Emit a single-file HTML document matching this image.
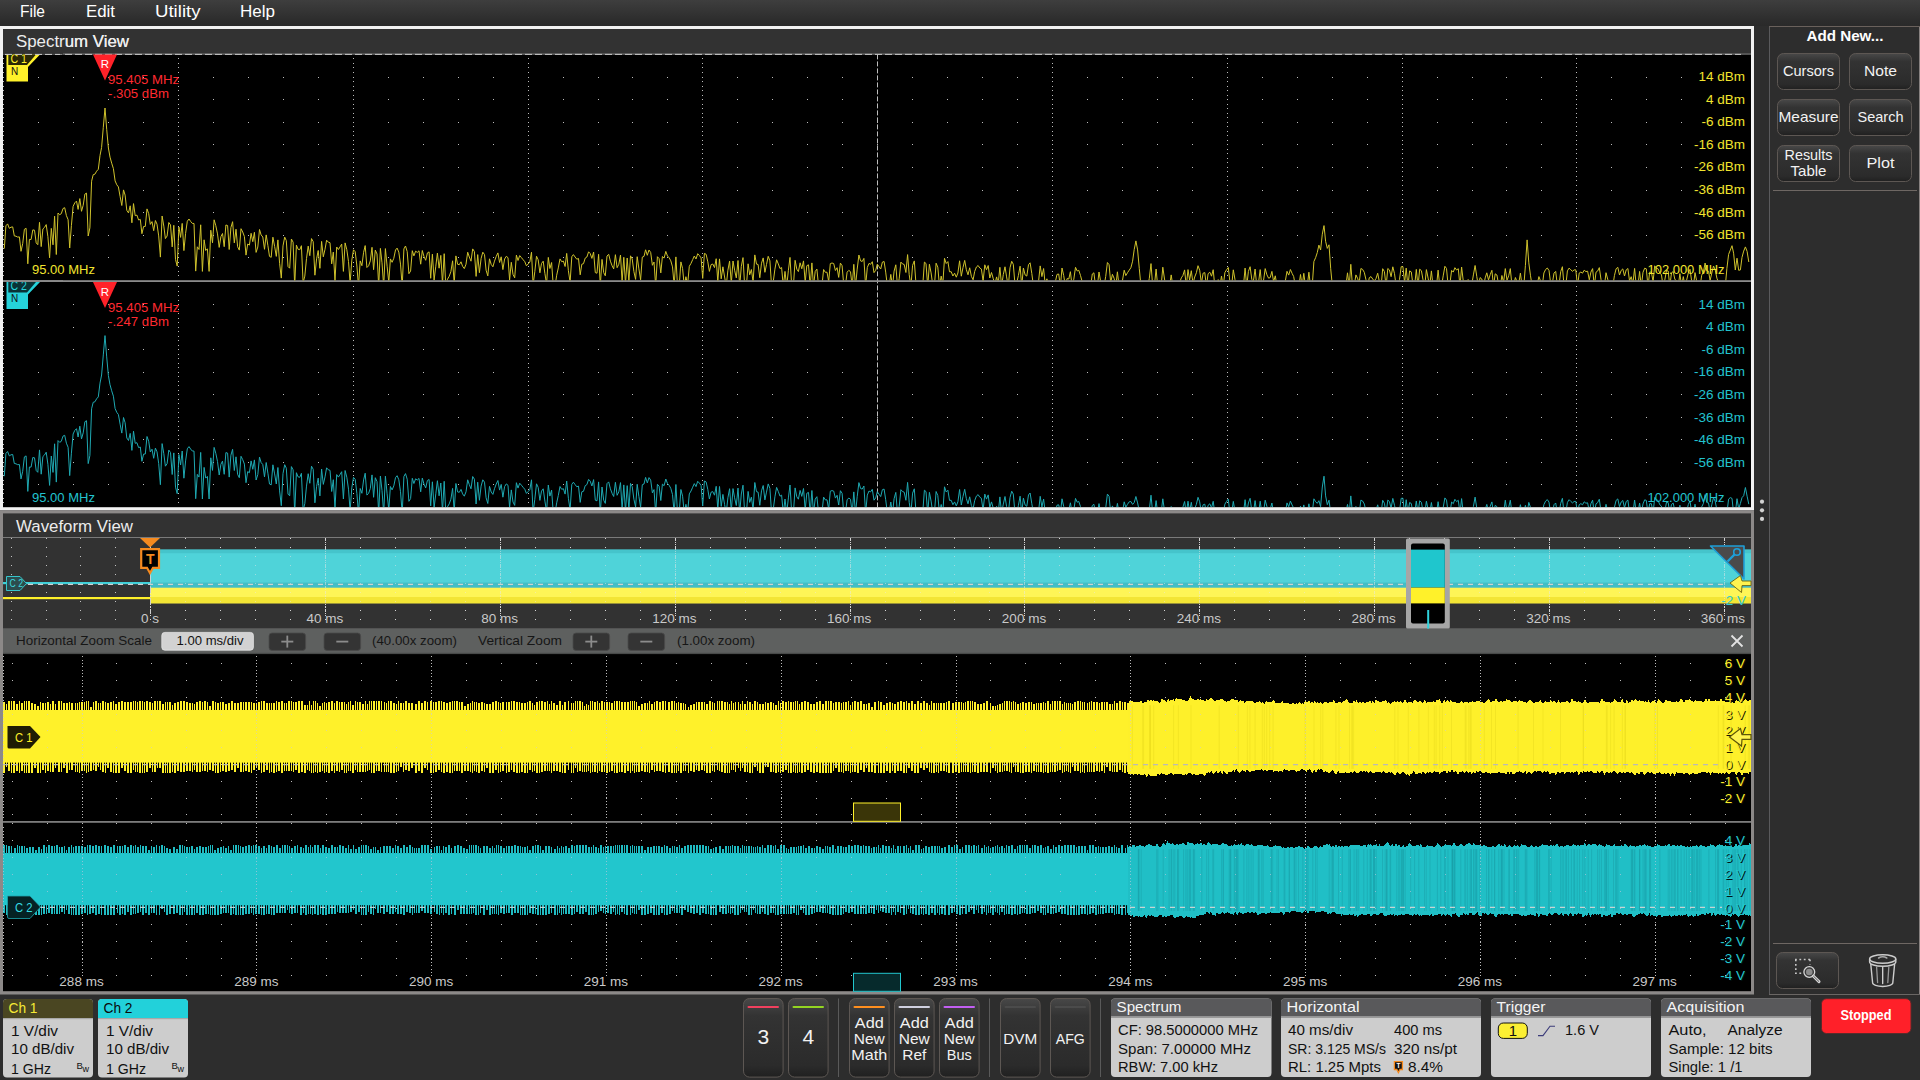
<!DOCTYPE html>
<html><head><meta charset="utf-8"><title>Scope</title>
<style>
html,body{margin:0;padding:0;background:#2d2d2d;width:1920px;height:1080px;overflow:hidden}
svg{position:absolute;left:0;top:0;font-family:"Liberation Sans",sans-serif}
text{white-space:pre}
</style></head><body>
<svg width="1920" height="1080" viewBox="0 0 1920 1080">
<defs><linearGradient id="gmenu" x1="0" y1="0" x2="0" y2="1"><stop offset="0" stop-color="#3e3e3e"/><stop offset="0.8" stop-color="#2c2c2c"/><stop offset="1" stop-color="#2a2a2a"/></linearGradient><linearGradient id="gbtn" x1="0" y1="0" x2="0" y2="1"><stop offset="0" stop-color="#484848"/><stop offset="0.22" stop-color="#333333"/><stop offset="0.85" stop-color="#2b2b2b"/><stop offset="1" stop-color="#202020"/></linearGradient></defs>
<rect x="0" y="0" width="1920" height="26" fill="url(#gmenu)"/>
<text x="20" y="17.2" font-size="16" fill="#fff" textLength="25" lengthAdjust="spacingAndGlyphs">File</text>
<text x="86" y="17.2" font-size="16" fill="#fff" textLength="29" lengthAdjust="spacingAndGlyphs">Edit</text>
<text x="155" y="17.2" font-size="16" fill="#fff" textLength="45.5" lengthAdjust="spacingAndGlyphs">Utility</text>
<text x="240" y="17.2" font-size="16" fill="#fff" textLength="35" lengthAdjust="spacingAndGlyphs">Help</text>
<rect x="0" y="26" width="1754" height="484.4" fill="#f2f2f2"/>
<rect x="3" y="29" width="1748" height="25.4" fill="#323232"/>
<rect x="3" y="54.4" width="1748" height="452.8" fill="#000"/>
<text x="16" y="47" font-size="16.3" fill="#ececec" textLength="113" lengthAdjust="spacingAndGlyphs">Spectrum View</text>
<rect x="0" y="510.4" width="1754" height="484.1" fill="#8c8988"/>
<rect x="3" y="513.4" width="1748" height="115.3" fill="#323232"/>
<rect x="3" y="537" width="1748" height="1" fill="#7a7a7a"/>
<rect x="3" y="628.6" width="1748" height="25.5" fill="#5e605f"/>
<rect x="3" y="654" width="1748" height="337.2" fill="#000"/>
<text x="16" y="531.6" font-size="16.3" fill="#ececec" textLength="117" lengthAdjust="spacingAndGlyphs">Waveform View</text>
<g stroke="#bcbcbc" stroke-width="1" opacity="1" shape-rendering="crispEdges"><line x1="38.16" y1="77.00" x2="1690" y2="77.00" stroke-dasharray="1 33.960"/><line x1="38.16" y1="99.60" x2="1690" y2="99.60" stroke-dasharray="1 33.960"/><line x1="38.16" y1="122.20" x2="1690" y2="122.20" stroke-dasharray="1 33.960"/><line x1="38.16" y1="144.80" x2="1690" y2="144.80" stroke-dasharray="1 33.960"/><line x1="38.16" y1="167.40" x2="1690" y2="167.40" stroke-dasharray="1 33.960"/><line x1="38.16" y1="190.00" x2="1690" y2="190.00" stroke-dasharray="1 33.960"/><line x1="38.16" y1="212.60" x2="1690" y2="212.60" stroke-dasharray="1 33.960"/><line x1="38.16" y1="235.20" x2="1690" y2="235.20" stroke-dasharray="1 33.960"/><line x1="38.16" y1="257.80" x2="1749.0" y2="257.80" stroke-dasharray="1 33.960"/><line x1="3.50" y1="58.42" x2="3.50" y2="280.40" stroke-dasharray="1 3.520"/><line x1="178.50" y1="58.42" x2="178.50" y2="280.40" stroke-dasharray="1 3.520"/><line x1="353.30" y1="58.42" x2="353.30" y2="280.40" stroke-dasharray="1 3.520"/><line x1="528.10" y1="58.42" x2="528.10" y2="280.40" stroke-dasharray="1 3.520"/><line x1="702.90" y1="58.42" x2="702.90" y2="280.40" stroke-dasharray="1 3.520"/><line x1="1052.50" y1="58.42" x2="1052.50" y2="280.40" stroke-dasharray="1 3.520"/><line x1="1227.30" y1="58.42" x2="1227.30" y2="280.40" stroke-dasharray="1 3.520"/><line x1="1402.10" y1="58.42" x2="1402.10" y2="280.40" stroke-dasharray="1 3.520"/><line x1="1576.90" y1="58.42" x2="1576.90" y2="280.40" stroke-dasharray="1 3.520"/></g>
<g stroke="#bcbcbc" stroke-width="1" opacity="1" shape-rendering="crispEdges"><line x1="38.16" y1="304.52" x2="1690" y2="304.52" stroke-dasharray="1 33.960"/><line x1="38.16" y1="327.04" x2="1690" y2="327.04" stroke-dasharray="1 33.960"/><line x1="38.16" y1="349.56" x2="1690" y2="349.56" stroke-dasharray="1 33.960"/><line x1="38.16" y1="372.08" x2="1690" y2="372.08" stroke-dasharray="1 33.960"/><line x1="38.16" y1="394.60" x2="1690" y2="394.60" stroke-dasharray="1 33.960"/><line x1="38.16" y1="417.12" x2="1690" y2="417.12" stroke-dasharray="1 33.960"/><line x1="38.16" y1="439.64" x2="1690" y2="439.64" stroke-dasharray="1 33.960"/><line x1="38.16" y1="462.16" x2="1690" y2="462.16" stroke-dasharray="1 33.960"/><line x1="38.16" y1="484.68" x2="1749.0" y2="484.68" stroke-dasharray="1 33.960"/><line x1="3.50" y1="286.00" x2="3.50" y2="507.20" stroke-dasharray="1 3.504"/><line x1="178.50" y1="286.00" x2="178.50" y2="507.20" stroke-dasharray="1 3.504"/><line x1="353.30" y1="286.00" x2="353.30" y2="507.20" stroke-dasharray="1 3.504"/><line x1="528.10" y1="286.00" x2="528.10" y2="507.20" stroke-dasharray="1 3.504"/><line x1="702.90" y1="286.00" x2="702.90" y2="507.20" stroke-dasharray="1 3.504"/><line x1="1052.50" y1="286.00" x2="1052.50" y2="507.20" stroke-dasharray="1 3.504"/><line x1="1227.30" y1="286.00" x2="1227.30" y2="507.20" stroke-dasharray="1 3.504"/><line x1="1402.10" y1="286.00" x2="1402.10" y2="507.20" stroke-dasharray="1 3.504"/><line x1="1576.90" y1="286.00" x2="1576.90" y2="507.20" stroke-dasharray="1 3.504"/></g>
<rect x="3" y="53.4" width="1748" height="1" fill="#6c6c6c"/>
<line x1="5" y1="54.4" x2="1741" y2="54.4" stroke="#c8c8c8" stroke-width="1" stroke-dasharray="7 3"/>
<line x1="877.5" y1="54.4" x2="877.5" y2="507" stroke="#bdbdbd" stroke-width="1" stroke-dasharray="5 2"/>
<rect x="3" y="280.2" width="1748" height="1.8" fill="#8a8a8a"/>
<clipPath id="c54"><rect x="3" y="54.4" width="1748" height="225.8"/></clipPath>
<path d="M4.3,248.6 5.9,225.8 7.6,223.9 9.3,228.3 11.0,227.2 12.7,226.9 14.3,235.9 16.0,236.2 17.7,237.1 19.4,236.9 21.0,251.3 22.7,243.7 24.4,229.3 26.1,228.3 27.8,263.8 29.4,239.4 31.1,239.5 32.8,229.9 34.5,230.2 36.2,242.9 37.8,244.7 39.5,222.3 41.2,246.6 42.9,228.9 44.6,227.3 46.2,224.6 47.9,236.7 49.6,257.8 51.3,228.4 53.0,244.8 54.6,216.2 56.3,254.5 58.0,213.0 59.7,214.7 61.3,213.7 63.0,208.5 64.7,207.7 66.4,215.6 68.1,219.7 69.7,248.0 71.4,225.6 73.1,206.4 74.8,202.8 76.5,201.1 78.1,209.4 79.8,198.6 81.5,211.3 83.2,205.3 84.9,194.1 86.5,193.1 88.2,236.0 89.9,227.9 91.6,181.2 93.2,174.7 94.9,174.2 96.6,171.2 98.3,169.3 100.0,155.5 101.6,147.4 103.3,127.3 105.0,108.0 106.7,129.3 108.4,148.0 110.0,157.1 111.7,163.2 113.4,168.6 115.1,180.9 116.8,184.8 118.4,186.9 120.1,196.5 121.8,205.5 123.5,189.9 125.1,195.1 126.8,210.4 128.5,212.9 130.2,205.8 131.9,222.8 133.5,203.6 135.2,215.7 136.9,215.1 138.6,220.0 140.3,219.4 141.9,233.7 143.6,226.5 145.3,226.4 147.0,208.9 148.7,213.6 150.3,224.4 152.0,221.6 153.7,230.7 155.4,220.5 157.0,224.2 158.7,235.9 160.4,257.1 162.1,216.0 163.8,226.1 165.4,238.6 167.1,236.0 168.8,222.5 170.5,224.9 172.2,246.9 173.8,225.3 175.5,259.6 177.2,266.1 178.9,227.0 180.6,237.4 182.2,223.4 183.9,250.6 185.6,233.3 187.3,221.2 189.0,219.0 190.6,221.4 192.3,223.4 194.0,223.5 195.7,271.1 197.3,246.8 199.0,249.5 200.7,224.8 202.4,271.4 204.1,239.8 205.7,250.5 207.4,248.8 209.1,271.4 210.8,230.2 212.5,242.8 214.1,219.8 215.8,225.7 217.5,233.9 219.2,247.4 220.9,236.7 222.5,233.5 224.2,246.7 225.9,225.0 227.6,225.5 229.2,249.5 230.9,227.6 232.6,221.7 234.3,242.9 236.0,229.2 237.6,246.7 239.3,250.1 241.0,228.7 242.7,232.0 244.4,236.5 246.0,255.1 247.7,244.0 249.4,245.1 251.1,233.3 252.8,241.7 254.4,232.3 256.1,252.4 257.8,247.0 259.5,229.5 261.1,234.9 262.8,237.0 264.5,249.3 266.2,234.9 267.9,245.6 269.5,256.4 271.2,257.3 272.9,237.2 274.6,246.3 276.3,256.4 277.9,239.9 279.6,263.3 281.3,278.1 283.0,245.9 284.7,237.1 286.3,240.6 288.0,266.5 289.7,268.2 291.4,239.0 293.1,242.2 294.7,286.4 296.4,245.1 298.1,249.3 299.8,249.7 301.4,245.7 303.1,282.7 304.8,276.1 306.5,258.5 308.2,246.1 309.8,255.7 311.5,238.6 313.2,241.7 314.9,275.2 316.6,258.8 318.2,250.5 319.9,268.3 321.6,241.4 323.3,256.8 325.0,249.3 326.6,240.2 328.3,242.2 330.0,242.7 331.7,263.9 333.3,252.1 335.0,281.2 336.7,247.0 338.4,249.5 340.1,246.8 341.7,244.1 343.4,271.4 345.1,242.9 346.8,249.6 348.5,261.6 350.1,283.1 351.8,260.2 353.5,249.8 355.2,251.7 356.9,266.0 358.5,286.4 360.2,260.9 361.9,265.7 363.6,252.3 365.2,245.6 366.9,267.5 368.6,265.8 370.3,260.9 372.0,247.3 373.6,269.7 375.3,250.1 377.0,254.0 378.7,286.2 380.4,248.4 382.0,262.8 383.7,286.4 385.4,248.6 387.1,266.2 388.8,282.2 390.4,258.9 392.1,262.3 393.8,258.3 395.5,250.0 397.1,248.1 398.8,252.1 400.5,264.1 402.2,286.4 403.9,248.9 405.5,246.0 407.2,251.6 408.9,273.7 410.6,271.0 412.3,250.7 413.9,255.9 415.6,251.2 417.3,252.4 419.0,250.8 420.7,264.2 422.3,250.5 424.0,256.6 425.7,260.3 427.4,252.9 429.1,251.9 430.7,278.3 432.4,254.2 434.1,280.1 435.8,266.2 437.4,253.1 439.1,268.2 440.8,255.4 442.5,283.9 444.2,253.7 445.8,286.3 447.5,279.2 449.2,276.3 450.9,271.6 452.6,260.8 454.2,283.7 455.9,255.9 457.6,264.3 459.3,264.7 461.0,261.8 462.6,266.3 464.3,268.6 466.0,264.2 467.7,252.2 469.3,257.0 471.0,261.2 472.7,248.9 474.4,251.6 476.1,276.4 477.7,254.6 479.4,272.7 481.1,258.5 482.8,252.2 484.5,254.6 486.1,270.2 487.8,275.9 489.5,258.8 491.2,264.4 492.9,266.8 494.5,261.1 496.2,256.5 497.9,252.9 499.6,262.5 501.2,256.8 502.9,269.6 504.6,259.0 506.3,256.3 508.0,257.7 509.6,279.9 511.3,262.3 513.0,274.4 514.7,277.8 516.4,255.1 518.0,260.5 519.7,255.6 521.4,257.6 523.1,259.7 524.8,261.7 526.4,265.8 528.1,264.0 529.8,262.1 531.5,252.2 533.1,284.8 534.8,271.7 536.5,256.2 538.2,259.8 539.9,272.8 541.5,263.5 543.2,261.2 544.9,273.5 546.6,284.1 548.3,257.4 549.9,268.5 551.6,262.5 553.3,286.4 555.0,286.4 556.7,275.2 558.3,267.9 560.0,258.9 561.7,261.7 563.4,261.1 565.1,266.5 566.7,253.4 568.4,270.7 570.1,282.3 571.8,256.7 573.4,254.6 575.1,257.0 576.8,259.2 578.5,258.5 580.2,274.8 581.8,264.2 583.5,263.7 585.2,258.1 586.9,257.0 588.6,251.8 590.2,253.5 591.9,258.4 593.6,252.0 595.3,272.6 597.0,273.2 598.6,254.3 600.3,285.7 602.0,259.4 603.7,272.6 605.3,275.8 607.0,256.0 608.7,254.3 610.4,261.2 612.1,265.8 613.7,268.9 615.4,254.7 617.1,267.7 618.8,264.3 620.5,255.0 622.1,281.8 623.8,257.3 625.5,283.9 627.2,258.0 628.9,281.7 630.5,255.8 632.2,258.9 633.9,271.6 635.6,279.4 637.2,256.7 638.9,268.9 640.6,279.8 642.3,257.1 644.0,256.4 645.6,249.8 647.3,255.3 649.0,250.0 650.7,252.5 652.4,265.3 654.0,262.0 655.7,286.4 657.4,256.7 659.1,258.6 660.8,272.9 662.4,256.5 664.1,258.1 665.8,251.4 667.5,256.0 669.2,257.8 670.8,260.8 672.5,266.9 674.2,285.6 675.9,256.9 677.5,286.1 679.2,286.4 680.9,261.9 682.6,268.6 684.3,286.4 685.9,276.7 687.6,284.7 689.3,266.3 691.0,263.4 692.7,259.6 694.3,256.0 696.0,259.0 697.7,253.7 699.4,255.5 701.1,257.9 702.7,278.4 704.4,253.4 706.1,254.3 707.8,261.8 709.4,271.4 711.1,264.6 712.8,264.0 714.5,267.6 716.2,258.7 717.8,281.7 719.5,258.9 721.2,278.8 722.9,266.8 724.6,277.0 726.2,286.4 727.9,270.2 729.6,261.1 731.3,283.4 733.0,261.0 734.6,270.2 736.3,277.9 738.0,260.5 739.7,286.4 741.3,266.4 743.0,257.6 744.7,286.4 746.4,286.4 748.1,263.8 749.7,274.8 751.4,269.5 753.1,281.9 754.8,254.9 756.5,264.1 758.1,264.5 759.8,277.7 761.5,263.2 763.2,257.9 764.9,272.3 766.5,264.5 768.2,256.3 769.9,260.8 771.6,286.4 773.2,282.2 774.9,269.2 776.6,259.8 778.3,263.9 780.0,268.6 781.6,267.5 783.3,286.4 785.0,271.4 786.7,286.4 788.4,270.3 790.0,257.4 791.7,286.4 793.4,285.9 795.1,260.3 796.8,269.2 798.4,271.6 800.1,262.8 801.8,268.8 803.5,260.9 805.2,282.3 806.8,265.7 808.5,264.8 810.2,286.4 811.9,262.9 813.5,286.4 815.2,271.5 816.9,269.1 818.6,286.4 820.3,286.4 821.9,286.4 823.6,269.5 825.3,272.3 827.0,272.2 828.7,281.6 830.3,263.6 832.0,263.0 833.7,263.5 835.4,270.5 837.1,267.7 838.7,277.4 840.4,263.1 842.1,265.7 843.8,285.7 845.4,285.8 847.1,272.2 848.8,270.4 850.5,271.7 852.2,286.4 853.8,264.3 855.5,286.4 857.2,269.1 858.9,255.0 860.6,260.9 862.2,261.5 863.9,258.4 865.6,286.4 867.3,267.5 869.0,263.4 870.6,264.3 872.3,261.7 874.0,272.6 875.7,270.3 877.3,264.1 879.0,266.6 880.7,269.0 882.4,262.1 884.1,261.5 885.7,272.1 887.4,286.4 889.1,286.4 890.8,274.4 892.5,286.4 894.1,271.1 895.8,264.8 897.5,286.4 899.2,278.8 900.9,262.1 902.5,263.9 904.2,264.5 905.9,272.5 907.6,254.6 909.2,274.6 910.9,286.4 912.6,265.3 914.3,260.9 916.0,284.2 917.6,281.8 919.3,281.2 921.0,286.4 922.7,286.4 924.4,262.1 926.0,263.5 927.7,286.4 929.4,264.2 931.1,272.9 932.8,285.4 934.4,286.4 936.1,263.2 937.8,267.1 939.5,286.4 941.2,276.1 942.8,284.4 944.5,258.3 946.2,263.5 947.9,261.6 949.5,271.8 951.2,271.7 952.9,276.0 954.6,273.2 956.3,277.2 957.9,273.0 959.6,260.8 961.3,276.2 963.0,267.5 964.7,260.4 966.3,269.5 968.0,274.8 969.7,267.8 971.4,276.4 973.1,279.8 974.7,271.4 976.4,267.0 978.1,265.5 979.8,268.0 981.4,269.0 983.1,281.2 984.8,264.8 986.5,269.7 988.2,265.5 989.8,278.0 991.5,272.5 993.2,278.4 994.9,284.1 996.6,276.9 998.2,283.5 999.9,267.3 1001.6,286.4 1003.3,274.5 1005.0,266.8 1006.6,276.9 1008.3,286.4 1010.0,267.8 1011.7,261.3 1013.3,264.3 1015.0,284.7 1016.7,282.7 1018.4,275.5 1020.1,266.2 1021.7,286.4 1023.4,268.0 1025.1,274.9 1026.8,276.1 1028.5,264.7 1030.1,262.8 1031.8,273.5 1033.5,286.4 1035.2,286.4 1036.9,286.4 1038.5,281.8 1040.2,265.9 1041.9,276.6 1043.6,268.5 1045.3,285.8 1046.9,278.8 1048.6,286.4 1050.3,286.4 1052.0,286.4 1053.6,286.4 1055.3,282.0 1057.0,274.4 1058.7,274.0 1060.4,286.4 1062.0,268.0 1063.7,275.5 1065.4,286.4 1067.1,278.6 1068.8,279.0 1070.4,271.7 1072.1,286.4 1073.8,279.2 1075.5,267.3 1077.2,271.0 1078.8,270.3 1080.5,275.5 1082.2,281.8 1083.9,286.4 1085.5,286.4 1087.2,286.4 1088.9,281.7 1090.6,286.4 1092.3,274.0 1093.9,272.8 1095.6,286.4 1097.3,286.4 1099.0,272.0 1100.7,281.7 1102.3,286.4 1104.0,286.4 1105.7,276.5 1107.4,262.5 1109.1,264.7 1110.7,282.8 1112.4,274.3 1114.1,278.3 1115.8,286.4 1117.4,271.8 1119.1,286.4 1120.8,286.4 1122.5,280.3 1124.2,270.2 1125.8,275.6 1127.5,272.7 1129.2,270.2 1130.9,267.7 1132.6,261.2 1134.2,249.6 1135.9,240.9 1137.6,249.9 1139.3,268.7 1141.0,286.4 1142.6,283.4 1144.3,282.2 1146.0,285.6 1147.7,286.4 1149.3,278.4 1151.0,263.6 1152.7,286.4 1154.4,285.6 1156.1,269.0 1157.7,286.4 1159.4,280.6 1161.1,286.4 1162.8,267.2 1164.5,279.0 1166.1,286.4 1167.8,285.2 1169.5,286.4 1171.2,274.9 1172.9,286.4 1174.5,286.4 1176.2,286.4 1177.9,286.4 1179.6,282.9 1181.3,277.9 1182.9,275.5 1184.6,269.9 1186.3,286.4 1188.0,269.6 1189.6,280.0 1191.3,270.7 1193.0,283.6 1194.7,277.0 1196.4,272.7 1198.0,265.7 1199.7,270.2 1201.4,283.5 1203.1,273.2 1204.8,272.6 1206.4,286.4 1208.1,273.7 1209.8,272.2 1211.5,276.2 1213.2,269.7 1214.8,286.4 1216.5,286.4 1218.2,279.6 1219.9,286.4 1221.5,276.0 1223.2,286.4 1224.9,272.5 1226.6,269.7 1228.3,267.5 1229.9,281.9 1231.6,286.4 1233.3,269.8 1235.0,279.7 1236.7,286.4 1238.3,286.4 1240.0,284.8 1241.7,286.4 1243.4,286.4 1245.1,268.1 1246.7,286.4 1248.4,271.4 1250.1,266.7 1251.8,279.4 1253.4,281.3 1255.1,269.0 1256.8,286.4 1258.5,282.9 1260.2,269.6 1261.8,286.4 1263.5,280.7 1265.2,268.6 1266.9,274.8 1268.6,278.2 1270.2,277.6 1271.9,271.4 1273.6,281.6 1275.3,275.8 1277.0,286.4 1278.6,286.4 1280.3,286.4 1282.0,286.4 1283.7,285.8 1285.3,281.1 1287.0,271.3 1288.7,275.1 1290.4,269.5 1292.1,273.4 1293.7,276.6 1295.4,286.4 1297.1,286.4 1298.8,286.4 1300.5,274.5 1302.1,286.4 1303.8,273.3 1305.5,286.4 1307.2,286.4 1308.9,272.2 1310.5,286.4 1312.2,286.4 1313.9,261.5 1315.6,257.7 1317.3,252.5 1318.9,245.1 1320.6,250.0 1322.3,234.2 1324.0,225.6 1325.6,241.3 1327.3,248.4 1329.0,244.8 1330.7,268.7 1332.4,286.4 1334.0,286.4 1335.7,286.4 1337.4,286.4 1339.1,286.4 1340.8,286.4 1342.4,284.4 1344.1,286.4 1345.8,286.4 1347.5,272.8 1349.2,286.4 1350.8,264.3 1352.5,286.4 1354.2,286.4 1355.9,274.9 1357.5,278.2 1359.2,282.9 1360.9,268.5 1362.6,269.4 1364.3,272.4 1365.9,279.4 1367.6,286.4 1369.3,277.7 1371.0,276.6 1372.7,279.0 1374.3,281.0 1376.0,278.5 1377.7,273.2 1379.4,281.9 1381.1,286.4 1382.7,268.7 1384.4,271.6 1386.1,286.4 1387.8,268.5 1389.4,269.9 1391.1,276.7 1392.8,266.8 1394.5,273.7 1396.2,286.4 1397.8,286.4 1399.5,279.4 1401.2,266.7 1402.9,266.6 1404.6,282.6 1406.2,268.1 1407.9,286.4 1409.6,270.9 1411.3,271.9 1413.0,285.5 1414.6,286.4 1416.3,269.4 1418.0,286.4 1419.7,269.2 1421.4,270.7 1423.0,279.7 1424.7,286.4 1426.4,269.6 1428.1,278.1 1429.7,286.4 1431.4,270.9 1433.1,286.4 1434.8,286.4 1436.5,286.4 1438.1,270.1 1439.8,286.4 1441.5,286.4 1443.2,275.9 1444.9,266.3 1446.5,268.5 1448.2,286.4 1449.9,284.0 1451.6,270.4 1453.3,272.1 1454.9,267.7 1456.6,270.0 1458.3,268.7 1460.0,286.4 1461.6,267.0 1463.3,281.3 1465.0,281.0 1466.7,280.7 1468.4,279.7 1470.0,286.4 1471.7,285.0 1473.4,274.9 1475.1,265.5 1476.8,276.7 1478.4,286.4 1480.1,277.6 1481.8,279.0 1483.5,286.4 1485.2,277.9 1486.8,272.8 1488.5,279.9 1490.2,274.7 1491.9,270.3 1493.5,286.4 1495.2,273.8 1496.9,275.0 1498.6,284.3 1500.3,286.4 1501.9,275.5 1503.6,282.2 1505.3,268.6 1507.0,280.3 1508.7,275.8 1510.3,268.6 1512.0,286.0 1513.7,284.9 1515.4,277.5 1517.1,281.8 1518.7,284.1 1520.4,273.1 1522.1,286.4 1523.8,286.4 1525.4,265.7 1527.1,239.9 1528.8,262.8 1530.5,275.8 1532.2,286.4 1533.8,286.4 1535.5,286.4 1537.2,284.2 1538.9,276.6 1540.6,281.0 1542.2,286.4 1543.9,273.0 1545.6,269.5 1547.3,268.0 1549.0,270.5 1550.6,283.0 1552.3,283.7 1554.0,273.1 1555.7,271.4 1557.4,285.7 1559.0,285.3 1560.7,271.7 1562.4,266.7 1564.1,286.4 1565.7,286.4 1567.4,270.9 1569.1,268.1 1570.8,269.8 1572.5,271.3 1574.1,269.9 1575.8,269.8 1577.5,286.4 1579.2,273.1 1580.9,272.0 1582.5,273.2 1584.2,270.2 1585.9,271.6 1587.6,271.2 1589.3,279.8 1590.9,272.1 1592.6,268.6 1594.3,286.4 1596.0,272.2 1597.6,271.1 1599.3,267.6 1601.0,279.5 1602.7,286.4 1604.4,286.4 1606.0,272.7 1607.7,279.2 1609.4,283.7 1611.1,286.4 1612.8,286.4 1614.4,275.7 1616.1,268.8 1617.8,267.3 1619.5,275.0 1621.2,270.4 1622.8,268.9 1624.5,276.0 1626.2,269.9 1627.9,268.5 1629.5,280.8 1631.2,276.7 1632.9,283.7 1634.6,268.4 1636.3,286.4 1637.9,286.4 1639.6,271.4 1641.3,286.4 1643.0,272.3 1644.7,268.2 1646.3,268.8 1648.0,286.4 1649.7,272.1 1651.4,272.1 1653.1,281.6 1654.7,265.8 1656.4,268.3 1658.1,268.8 1659.8,273.2 1661.4,274.4 1663.1,286.4 1664.8,279.9 1666.5,270.5 1668.2,271.0 1669.8,286.4 1671.5,272.9 1673.2,271.5 1674.9,279.5 1676.6,280.7 1678.2,286.4 1679.9,273.6 1681.6,286.4 1683.3,276.6 1685.0,286.4 1686.6,280.3 1688.3,272.9 1690.0,269.3 1691.7,281.2 1693.4,286.4 1695.0,272.6 1696.7,281.1 1698.4,286.4 1700.1,286.4 1701.7,275.3 1703.4,271.8 1705.1,263.0 1706.8,271.0 1708.5,271.2 1710.1,280.4 1711.8,273.1 1713.5,266.0 1715.2,269.8 1716.9,278.2 1718.5,282.4 1720.2,283.1 1721.9,281.9 1723.6,286.4 1725.3,286.4 1726.9,268.4 1728.6,254.4 1730.3,250.1 1732.0,245.7 1733.6,253.2 1735.3,270.0 1737.0,258.2 1738.7,270.3 1740.4,269.9 1742.0,257.4 1743.7,251.1 1745.4,246.9 1747.1,251.4 1748.8,262.0" fill="none" stroke="#cfc22c" stroke-width="1" stroke-linejoin="bevel" clip-path="url(#c54)"/>
<clipPath id="c282"><rect x="3" y="282.0" width="1748" height="225.0"/></clipPath>
<path d="M4.3,476.2 5.9,453.4 7.6,451.5 9.3,455.9 11.0,454.8 12.7,454.5 14.3,463.5 16.0,463.8 17.7,464.7 19.4,464.5 21.0,478.9 22.7,471.3 24.4,456.9 26.1,455.9 27.8,491.4 29.4,467.0 31.1,467.1 32.8,457.5 34.5,457.8 36.2,470.5 37.8,472.3 39.5,449.9 41.2,474.2 42.9,456.5 44.6,454.9 46.2,452.2 47.9,464.3 49.6,485.4 51.3,456.0 53.0,472.4 54.6,443.8 56.3,482.1 58.0,440.6 59.7,442.3 61.3,441.3 63.0,436.1 64.7,435.3 66.4,443.2 68.1,447.3 69.7,475.6 71.4,453.2 73.1,434.0 74.8,430.4 76.5,428.7 78.1,437.0 79.8,426.2 81.5,438.9 83.2,432.9 84.9,421.7 86.5,420.7 88.2,463.6 89.9,455.5 91.6,408.8 93.2,402.3 94.9,401.8 96.6,398.8 98.3,396.9 100.0,383.1 101.6,375.0 103.3,354.9 105.0,335.6 106.7,356.9 108.4,375.6 110.0,384.7 111.7,390.8 113.4,396.2 115.1,408.5 116.8,412.4 118.4,414.5 120.1,424.1 121.8,433.1 123.5,417.5 125.1,422.7 126.8,438.0 128.5,440.5 130.2,433.4 131.9,450.4 133.5,431.2 135.2,443.3 136.9,442.7 138.6,447.6 140.3,447.0 141.9,461.3 143.6,454.1 145.3,454.0 147.0,436.5 148.7,441.2 150.3,452.0 152.0,449.2 153.7,458.3 155.4,448.1 157.0,451.8 158.7,463.5 160.4,484.7 162.1,443.6 163.8,453.7 165.4,466.2 167.1,463.6 168.8,450.1 170.5,452.5 172.2,474.5 173.8,452.9 175.5,487.2 177.2,493.7 178.9,454.6 180.6,465.0 182.2,451.0 183.9,478.2 185.6,460.9 187.3,448.8 189.0,446.6 190.6,449.0 192.3,451.0 194.0,451.1 195.7,498.7 197.3,474.4 199.0,477.1 200.7,452.4 202.4,499.0 204.1,467.4 205.7,478.1 207.4,476.4 209.1,499.0 210.8,457.8 212.5,470.4 214.1,447.4 215.8,453.3 217.5,461.5 219.2,475.0 220.9,464.3 222.5,461.1 224.2,474.3 225.9,452.6 227.6,453.1 229.2,477.1 230.9,455.2 232.6,449.3 234.3,470.5 236.0,456.8 237.6,474.3 239.3,477.7 241.0,456.3 242.7,459.6 244.4,464.1 246.0,482.7 247.7,471.6 249.4,472.7 251.1,460.9 252.8,469.3 254.4,459.9 256.1,480.0 257.8,474.6 259.5,457.1 261.1,462.5 262.8,464.6 264.5,476.9 266.2,462.5 267.9,473.2 269.5,484.0 271.2,484.9 272.9,464.8 274.6,473.9 276.3,484.0 277.9,467.5 279.6,490.9 281.3,505.7 283.0,473.5 284.7,464.7 286.3,468.2 288.0,494.1 289.7,495.8 291.4,466.6 293.1,469.8 294.7,513.2 296.4,472.7 298.1,476.9 299.8,477.3 301.4,473.3 303.1,510.3 304.8,503.7 306.5,486.1 308.2,473.7 309.8,483.3 311.5,466.2 313.2,469.3 314.9,502.8 316.6,486.4 318.2,478.1 319.9,495.9 321.6,469.0 323.3,484.4 325.0,476.9 326.6,467.8 328.3,469.8 330.0,470.3 331.7,491.5 333.3,479.7 335.0,508.8 336.7,474.6 338.4,477.1 340.1,474.4 341.7,471.7 343.4,499.0 345.1,470.5 346.8,477.2 348.5,489.2 350.1,510.7 351.8,487.8 353.5,477.4 355.2,479.3 356.9,493.6 358.5,513.2 360.2,488.5 361.9,493.3 363.6,479.9 365.2,473.2 366.9,495.1 368.6,493.4 370.3,488.5 372.0,474.9 373.6,497.3 375.3,477.7 377.0,481.6 378.7,513.2 380.4,476.0 382.0,490.4 383.7,513.2 385.4,476.2 387.1,493.8 388.8,509.8 390.4,486.5 392.1,489.9 393.8,485.9 395.5,477.6 397.1,475.7 398.8,479.7 400.5,491.7 402.2,513.2 403.9,476.5 405.5,473.6 407.2,479.2 408.9,501.3 410.6,498.6 412.3,478.3 413.9,483.5 415.6,478.8 417.3,480.0 419.0,478.4 420.7,491.8 422.3,478.1 424.0,484.2 425.7,487.9 427.4,480.5 429.1,479.5 430.7,505.9 432.4,481.8 434.1,507.7 435.8,493.8 437.4,480.7 439.1,495.8 440.8,483.0 442.5,511.5 444.2,481.3 445.8,513.2 447.5,506.8 449.2,503.9 450.9,499.2 452.6,488.4 454.2,511.3 455.9,483.5 457.6,491.9 459.3,492.3 461.0,489.4 462.6,493.9 464.3,496.2 466.0,491.8 467.7,479.8 469.3,484.6 471.0,488.8 472.7,476.5 474.4,479.2 476.1,504.0 477.7,482.2 479.4,500.3 481.1,486.1 482.8,479.8 484.5,482.2 486.1,497.8 487.8,503.5 489.5,486.4 491.2,492.0 492.9,494.4 494.5,488.7 496.2,484.1 497.9,480.5 499.6,490.1 501.2,484.4 502.9,497.2 504.6,486.6 506.3,483.9 508.0,485.3 509.6,507.5 511.3,489.9 513.0,502.0 514.7,505.4 516.4,482.7 518.0,488.1 519.7,483.2 521.4,485.2 523.1,487.3 524.8,489.3 526.4,493.4 528.1,491.6 529.8,489.7 531.5,479.8 533.1,512.4 534.8,499.3 536.5,483.8 538.2,487.4 539.9,500.4 541.5,491.1 543.2,488.8 544.9,501.1 546.6,511.7 548.3,485.0 549.9,496.1 551.6,490.1 553.3,513.2 555.0,513.2 556.7,502.8 558.3,495.5 560.0,486.5 561.7,489.3 563.4,488.7 565.1,494.1 566.7,481.0 568.4,498.3 570.1,509.9 571.8,484.3 573.4,482.2 575.1,484.6 576.8,486.8 578.5,486.1 580.2,502.4 581.8,491.8 583.5,491.3 585.2,485.7 586.9,484.6 588.6,479.4 590.2,481.1 591.9,486.0 593.6,479.6 595.3,500.2 597.0,500.8 598.6,481.9 600.3,513.2 602.0,487.0 603.7,500.2 605.3,503.4 607.0,483.6 608.7,481.9 610.4,488.8 612.1,493.4 613.7,496.5 615.4,482.3 617.1,495.3 618.8,491.9 620.5,482.6 622.1,509.4 623.8,484.9 625.5,511.5 627.2,485.6 628.9,509.3 630.5,483.4 632.2,486.5 633.9,499.2 635.6,507.0 637.2,484.3 638.9,496.5 640.6,507.4 642.3,484.7 644.0,484.0 645.6,477.4 647.3,482.9 649.0,477.6 650.7,480.1 652.4,492.9 654.0,489.6 655.7,513.2 657.4,484.3 659.1,486.2 660.8,500.5 662.4,484.1 664.1,485.7 665.8,479.0 667.5,483.6 669.2,485.4 670.8,488.4 672.5,494.5 674.2,513.2 675.9,484.5 677.5,513.2 679.2,513.2 680.9,489.5 682.6,496.2 684.3,513.2 685.9,504.3 687.6,512.3 689.3,493.9 691.0,491.0 692.7,487.2 694.3,483.6 696.0,486.6 697.7,481.3 699.4,483.1 701.1,485.5 702.7,506.0 704.4,481.0 706.1,481.9 707.8,489.4 709.4,499.0 711.1,492.2 712.8,491.6 714.5,495.2 716.2,486.3 717.8,509.3 719.5,486.5 721.2,506.4 722.9,494.4 724.6,504.6 726.2,513.2 727.9,497.8 729.6,488.7 731.3,511.0 733.0,488.6 734.6,497.8 736.3,505.5 738.0,488.1 739.7,513.2 741.3,494.0 743.0,485.2 744.7,513.2 746.4,513.2 748.1,491.4 749.7,502.4 751.4,497.1 753.1,509.5 754.8,482.5 756.5,491.7 758.1,492.1 759.8,505.3 761.5,490.8 763.2,485.5 764.9,499.9 766.5,492.1 768.2,483.9 769.9,488.4 771.6,513.2 773.2,509.8 774.9,496.8 776.6,487.4 778.3,491.5 780.0,496.2 781.6,495.1 783.3,513.2 785.0,499.0 786.7,513.2 788.4,497.9 790.0,485.0 791.7,513.2 793.4,513.2 795.1,487.9 796.8,496.8 798.4,499.2 800.1,490.4 801.8,496.4 803.5,488.5 805.2,509.9 806.8,493.3 808.5,492.4 810.2,513.2 811.9,490.5 813.5,513.2 815.2,499.1 816.9,496.7 818.6,513.2 820.3,513.2 821.9,513.2 823.6,497.1 825.3,499.9 827.0,499.8 828.7,509.2 830.3,491.2 832.0,490.6 833.7,491.1 835.4,498.1 837.1,495.3 838.7,505.0 840.4,490.7 842.1,493.3 843.8,513.2 845.4,513.2 847.1,499.8 848.8,498.0 850.5,499.3 852.2,513.2 853.8,491.9 855.5,513.2 857.2,496.7 858.9,482.6 860.6,488.5 862.2,489.1 863.9,486.0 865.6,513.2 867.3,495.1 869.0,491.0 870.6,491.9 872.3,489.3 874.0,500.2 875.7,497.9 877.3,491.7 879.0,494.2 880.7,496.6 882.4,489.7 884.1,489.1 885.7,499.7 887.4,513.2 889.1,513.2 890.8,502.0 892.5,513.2 894.1,498.7 895.8,492.4 897.5,513.2 899.2,506.4 900.9,489.7 902.5,491.5 904.2,492.2 905.9,500.3 907.6,482.4 909.2,502.3 910.9,513.2 912.6,493.1 914.3,488.8 916.0,512.1 917.6,509.8 919.3,509.2 921.0,513.2 922.7,513.2 924.4,490.2 926.0,491.6 927.7,513.2 929.4,492.3 931.1,501.1 932.8,513.2 934.4,513.2 936.1,491.5 937.8,495.5 939.5,513.2 941.2,504.5 942.8,512.9 944.5,486.8 946.2,492.0 947.9,490.2 949.5,500.4 951.2,500.3 952.9,504.7 954.6,501.9 956.3,505.9 957.9,501.8 959.6,489.5 961.3,505.0 963.0,496.4 964.7,489.3 966.3,498.4 968.0,503.8 969.7,496.8 971.4,505.5 973.1,508.9 974.7,500.5 976.4,496.1 978.1,494.6 979.8,497.2 981.4,498.3 983.1,510.4 984.8,494.1 986.5,499.1 988.2,494.9 989.8,507.4 991.5,501.9 993.2,507.9 994.9,513.2 996.6,506.4 998.2,513.1 999.9,496.9 1001.6,513.2 1003.3,504.1 1005.0,496.5 1006.6,506.6 1008.3,513.2 1010.0,497.6 1011.7,491.2 1013.3,494.1 1015.0,513.2 1016.7,512.7 1018.4,505.5 1020.1,496.2 1021.7,513.2 1023.4,498.1 1025.1,505.0 1026.8,506.3 1028.5,494.9 1030.1,493.0 1031.8,503.7 1033.5,513.2 1035.2,513.2 1036.9,513.2 1038.5,512.2 1040.2,496.3 1041.9,507.0 1043.6,499.0 1045.3,513.2 1046.9,509.3 1048.6,513.2 1050.3,513.2 1052.0,513.2 1053.6,513.2 1055.3,512.7 1057.0,505.2 1058.7,504.8 1060.4,513.2 1062.0,498.8 1063.7,506.4 1065.4,513.2 1067.1,509.6 1068.8,509.9 1070.4,502.8 1072.1,513.2 1073.8,510.2 1075.5,498.4 1077.2,502.2 1078.8,501.5 1080.5,506.7 1082.2,513.0 1083.9,513.2 1085.5,513.2 1087.2,513.2 1088.9,513.1 1090.6,513.2 1092.3,505.5 1093.9,504.3 1095.6,513.2 1097.3,513.2 1099.0,503.6 1100.7,513.2 1102.3,513.2 1104.0,513.2 1105.7,508.1 1107.4,494.1 1109.1,496.3 1110.7,513.2 1112.4,505.9 1114.1,509.9 1115.8,513.2 1117.4,503.4 1119.1,513.2 1120.8,513.2 1122.5,511.9 1124.2,501.8 1125.8,507.2 1127.5,504.3 1129.2,501.8 1130.9,501.5 1132.6,504.4 1134.2,502.6 1135.9,496.5 1137.6,502.9 1139.3,511.0 1141.0,513.2 1142.6,513.2 1144.3,513.2 1146.0,513.2 1147.7,513.2 1149.3,510.0 1151.0,495.2 1152.7,513.2 1154.4,513.2 1156.1,500.6 1157.7,513.2 1159.4,512.2 1161.1,513.2 1162.8,498.8 1164.5,510.6 1166.1,513.2 1167.8,513.2 1169.5,513.2 1171.2,506.5 1172.9,513.2 1174.5,513.2 1176.2,513.2 1177.9,513.2 1179.6,513.2 1181.3,509.5 1182.9,507.1 1184.6,501.5 1186.3,513.2 1188.0,501.2 1189.6,511.6 1191.3,502.3 1193.0,513.2 1194.7,508.6 1196.4,504.3 1198.0,497.3 1199.7,501.8 1201.4,513.2 1203.1,504.8 1204.8,504.2 1206.4,513.2 1208.1,505.3 1209.8,503.8 1211.5,507.8 1213.2,501.3 1214.8,513.2 1216.5,513.2 1218.2,511.2 1219.9,513.2 1221.5,507.6 1223.2,513.2 1224.9,504.1 1226.6,501.3 1228.3,499.1 1229.9,513.2 1231.6,513.2 1233.3,501.4 1235.0,511.3 1236.7,513.2 1238.3,513.2 1240.0,513.2 1241.7,513.2 1243.4,513.2 1245.1,499.7 1246.7,513.2 1248.4,503.0 1250.1,498.3 1251.8,511.0 1253.4,512.9 1255.1,500.6 1256.8,513.2 1258.5,513.2 1260.2,501.2 1261.8,513.2 1263.5,512.3 1265.2,500.2 1266.9,506.4 1268.6,509.8 1270.2,509.2 1271.9,503.0 1273.6,513.2 1275.3,507.4 1277.0,513.2 1278.6,513.2 1280.3,513.2 1282.0,513.2 1283.7,513.2 1285.3,512.7 1287.0,502.9 1288.7,506.7 1290.4,501.1 1292.1,505.0 1293.7,508.2 1295.4,513.2 1297.1,513.2 1298.8,513.2 1300.5,506.1 1302.1,513.2 1303.8,504.9 1305.5,513.2 1307.2,513.2 1308.9,503.8 1310.5,513.2 1312.2,513.2 1313.9,498.8 1315.6,501.8 1317.3,503.3 1318.9,500.7 1320.6,506.7 1322.3,487.0 1324.0,476.2 1325.6,495.9 1327.3,504.7 1329.0,500.2 1330.7,513.2 1332.4,513.2 1334.0,513.2 1335.7,513.2 1337.4,513.2 1339.1,513.2 1340.8,513.2 1342.4,513.2 1344.1,513.2 1345.8,513.2 1347.5,504.4 1349.2,513.2 1350.8,495.9 1352.5,513.2 1354.2,513.2 1355.9,506.5 1357.5,509.8 1359.2,513.2 1360.9,500.1 1362.6,501.0 1364.3,504.0 1365.9,511.0 1367.6,513.2 1369.3,509.3 1371.0,508.2 1372.7,510.6 1374.3,512.6 1376.0,510.1 1377.7,504.8 1379.4,513.2 1381.1,513.2 1382.7,500.3 1384.4,503.2 1386.1,513.2 1387.8,500.1 1389.4,501.5 1391.1,508.3 1392.8,498.4 1394.5,505.3 1396.2,513.2 1397.8,513.2 1399.5,511.0 1401.2,498.3 1402.9,498.2 1404.6,513.2 1406.2,499.7 1407.9,513.2 1409.6,502.5 1411.3,503.5 1413.0,513.2 1414.6,513.2 1416.3,501.0 1418.0,513.2 1419.7,500.8 1421.4,502.3 1423.0,511.3 1424.7,513.2 1426.4,501.2 1428.1,509.7 1429.7,513.2 1431.4,502.5 1433.1,513.2 1434.8,513.2 1436.5,513.2 1438.1,501.7 1439.8,513.2 1441.5,513.2 1443.2,507.5 1444.9,497.9 1446.5,500.1 1448.2,513.2 1449.9,513.2 1451.6,502.0 1453.3,503.7 1454.9,499.3 1456.6,501.6 1458.3,500.3 1460.0,513.2 1461.6,498.6 1463.3,512.9 1465.0,512.6 1466.7,512.3 1468.4,511.3 1470.0,513.2 1471.7,513.2 1473.4,506.5 1475.1,497.1 1476.8,508.3 1478.4,513.2 1480.1,509.2 1481.8,510.6 1483.5,513.2 1485.2,509.5 1486.8,504.4 1488.5,511.5 1490.2,506.3 1491.9,501.9 1493.5,513.2 1495.2,505.4 1496.9,506.6 1498.6,513.2 1500.3,513.2 1501.9,507.1 1503.6,513.2 1505.3,500.2 1507.0,511.9 1508.7,507.4 1510.3,500.2 1512.0,513.2 1513.7,513.2 1515.4,509.1 1517.1,513.2 1518.7,513.2 1520.4,504.7 1522.1,513.2 1523.8,513.2 1525.4,505.3 1527.1,513.2 1528.8,502.4 1530.5,507.4 1532.2,513.2 1533.8,513.2 1535.5,513.2 1537.2,513.2 1538.9,508.2 1540.6,512.6 1542.2,513.2 1543.9,504.6 1545.6,501.1 1547.3,499.6 1549.0,502.1 1550.6,513.2 1552.3,513.2 1554.0,504.7 1555.7,503.0 1557.4,513.2 1559.0,513.2 1560.7,503.3 1562.4,498.3 1564.1,513.2 1565.7,513.2 1567.4,502.5 1569.1,499.7 1570.8,501.4 1572.5,502.9 1574.1,501.5 1575.8,501.4 1577.5,513.2 1579.2,504.7 1580.9,503.6 1582.5,504.8 1584.2,501.8 1585.9,503.2 1587.6,502.8 1589.3,511.4 1590.9,503.7 1592.6,500.2 1594.3,513.2 1596.0,503.8 1597.6,502.7 1599.3,499.2 1601.0,511.1 1602.7,513.2 1604.4,513.2 1606.0,504.3 1607.7,510.8 1609.4,513.2 1611.1,513.2 1612.8,513.2 1614.4,507.3 1616.1,500.4 1617.8,498.9 1619.5,506.6 1621.2,502.0 1622.8,500.5 1624.5,507.6 1626.2,501.5 1627.9,500.1 1629.5,512.4 1631.2,508.3 1632.9,513.2 1634.6,500.0 1636.3,513.2 1637.9,513.2 1639.6,503.0 1641.3,513.2 1643.0,503.9 1644.7,499.8 1646.3,500.4 1648.0,513.2 1649.7,503.7 1651.4,503.7 1653.1,513.2 1654.7,497.4 1656.4,499.9 1658.1,500.4 1659.8,504.8 1661.4,506.0 1663.1,513.2 1664.8,511.5 1666.5,502.1 1668.2,502.6 1669.8,513.2 1671.5,504.5 1673.2,503.1 1674.9,511.1 1676.6,512.3 1678.2,513.2 1679.9,505.2 1681.6,513.2 1683.3,508.2 1685.0,513.2 1686.6,511.9 1688.3,504.5 1690.0,500.9 1691.7,512.8 1693.4,513.2 1695.0,504.2 1696.7,512.7 1698.4,513.2 1700.1,513.2 1701.7,506.9 1703.4,503.4 1705.1,494.6 1706.8,502.6 1708.5,502.8 1710.1,512.0 1711.8,504.7 1713.5,497.6 1715.2,501.4 1716.9,509.8 1718.5,513.2 1720.2,513.2 1721.9,513.2 1723.6,513.2 1725.3,513.2 1726.9,513.2 1728.6,499.1 1730.3,497.6 1732.0,498.4 1733.6,512.9 1735.3,513.2 1737.0,498.7 1738.7,508.9 1740.4,503.4 1742.0,497.6 1743.7,495.7 1745.4,487.5 1747.1,496.2 1748.8,504.2" fill="none" stroke="#1fa9b2" stroke-width="1" stroke-linejoin="bevel" clip-path="url(#c282)"/>
<text x="1745" y="81.0" font-size="13.5" fill="#f2e52e" text-anchor="end">14 dBm</text>
<text x="1745" y="103.6" font-size="13.5" fill="#f2e52e" text-anchor="end">4 dBm</text>
<text x="1745" y="126.2" font-size="13.5" fill="#f2e52e" text-anchor="end">-6 dBm</text>
<text x="1745" y="148.8" font-size="13.5" fill="#f2e52e" text-anchor="end">-16 dBm</text>
<text x="1745" y="171.4" font-size="13.5" fill="#f2e52e" text-anchor="end">-26 dBm</text>
<text x="1745" y="194.0" font-size="13.5" fill="#f2e52e" text-anchor="end">-36 dBm</text>
<text x="1745" y="216.6" font-size="13.5" fill="#f2e52e" text-anchor="end">-46 dBm</text>
<text x="1745" y="239.2" font-size="13.5" fill="#f2e52e" text-anchor="end">-56 dBm</text>
<text x="32" y="274.0" font-size="13.5" fill="#f2e52e" textLength="63" lengthAdjust="spacingAndGlyphs">95.00 MHz</text>
<text x="1724.5" y="274.0" font-size="13.5" fill="#f2e52e" text-anchor="end" textLength="77" lengthAdjust="spacingAndGlyphs">102.000 MHz</text>
<text x="1745" y="308.6" font-size="13.5" fill="#22c3cf" text-anchor="end">14 dBm</text>
<text x="1745" y="331.2" font-size="13.5" fill="#22c3cf" text-anchor="end">4 dBm</text>
<text x="1745" y="353.8" font-size="13.5" fill="#22c3cf" text-anchor="end">-6 dBm</text>
<text x="1745" y="376.4" font-size="13.5" fill="#22c3cf" text-anchor="end">-16 dBm</text>
<text x="1745" y="399.0" font-size="13.5" fill="#22c3cf" text-anchor="end">-26 dBm</text>
<text x="1745" y="421.6" font-size="13.5" fill="#22c3cf" text-anchor="end">-36 dBm</text>
<text x="1745" y="444.2" font-size="13.5" fill="#22c3cf" text-anchor="end">-46 dBm</text>
<text x="1745" y="466.8" font-size="13.5" fill="#22c3cf" text-anchor="end">-56 dBm</text>
<text x="32" y="501.6" font-size="13.5" fill="#22c3cf" textLength="63" lengthAdjust="spacingAndGlyphs">95.00 MHz</text>
<text x="1724.5" y="501.6" font-size="13.5" fill="#22c3cf" text-anchor="end" textLength="77" lengthAdjust="spacingAndGlyphs">102.000 MHz</text>
<path d="M6.5,54.4 H40 L28,66.9 V81.4 H6.5 Z" fill="#fff12a"/>
<path d="M8.3,54.4 H36 L27,64.9 H8.3 Z" fill="#2a2806"/>
<text x="10.5" y="62.599999999999994" font-size="12" fill="#fff12a" textLength="16.5" lengthAdjust="spacingAndGlyphs">C 1</text>
<text x="11" y="74.8" font-size="10" fill="#111">N</text>
<path d="M6.5,282 H40 L28,294.5 V309 H6.5 Z" fill="#25d2da"/>
<path d="M8.3,282 H36 L27,292.5 H8.3 Z" fill="#0a3336"/>
<text x="10.5" y="290.2" font-size="12" fill="#25d2da" textLength="16.5" lengthAdjust="spacingAndGlyphs">C 2</text>
<text x="11" y="302.4" font-size="10" fill="#111">N</text>
<rect x="3" y="29" width="60" height="25.4" fill="#323232"/>
<text x="16" y="47" font-size="16.3" fill="#ececec" textLength="113" lengthAdjust="spacingAndGlyphs">Spectrum View</text>
<rect x="3" y="280.2" width="60" height="1.8" fill="#8a8a8a"/>
<line x1="5" y1="54.4" x2="60" y2="54.4" stroke="#c8c8c8" stroke-width="1" stroke-dasharray="7 3"/>
<path d="M93,54.4 H117 L105,80.4 Z" fill="#ff2229"/>
<text x="105" y="67.9" font-size="11.5" fill="#fff" text-anchor="middle">R</text>
<text x="108" y="83.9" font-size="13.5" fill="#ff2a30" textLength="71" lengthAdjust="spacingAndGlyphs">95.405 MHz</text>
<text x="108" y="97.9" font-size="13.5" fill="#ff2a30" textLength="61" lengthAdjust="spacingAndGlyphs">-.305 dBm</text>
<path d="M93,282 H117 L105,308 Z" fill="#ff2229"/>
<text x="105" y="295.5" font-size="11.5" fill="#fff" text-anchor="middle">R</text>
<text x="108" y="311.5" font-size="13.5" fill="#ff2a30" textLength="71" lengthAdjust="spacingAndGlyphs">95.405 MHz</text>
<text x="108" y="325.5" font-size="13.5" fill="#ff2a30" textLength="61" lengthAdjust="spacingAndGlyphs">-.247 dBm</text>
<g stroke="#c2c2c2" stroke-width="1" opacity="1" shape-rendering="crispEdges"><line x1="10.56" y1="538.50" x2="1749.0" y2="538.50" stroke-dasharray="1 33.960"/><line x1="10.56" y1="547.54" x2="1749.0" y2="547.54" stroke-dasharray="1 33.960"/><line x1="10.56" y1="556.58" x2="1749.0" y2="556.58" stroke-dasharray="1 33.960"/><line x1="10.56" y1="565.62" x2="1749.0" y2="565.62" stroke-dasharray="1 33.960"/><line x1="10.56" y1="574.66" x2="1749.0" y2="574.66" stroke-dasharray="1 33.960"/><line x1="10.56" y1="583.70" x2="1749.0" y2="583.70" stroke-dasharray="1 33.960"/><line x1="10.56" y1="592.74" x2="1749.0" y2="592.74" stroke-dasharray="1 33.960"/><line x1="10.56" y1="601.78" x2="1749.0" y2="601.78" stroke-dasharray="1 33.960"/><line x1="10.56" y1="610.82" x2="1749.0" y2="610.82" stroke-dasharray="1 33.960"/><line x1="10.56" y1="619.86" x2="1749.0" y2="619.86" stroke-dasharray="1 33.960"/><line x1="150.90" y1="538.50" x2="150.90" y2="615.50" stroke-dasharray="1 0.812"/><line x1="325.70" y1="538.50" x2="325.70" y2="615.50" stroke-dasharray="1 0.812"/><line x1="500.50" y1="538.50" x2="500.50" y2="615.50" stroke-dasharray="1 0.812"/><line x1="675.30" y1="538.50" x2="675.30" y2="615.50" stroke-dasharray="1 0.812"/><line x1="850.10" y1="538.50" x2="850.10" y2="615.50" stroke-dasharray="1 0.812"/><line x1="1024.90" y1="538.50" x2="1024.90" y2="615.50" stroke-dasharray="1 0.812"/><line x1="1199.70" y1="538.50" x2="1199.70" y2="615.50" stroke-dasharray="1 0.812"/><line x1="1374.50" y1="538.50" x2="1374.50" y2="615.50" stroke-dasharray="1 0.812"/><line x1="1549.30" y1="538.50" x2="1549.30" y2="615.50" stroke-dasharray="1 0.812"/><line x1="1724.10" y1="538.50" x2="1724.10" y2="615.50" stroke-dasharray="1 0.812"/></g>
<rect x="3" y="582" width="147" height="2.2" fill="#3fd0d8"/>
<rect x="3" y="597" width="147" height="2.2" fill="#fff12a"/>
<rect x="150" y="549.6" width="1601" height="38.2" fill="#4fd3d9"/>
<rect x="150" y="549.6" width="1601" height="3.6" fill="#45c4cb"/>
<rect x="150" y="582.6" width="1601" height="5.2" fill="#42bec6"/>
<rect x="150" y="587.7" width="1601" height="15.6" fill="#fef557"/>
<rect x="150" y="597" width="1601" height="6.3" fill="#f3e535"/>
<g opacity="0.5">
<g stroke="#e8e8e8" stroke-width="1" opacity="1" shape-rendering="crispEdges"><line x1="150.40" y1="538.50" x2="1749.0" y2="538.50" stroke-dasharray="1 33.960"/><line x1="150.40" y1="547.54" x2="1749.0" y2="547.54" stroke-dasharray="1 33.960"/><line x1="150.40" y1="556.58" x2="1749.0" y2="556.58" stroke-dasharray="1 33.960"/><line x1="150.40" y1="565.62" x2="1749.0" y2="565.62" stroke-dasharray="1 33.960"/><line x1="150.40" y1="574.66" x2="1749.0" y2="574.66" stroke-dasharray="1 33.960"/><line x1="150.40" y1="583.70" x2="1749.0" y2="583.70" stroke-dasharray="1 33.960"/><line x1="150.40" y1="592.74" x2="1749.0" y2="592.74" stroke-dasharray="1 33.960"/><line x1="150.40" y1="601.78" x2="1749.0" y2="601.78" stroke-dasharray="1 33.960"/><line x1="150.40" y1="610.82" x2="1749.0" y2="610.82" stroke-dasharray="1 33.960"/><line x1="150.40" y1="619.86" x2="1749.0" y2="619.86" stroke-dasharray="1 33.960"/><line x1="150.90" y1="538.50" x2="150.90" y2="615.50" stroke-dasharray="1 0.812"/><line x1="325.70" y1="538.50" x2="325.70" y2="615.50" stroke-dasharray="1 0.812"/><line x1="500.50" y1="538.50" x2="500.50" y2="615.50" stroke-dasharray="1 0.812"/><line x1="675.30" y1="538.50" x2="675.30" y2="615.50" stroke-dasharray="1 0.812"/><line x1="850.10" y1="538.50" x2="850.10" y2="615.50" stroke-dasharray="1 0.812"/><line x1="1024.90" y1="538.50" x2="1024.90" y2="615.50" stroke-dasharray="1 0.812"/><line x1="1199.70" y1="538.50" x2="1199.70" y2="615.50" stroke-dasharray="1 0.812"/><line x1="1374.50" y1="538.50" x2="1374.50" y2="615.50" stroke-dasharray="1 0.812"/><line x1="1549.30" y1="538.50" x2="1549.30" y2="615.50" stroke-dasharray="1 0.812"/><line x1="1724.10" y1="538.50" x2="1724.10" y2="615.50" stroke-dasharray="1 0.812"/></g>
</g>
<line x1="28" y1="584.4" x2="1728" y2="584.4" stroke="#d0d0d0" stroke-width="1.2" stroke-dasharray="5 5"/>
<path d="M6.5,576.5 H20 L26.5,583.5 L20,590.5 H6.5 Z" fill="#2c4c4e" stroke="#35c5cc" stroke-width="1"/>
<text x="9.5" y="587.2" font-size="10" fill="#3fd6de" textLength="13.5" lengthAdjust="spacingAndGlyphs">C 2</text>
<path d="M140,538 H160 L150,547.5 Z" fill="#f58a1f"/>
<path d="M141.2,549.2 H159 V567.8 H153 L150,573 L147,567.8 H141.2 Z" fill="#000" stroke="#f58a1f" stroke-width="2.2"/>
<text x="150.2" y="564.2" font-size="14" fill="#f58a1f" text-anchor="middle" font-weight="bold">T</text>
<line x1="150.5" y1="576" x2="150.5" y2="614" stroke="#cfcfcf" stroke-width="1" stroke-dasharray="6 2 1 2"/>
<text x="150.0" y="622.6" font-size="13.5" fill="#c9c9c9" text-anchor="middle">0 s</text>
<text x="324.8" y="622.6" font-size="13.5" fill="#c9c9c9" text-anchor="middle">40 ms</text>
<text x="499.6" y="622.6" font-size="13.5" fill="#c9c9c9" text-anchor="middle">80 ms</text>
<text x="674.4" y="622.6" font-size="13.5" fill="#c9c9c9" text-anchor="middle">120 ms</text>
<text x="849.2" y="622.6" font-size="13.5" fill="#c9c9c9" text-anchor="middle">160 ms</text>
<text x="1024.0" y="622.6" font-size="13.5" fill="#c9c9c9" text-anchor="middle">200 ms</text>
<text x="1198.8" y="622.6" font-size="13.5" fill="#c9c9c9" text-anchor="middle">240 ms</text>
<text x="1373.6" y="622.6" font-size="13.5" fill="#c9c9c9" text-anchor="middle">280 ms</text>
<text x="1548.4" y="622.6" font-size="13.5" fill="#c9c9c9" text-anchor="middle">320 ms</text>
<text x="1745" y="622.6" font-size="13.5" fill="#c9c9c9" text-anchor="end">360 ms</text>
<rect x="1406" y="538.4" width="43.8" height="90.2" rx="1.5" fill="#a6a6a6"/>
<rect x="1411" y="543.4" width="33.8" height="80.2" rx="2" fill="#000"/>
<rect x="1411" y="549.6" width="33.8" height="38" fill="#1fc6cd"/>
<rect x="1411" y="587.6" width="33.8" height="15.8" fill="#fff12a"/>
<rect x="1427.2" y="610" width="2" height="18.6" fill="#2fd3dc"/>
<path d="M1710.5,546 H1744 V579 Z" fill="#4a4a4a" stroke="#1e9fd8" stroke-width="1.6" stroke-linejoin="round"/>
<circle cx="1737" cy="552" r="3.3" fill="none" stroke="#1e9fd8" stroke-width="1.6"/>
<line x1="1734.6" y1="554.4" x2="1727.5" y2="561.5" stroke="#1e9fd8" stroke-width="2.2"/>
<text x="1746" y="605.3" font-size="13.5" fill="#2fc8d2" text-anchor="end">-2 V</text>
<path d="M1730,583 L1740.5,575.5 L1742,581 H1751 V585.6 H1742 L1741.5,592.5 Z" fill="#fff34f" stroke="#6a6210" stroke-width="0.9"/>
<rect x="3" y="652.8" width="1748" height="1.3" fill="#484a49"/>
<text x="16" y="645" font-size="13" fill="#161616" textLength="136" lengthAdjust="spacingAndGlyphs">Horizontal Zoom Scale</text>
<rect x="161.8" y="632.4" width="91.6" height="17.8" rx="3" fill="#d2d2d2" stroke="#e6e6e6" stroke-width="0.8"/>
<text x="210" y="645.2" font-size="13" fill="#111" text-anchor="middle" textLength="67" lengthAdjust="spacingAndGlyphs">1.00 ms/div</text>
<rect x="269" y="633" width="36.6" height="17.4" rx="3" fill="#343434" stroke="#4a4a4a" stroke-width="0.8"/>
<rect x="281.3" y="640.7" width="12" height="1.8" fill="#8c8c8c"/>
<rect x="286.40000000000003" y="635.6" width="1.8" height="12" fill="#8c8c8c"/>
<rect x="324" y="633" width="36.6" height="17.4" rx="3" fill="#343434" stroke="#4a4a4a" stroke-width="0.8"/>
<rect x="336.3" y="640.7" width="12" height="1.8" fill="#8c8c8c"/>
<text x="372" y="645" font-size="13" fill="#161616" textLength="85" lengthAdjust="spacingAndGlyphs">(40.00x zoom)</text>
<text x="478" y="645" font-size="13" fill="#161616" textLength="84" lengthAdjust="spacingAndGlyphs">Vertical Zoom</text>
<rect x="573" y="633" width="36.6" height="17.4" rx="3" fill="#343434" stroke="#4a4a4a" stroke-width="0.8"/>
<rect x="585.3" y="640.7" width="12" height="1.8" fill="#8c8c8c"/>
<rect x="590.4" y="635.6" width="1.8" height="12" fill="#8c8c8c"/>
<rect x="628" y="633" width="36.6" height="17.4" rx="3" fill="#343434" stroke="#4a4a4a" stroke-width="0.8"/>
<rect x="640.3" y="640.7" width="12" height="1.8" fill="#8c8c8c"/>
<text x="677" y="645" font-size="13" fill="#161616" textLength="78" lengthAdjust="spacingAndGlyphs">(1.00x zoom)</text>
<path d="M1731.5,635.5 L1742.5,646.5 M1742.5,635.5 L1731.5,646.5" stroke="#e2e2e2" stroke-width="1.8" fill="none"/>
<g stroke="#bcbcbc" stroke-width="1" opacity="1" shape-rendering="crispEdges"><line x1="11.58" y1="663.60" x2="1749.0" y2="663.60" stroke-dasharray="1 33.960"/><line x1="11.58" y1="680.40" x2="1749.0" y2="680.40" stroke-dasharray="1 33.960"/><line x1="11.58" y1="697.20" x2="1749.0" y2="697.20" stroke-dasharray="1 33.960"/><line x1="11.58" y1="714.00" x2="1749.0" y2="714.00" stroke-dasharray="1 33.960"/><line x1="11.58" y1="730.80" x2="1749.0" y2="730.80" stroke-dasharray="1 33.960"/><line x1="11.58" y1="747.60" x2="1749.0" y2="747.60" stroke-dasharray="1 33.960"/><line x1="11.58" y1="764.40" x2="1749.0" y2="764.40" stroke-dasharray="1 33.960"/><line x1="11.58" y1="781.20" x2="1749.0" y2="781.20" stroke-dasharray="1 33.960"/><line x1="11.58" y1="798.00" x2="1749.0" y2="798.00" stroke-dasharray="1 33.960"/><line x1="11.58" y1="814.80" x2="1749.0" y2="814.80" stroke-dasharray="1 33.960"/><line x1="3.50" y1="656.20" x2="3.50" y2="820.50" stroke-dasharray="1 2.360"/><line x1="82.00" y1="656.20" x2="82.00" y2="820.50" stroke-dasharray="1 2.360"/><line x1="256.80" y1="656.20" x2="256.80" y2="820.50" stroke-dasharray="1 2.360"/><line x1="431.60" y1="656.20" x2="431.60" y2="820.50" stroke-dasharray="1 2.360"/><line x1="606.40" y1="656.20" x2="606.40" y2="820.50" stroke-dasharray="1 2.360"/><line x1="781.20" y1="656.20" x2="781.20" y2="820.50" stroke-dasharray="1 2.360"/><line x1="956.00" y1="656.20" x2="956.00" y2="820.50" stroke-dasharray="1 2.360"/><line x1="1130.80" y1="656.20" x2="1130.80" y2="820.50" stroke-dasharray="1 2.360"/><line x1="1305.60" y1="656.20" x2="1305.60" y2="820.50" stroke-dasharray="1 2.360"/><line x1="1480.40" y1="656.20" x2="1480.40" y2="820.50" stroke-dasharray="1 2.360"/><line x1="1655.20" y1="656.20" x2="1655.20" y2="820.50" stroke-dasharray="1 2.360"/></g>
<g stroke="#bcbcbc" stroke-width="1" opacity="1" shape-rendering="crispEdges"><line x1="11.58" y1="823.80" x2="1749.0" y2="823.80" stroke-dasharray="1 33.960"/><line x1="11.58" y1="840.65" x2="1749.0" y2="840.65" stroke-dasharray="1 33.960"/><line x1="11.58" y1="857.50" x2="1749.0" y2="857.50" stroke-dasharray="1 33.960"/><line x1="11.58" y1="874.35" x2="1749.0" y2="874.35" stroke-dasharray="1 33.960"/><line x1="11.58" y1="891.20" x2="1749.0" y2="891.20" stroke-dasharray="1 33.960"/><line x1="11.58" y1="908.05" x2="1749.0" y2="908.05" stroke-dasharray="1 33.960"/><line x1="11.58" y1="924.90" x2="1749.0" y2="924.90" stroke-dasharray="1 33.960"/><line x1="11.58" y1="941.75" x2="1749.0" y2="941.75" stroke-dasharray="1 33.960"/><line x1="11.58" y1="958.60" x2="1749.0" y2="958.60" stroke-dasharray="1 33.960"/><line x1="11.58" y1="975.45" x2="1749.0" y2="975.45" stroke-dasharray="1 33.960"/><line x1="3.50" y1="827.20" x2="3.50" y2="976.50" stroke-dasharray="1 2.370"/><line x1="82.00" y1="827.20" x2="82.00" y2="976.50" stroke-dasharray="1 2.370"/><line x1="256.80" y1="827.20" x2="256.80" y2="976.50" stroke-dasharray="1 2.370"/><line x1="431.60" y1="827.20" x2="431.60" y2="976.50" stroke-dasharray="1 2.370"/><line x1="606.40" y1="827.20" x2="606.40" y2="976.50" stroke-dasharray="1 2.370"/><line x1="781.20" y1="827.20" x2="781.20" y2="976.50" stroke-dasharray="1 2.370"/><line x1="956.00" y1="827.20" x2="956.00" y2="976.50" stroke-dasharray="1 2.370"/><line x1="1130.80" y1="827.20" x2="1130.80" y2="976.50" stroke-dasharray="1 2.370"/><line x1="1305.60" y1="827.20" x2="1305.60" y2="976.50" stroke-dasharray="1 2.370"/><line x1="1480.40" y1="827.20" x2="1480.40" y2="976.50" stroke-dasharray="1 2.370"/><line x1="1655.20" y1="827.20" x2="1655.20" y2="976.50" stroke-dasharray="1 2.370"/></g>
<rect x="3" y="821" width="1748" height="1.8" fill="#7c7c7c"/>
<rect x="3" y="710.0" width="1133" height="52.60000000000002" fill="#fff12a"/><path d="M3,710.5v-8.2h2v8.2zM3,762.1v10.7h2v-10.7zM6,710.5v-6.2h1v6.2zM6,762.1v5.0h1v-5.0zM8,710.5v-9.2h2v9.2zM8,762.1v8.7h2v-8.7zM11,710.5v-9.2h1v9.2zM11,762.1v10.7h1v-10.7zM13,710.5v-9.2h2v9.2zM13,762.1v10.7h2v-10.7zM16,710.5v-6.2h2v6.2zM16,762.1v8.7h2v-8.7zM19,710.5v-9.2h1v9.2zM19,762.1v10.7h1v-10.7zM21,710.5v-7.2h2v7.2zM21,762.1v8.7h2v-8.7zM24,710.5v-9.2h1v9.2zM24,762.1v10.7h1v-10.7zM26,710.5v-9.2h1v9.2zM26,762.1v10.7h1v-10.7zM28,710.5v-9.2h2v9.2zM28,762.1v10.7h2v-10.7zM31,710.5v-7.2h2v7.2zM31,762.1v10.7h2v-10.7zM34,710.5v-6.2h2v6.2zM34,762.1v6.1h2v-6.1zM37,710.5v-4.7h2v4.7zM37,762.1v10.7h2v-10.7zM40,710.5v-8.2h1v8.2zM40,762.1v10.7h1v-10.7zM42,710.5v-7.2h2v7.2zM42,762.1v7.7h2v-7.7zM45,710.5v-7.2h1v7.2zM45,762.1v10.7h1v-10.7zM47,710.5v-8.2h2v8.2zM47,762.1v8.7h2v-8.7zM50,710.5v-6.2h1v6.2zM50,762.1v9.7h1v-9.7zM52,710.5v-9.2h2v9.2zM52,762.1v9.7h2v-9.7zM55,710.5v-6.2h1v6.2zM55,762.1v6.1h1v-6.1zM58,710.5v-9.2h2v9.2zM58,762.1v9.7h2v-9.7zM61,710.5v-9.2h1v9.2zM61,762.1v9.7h1v-9.7zM63,710.5v-7.2h2v7.2zM63,762.1v6.1h2v-6.1zM66,710.5v-7.2h2v7.2zM66,762.1v10.7h2v-10.7zM69,710.5v-8.2h1v8.2zM69,762.1v7.7h1v-7.7zM71,710.5v-7.2h2v7.2zM71,762.1v7.7h2v-7.7zM75,710.5v-7.2h1v7.2zM75,762.1v9.7h1v-9.7zM77,710.5v-7.2h1v7.2zM77,762.1v9.7h1v-9.7zM79,710.5v-8.2h1v8.2zM79,762.1v10.7h1v-10.7zM81,710.5v-8.2h2v8.2zM81,762.1v8.7h2v-8.7zM84,710.5v-8.2h1v8.2zM84,762.1v8.7h1v-8.7zM86,710.5v-9.2h1v9.2zM86,762.1v10.7h1v-10.7zM88,710.5v-9.2h1v9.2zM88,762.1v9.7h1v-9.7zM90,710.5v-3.6h2v3.6zM90,762.1v8.7h2v-8.7zM93,710.5v-8.2h1v8.2zM93,762.1v7.7h1v-7.7zM95,710.5v-9.2h2v9.2zM95,762.1v8.7h2v-8.7zM98,710.5v-7.2h1v7.2zM98,762.1v4.5h1v-4.5zM100,710.5v-7.2h1v7.2zM100,762.1v7.7h1v-7.7zM102,710.5v-9.2h2v9.2zM102,762.1v9.7h2v-9.7zM105,710.5v-8.2h1v8.2zM105,762.1v10.7h1v-10.7zM107,710.5v-7.2h2v7.2zM107,762.1v6.1h2v-6.1zM110,710.5v-8.2h2v8.2zM110,762.1v9.7h2v-9.7zM113,710.5v-9.2h1v9.2zM113,762.1v10.7h1v-10.7zM115,710.5v-6.2h2v6.2zM115,762.1v10.7h2v-10.7zM118,710.5v-8.2h2v8.2zM118,762.1v10.7h2v-10.7zM121,710.5v-9.2h2v9.2zM121,762.1v5.6h2v-5.6zM124,710.5v-8.2h2v8.2zM124,762.1v8.7h2v-8.7zM127,710.5v-8.2h2v8.2zM127,762.1v10.7h2v-10.7zM130,710.5v-8.2h2v8.2zM130,762.1v10.7h2v-10.7zM133,710.5v-9.2h1v9.2zM133,762.1v7.7h1v-7.7zM135,710.5v-9.2h1v9.2zM135,762.1v9.7h1v-9.7zM137,710.5v-8.2h1v8.2zM137,762.1v9.7h1v-9.7zM139,710.5v-9.2h2v9.2zM139,762.1v10.7h2v-10.7zM142,710.5v-9.2h1v9.2zM142,762.1v10.7h1v-10.7zM144,710.5v-8.2h1v8.2zM144,762.1v10.7h1v-10.7zM146,710.5v-9.2h2v9.2zM146,762.1v9.7h2v-9.7zM149,710.5v-8.2h2v8.2zM149,762.1v6.1h2v-6.1zM152,710.5v-7.2h1v7.2zM152,762.1v9.7h1v-9.7zM154,710.5v-9.2h2v9.2zM154,762.1v9.7h2v-9.7zM157,710.5v-9.2h1v9.2zM157,762.1v5.6h1v-5.6zM159,710.5v-9.2h2v9.2zM159,762.1v6.1h2v-6.1zM162,710.5v-6.2h2v6.2zM162,762.1v10.7h2v-10.7zM165,710.5v-8.2h1v8.2zM165,762.1v10.7h1v-10.7zM167,710.5v-8.2h1v8.2zM167,762.1v10.7h1v-10.7zM169,710.5v-8.2h2v8.2zM169,762.1v10.7h2v-10.7zM172,710.5v-5.3h1v5.3zM172,762.1v9.7h1v-9.7zM174,710.5v-7.2h2v7.2zM174,762.1v10.7h2v-10.7zM177,710.5v-8.2h2v8.2zM177,762.1v8.7h2v-8.7zM180,710.5v-9.2h2v9.2zM180,762.1v9.7h2v-9.7zM183,710.5v-9.2h2v9.2zM183,762.1v9.7h2v-9.7zM186,710.5v-8.2h2v8.2zM186,762.1v8.7h2v-8.7zM189,710.5v-7.2h2v7.2zM189,762.1v8.7h2v-8.7zM192,710.5v-7.2h1v7.2zM192,762.1v9.7h1v-9.7zM194,710.5v-6.2h1v6.2zM194,762.1v7.7h1v-7.7zM196,710.5v-8.2h2v8.2zM196,762.1v9.7h2v-9.7zM199,710.5v-9.2h2v9.2zM199,762.1v9.7h2v-9.7zM202,710.5v-8.2h1v8.2zM202,762.1v8.7h1v-8.7zM204,710.5v-9.2h2v9.2zM204,762.1v8.7h2v-8.7zM207,710.5v-8.2h1v8.2zM207,762.1v9.7h1v-9.7zM209,710.5v-4.7h2v4.7zM209,762.1v7.7h2v-7.7zM212,710.5v-9.2h2v9.2zM212,762.1v8.7h2v-8.7zM215,710.5v-8.2h1v8.2zM215,762.1v10.7h1v-10.7zM217,710.5v-7.2h2v7.2zM217,762.1v10.7h2v-10.7zM220,710.5v-8.2h1v8.2zM220,762.1v9.7h1v-9.7zM222,710.5v-8.2h2v8.2zM222,762.1v8.7h2v-8.7zM225,710.5v-6.2h2v6.2zM225,762.1v9.7h2v-9.7zM228,710.5v-7.2h2v7.2zM228,762.1v8.7h2v-8.7zM231,710.5v-9.2h2v9.2zM231,762.1v7.7h2v-7.7zM234,710.5v-7.2h2v7.2zM234,762.1v9.7h2v-9.7zM237,710.5v-7.2h2v7.2zM237,762.1v6.1h2v-6.1zM240,710.5v-8.2h2v8.2zM240,762.1v9.7h2v-9.7zM243,710.5v-8.2h1v8.2zM243,762.1v9.7h1v-9.7zM245,710.5v-8.2h2v8.2zM245,762.1v8.7h2v-8.7zM248,710.5v-8.2h2v8.2zM248,762.1v9.7h2v-9.7zM251,710.5v-8.2h1v8.2zM251,762.1v10.7h1v-10.7zM253,710.5v-7.2h2v7.2zM253,762.1v7.7h2v-7.7zM256,710.5v-7.2h1v7.2zM256,762.1v5.0h1v-5.0zM258,710.5v-8.2h2v8.2zM258,762.1v7.7h2v-7.7zM261,710.5v-9.2h1v9.2zM261,762.1v10.7h1v-10.7zM263,710.5v-9.2h2v9.2zM263,762.1v9.7h2v-9.7zM266,710.5v-7.2h2v7.2zM266,762.1v7.7h2v-7.7zM269,710.5v-7.2h1v7.2zM269,762.1v10.7h1v-10.7zM271,710.5v-7.2h1v7.2zM271,762.1v9.7h1v-9.7zM273,710.5v-7.2h2v7.2zM273,762.1v10.7h2v-10.7zM276,710.5v-9.2h1v9.2zM276,762.1v9.7h1v-9.7zM278,710.5v-8.2h2v8.2zM278,762.1v8.7h2v-8.7zM281,710.5v-9.2h2v9.2zM281,762.1v10.7h2v-10.7zM284,710.5v-7.2h1v7.2zM284,762.1v8.7h1v-8.7zM286,710.5v-7.2h1v7.2zM286,762.1v8.7h1v-8.7zM288,710.5v-9.2h2v9.2zM288,762.1v8.7h2v-8.7zM291,710.5v-9.2h1v9.2zM291,762.1v8.7h1v-8.7zM293,710.5v-8.2h1v8.2zM293,762.1v9.7h1v-9.7zM295,710.5v-8.2h2v8.2zM295,762.1v7.7h2v-7.7zM298,710.5v-9.2h2v9.2zM298,762.1v10.7h2v-10.7zM301,710.5v-9.2h2v9.2zM301,762.1v9.7h2v-9.7zM304,710.5v-5.3h2v5.3zM304,762.1v10.7h2v-10.7zM307,710.5v-5.3h1v5.3zM307,762.1v7.7h1v-7.7zM309,710.5v-9.2h1v9.2zM309,762.1v8.7h1v-8.7zM311,710.5v-5.3h1v5.3zM311,762.1v10.7h1v-10.7zM313,710.5v-9.2h1v9.2zM313,762.1v10.7h1v-10.7zM315,710.5v-9.2h1v9.2zM315,762.1v9.7h1v-9.7zM317,710.5v-7.2h1v7.2zM317,762.1v10.7h1v-10.7zM319,710.5v-4.7h2v4.7zM319,762.1v9.7h2v-9.7zM322,710.5v-7.2h1v7.2zM322,762.1v8.7h1v-8.7zM324,710.5v-8.2h1v8.2zM324,762.1v10.7h1v-10.7zM326,710.5v-7.2h1v7.2zM326,762.1v9.7h1v-9.7zM328,710.5v-8.2h2v8.2zM328,762.1v10.7h2v-10.7zM331,710.5v-9.2h2v9.2zM331,762.1v8.7h2v-8.7zM334,710.5v-7.2h1v7.2zM334,762.1v10.7h1v-10.7zM336,710.5v-9.2h2v9.2zM336,762.1v8.7h2v-8.7zM339,710.5v-8.2h1v8.2zM339,762.1v9.7h1v-9.7zM341,710.5v-8.2h2v8.2zM341,762.1v7.7h2v-7.7zM344,710.5v-8.2h1v8.2zM344,762.1v10.7h1v-10.7zM346,710.5v-6.2h1v6.2zM346,762.1v10.7h1v-10.7zM348,710.5v-8.2h1v8.2zM348,762.1v8.7h1v-8.7zM350,710.5v-9.2h1v9.2zM350,762.1v8.7h1v-8.7zM352,710.5v-5.3h2v5.3zM352,762.1v10.7h2v-10.7zM355,710.5v-9.2h1v9.2zM355,762.1v7.7h1v-7.7zM357,710.5v-8.2h1v8.2zM357,762.1v9.7h1v-9.7zM359,710.5v-8.2h2v8.2zM359,762.1v9.7h2v-9.7zM362,710.5v-6.2h2v6.2zM362,762.1v9.7h2v-9.7zM365,710.5v-9.2h1v9.2zM365,762.1v9.7h1v-9.7zM367,710.5v-6.2h1v6.2zM367,762.1v8.7h1v-8.7zM369,710.5v-9.2h1v9.2zM369,762.1v7.7h1v-7.7zM371,710.5v-9.2h1v9.2zM371,762.1v10.7h1v-10.7zM373,710.5v-9.2h2v9.2zM373,762.1v10.7h2v-10.7zM376,710.5v-9.2h1v9.2zM376,762.1v8.7h1v-8.7zM378,710.5v-9.2h2v9.2zM378,762.1v8.7h2v-8.7zM381,710.5v-9.2h1v9.2zM381,762.1v9.7h1v-9.7zM384,710.5v-8.2h1v8.2zM384,762.1v9.7h1v-9.7zM386,710.5v-7.2h1v7.2zM386,762.1v9.7h1v-9.7zM388,710.5v-9.2h1v9.2zM388,762.1v9.7h1v-9.7zM390,710.5v-9.2h2v9.2zM390,762.1v10.7h2v-10.7zM393,710.5v-7.2h2v7.2zM393,762.1v10.7h2v-10.7zM396,710.5v-6.2h1v6.2zM396,762.1v9.7h1v-9.7zM398,710.5v-9.2h1v9.2zM398,762.1v8.7h1v-8.7zM400,710.5v-7.2h2v7.2zM400,762.1v5.0h2v-5.0zM403,710.5v-7.2h1v7.2zM403,762.1v9.7h1v-9.7zM405,710.5v-9.2h2v9.2zM405,762.1v7.7h2v-7.7zM408,710.5v-7.2h2v7.2zM408,762.1v8.7h2v-8.7zM411,710.5v-7.2h2v7.2zM411,762.1v6.1h2v-6.1zM415,710.5v-6.2h2v6.2zM415,762.1v10.7h2v-10.7zM418,710.5v-9.2h2v9.2zM418,762.1v8.7h2v-8.7zM421,710.5v-7.2h2v7.2zM421,762.1v10.7h2v-10.7zM424,710.5v-9.2h2v9.2zM424,762.1v6.1h2v-6.1zM427,710.5v-8.2h1v8.2zM427,762.1v7.7h1v-7.7zM430,710.5v-9.2h2v9.2zM430,762.1v10.7h2v-10.7zM433,710.5v-8.2h1v8.2zM433,762.1v10.7h1v-10.7zM435,710.5v-8.2h2v8.2zM435,762.1v9.7h2v-9.7zM438,710.5v-9.2h2v9.2zM438,762.1v7.7h2v-7.7zM441,710.5v-9.2h1v9.2zM441,762.1v9.7h1v-9.7zM443,710.5v-8.2h2v8.2zM443,762.1v10.7h2v-10.7zM446,710.5v-7.2h2v7.2zM446,762.1v9.7h2v-9.7zM449,710.5v-8.2h2v8.2zM449,762.1v10.7h2v-10.7zM452,710.5v-9.2h1v9.2zM452,762.1v10.7h1v-10.7zM454,710.5v-9.2h1v9.2zM454,762.1v8.7h1v-8.7zM456,710.5v-9.2h2v9.2zM456,762.1v8.7h2v-8.7zM459,710.5v-8.2h1v8.2zM459,762.1v8.7h1v-8.7zM461,710.5v-8.2h2v8.2zM461,762.1v10.7h2v-10.7zM464,710.5v-4.2h2v4.2zM464,762.1v8.7h2v-8.7zM467,710.5v-6.2h2v6.2zM467,762.1v8.7h2v-8.7zM470,710.5v-7.2h1v7.2zM470,762.1v9.7h1v-9.7zM472,710.5v-9.2h1v9.2zM472,762.1v10.7h1v-10.7zM474,710.5v-8.2h1v8.2zM474,762.1v8.7h1v-8.7zM476,710.5v-8.2h1v8.2zM476,762.1v9.7h1v-9.7zM478,710.5v-7.2h2v7.2zM478,762.1v10.7h2v-10.7zM481,710.5v-8.2h2v8.2zM481,762.1v8.7h2v-8.7zM484,710.5v-7.2h1v7.2zM484,762.1v9.7h1v-9.7zM486,710.5v-6.2h2v6.2zM486,762.1v6.1h2v-6.1zM489,710.5v-6.2h2v6.2zM489,762.1v10.7h2v-10.7zM492,710.5v-8.2h2v8.2zM492,762.1v10.7h2v-10.7zM495,710.5v-9.2h2v9.2zM495,762.1v7.7h2v-7.7zM498,710.5v-8.2h1v8.2zM498,762.1v10.7h1v-10.7zM500,710.5v-7.2h1v7.2zM500,762.1v9.7h1v-9.7zM502,710.5v-8.2h2v8.2zM502,762.1v8.7h2v-8.7zM506,710.5v-8.2h1v8.2zM506,762.1v10.7h1v-10.7zM508,710.5v-8.2h2v8.2zM508,762.1v9.7h2v-9.7zM511,710.5v-9.2h1v9.2zM511,762.1v7.7h1v-7.7zM513,710.5v-9.2h2v9.2zM513,762.1v9.7h2v-9.7zM516,710.5v-8.2h2v8.2zM516,762.1v10.7h2v-10.7zM519,710.5v-8.2h1v8.2zM519,762.1v10.7h1v-10.7zM521,710.5v-7.2h2v7.2zM521,762.1v9.7h2v-9.7zM524,710.5v-7.2h2v7.2zM524,762.1v10.7h2v-10.7zM527,710.5v-8.2h1v8.2zM527,762.1v10.7h1v-10.7zM529,710.5v-9.2h2v9.2zM529,762.1v7.7h2v-7.7zM532,710.5v-7.2h1v7.2zM532,762.1v9.7h1v-9.7zM534,710.5v-5.3h1v5.3zM534,762.1v8.7h1v-8.7zM536,710.5v-8.2h2v8.2zM536,762.1v10.7h2v-10.7zM539,710.5v-9.2h1v9.2zM539,762.1v10.7h1v-10.7zM541,710.5v-9.2h2v9.2zM541,762.1v9.7h2v-9.7zM544,710.5v-8.2h2v8.2zM544,762.1v8.7h2v-8.7zM547,710.5v-9.2h1v9.2zM547,762.1v8.7h1v-8.7zM549,710.5v-6.2h1v6.2zM549,762.1v8.7h1v-8.7zM551,710.5v-9.2h1v9.2zM551,762.1v10.7h1v-10.7zM553,710.5v-7.2h2v7.2zM553,762.1v8.7h2v-8.7zM556,710.5v-5.3h2v5.3zM556,762.1v8.7h2v-8.7zM559,710.5v-9.2h2v9.2zM559,762.1v9.7h2v-9.7zM562,710.5v-5.3h1v5.3zM562,762.1v10.7h1v-10.7zM564,710.5v-8.2h2v8.2zM564,762.1v10.7h2v-10.7zM568,710.5v-9.2h1v9.2zM568,762.1v7.7h1v-7.7zM571,710.5v-7.2h1v7.2zM571,762.1v10.7h1v-10.7zM573,710.5v-7.2h1v7.2zM573,762.1v10.7h1v-10.7zM575,710.5v-9.2h1v9.2zM575,762.1v5.6h1v-5.6zM577,710.5v-9.2h1v9.2zM577,762.1v9.7h1v-9.7zM579,710.5v-9.2h2v9.2zM579,762.1v8.7h2v-8.7zM582,710.5v-8.2h1v8.2zM582,762.1v9.7h1v-9.7zM584,710.5v-4.2h1v4.2zM584,762.1v9.7h1v-9.7zM586,710.5v-6.2h1v6.2zM586,762.1v9.7h1v-9.7zM588,710.5v-5.3h1v5.3zM588,762.1v8.7h1v-8.7zM590,710.5v-9.2h1v9.2zM590,762.1v10.7h1v-10.7zM592,710.5v-9.2h1v9.2zM592,762.1v9.7h1v-9.7zM594,710.5v-8.2h2v8.2zM594,762.1v9.7h2v-9.7zM597,710.5v-9.2h1v9.2zM597,762.1v10.7h1v-10.7zM599,710.5v-7.2h1v7.2zM599,762.1v8.7h1v-8.7zM601,710.5v-9.2h2v9.2zM601,762.1v9.7h2v-9.7zM604,710.5v-8.2h1v8.2zM604,762.1v9.7h1v-9.7zM606,710.5v-8.2h2v8.2zM606,762.1v10.7h2v-10.7zM609,710.5v-8.2h1v8.2zM609,762.1v9.7h1v-9.7zM611,710.5v-7.2h2v7.2zM611,762.1v8.7h2v-8.7zM614,710.5v-9.2h1v9.2zM614,762.1v10.7h1v-10.7zM616,710.5v-9.2h2v9.2zM616,762.1v10.7h2v-10.7zM619,710.5v-9.2h1v9.2zM619,762.1v9.7h1v-9.7zM621,710.5v-8.2h2v8.2zM621,762.1v9.7h2v-9.7zM624,710.5v-8.2h2v8.2zM624,762.1v10.7h2v-10.7zM627,710.5v-8.2h2v8.2zM627,762.1v8.7h2v-8.7zM630,710.5v-9.2h1v9.2zM630,762.1v10.7h1v-10.7zM632,710.5v-9.2h1v9.2zM632,762.1v8.7h1v-8.7zM634,710.5v-9.2h1v9.2zM634,762.1v10.7h1v-10.7zM636,710.5v-8.2h1v8.2zM636,762.1v9.7h1v-9.7zM638,710.5v-4.7h2v4.7zM638,762.1v9.7h2v-9.7zM641,710.5v-6.2h2v6.2zM641,762.1v8.7h2v-8.7zM644,710.5v-7.2h2v7.2zM644,762.1v9.7h2v-9.7zM647,710.5v-7.2h1v7.2zM647,762.1v9.7h1v-9.7zM649,710.5v-9.2h1v9.2zM649,762.1v10.7h1v-10.7zM651,710.5v-6.2h2v6.2zM651,762.1v7.7h2v-7.7zM654,710.5v-8.2h1v8.2zM654,762.1v9.7h1v-9.7zM656,710.5v-9.2h2v9.2zM656,762.1v8.7h2v-8.7zM659,710.5v-8.2h2v8.2zM659,762.1v8.7h2v-8.7zM662,710.5v-9.2h2v9.2zM662,762.1v9.7h2v-9.7zM665,710.5v-9.2h1v9.2zM665,762.1v10.7h1v-10.7zM668,710.5v-8.2h2v8.2zM668,762.1v9.7h2v-9.7zM671,710.5v-9.2h2v9.2zM671,762.1v10.7h2v-10.7zM674,710.5v-9.2h1v9.2zM674,762.1v10.7h1v-10.7zM676,710.5v-7.2h1v7.2zM676,762.1v10.7h1v-10.7zM678,710.5v-8.2h1v8.2zM678,762.1v8.7h1v-8.7zM680,710.5v-7.2h2v7.2zM680,762.1v10.7h2v-10.7zM683,710.5v-7.2h1v7.2zM683,762.1v8.7h1v-8.7zM685,710.5v-6.2h1v6.2zM685,762.1v8.7h1v-8.7zM688,710.5v-3.6h1v3.6zM688,762.1v10.7h1v-10.7zM690,710.5v-5.3h2v5.3zM690,762.1v8.7h2v-8.7zM693,710.5v-6.2h2v6.2zM693,762.1v9.7h2v-9.7zM696,710.5v-8.2h1v8.2zM696,762.1v7.7h1v-7.7zM698,710.5v-8.2h2v8.2zM698,762.1v8.7h2v-8.7zM701,710.5v-8.2h2v8.2zM701,762.1v7.7h2v-7.7zM704,710.5v-8.2h1v8.2zM704,762.1v8.7h1v-8.7zM706,710.5v-6.2h2v6.2zM706,762.1v10.7h2v-10.7zM709,710.5v-9.2h2v9.2zM709,762.1v10.7h2v-10.7zM712,710.5v-8.2h1v8.2zM712,762.1v8.7h1v-8.7zM714,710.5v-7.2h1v7.2zM714,762.1v9.7h1v-9.7zM717,710.5v-9.2h1v9.2zM717,762.1v7.7h1v-7.7zM719,710.5v-9.2h1v9.2zM719,762.1v8.7h1v-8.7zM721,710.5v-9.2h2v9.2zM721,762.1v9.7h2v-9.7zM724,710.5v-8.2h2v8.2zM724,762.1v10.7h2v-10.7zM727,710.5v-8.2h1v8.2zM727,762.1v10.7h1v-10.7zM729,710.5v-6.2h1v6.2zM729,762.1v10.7h1v-10.7zM731,710.5v-9.2h1v9.2zM731,762.1v7.7h1v-7.7zM733,710.5v-7.2h1v7.2zM733,762.1v7.7h1v-7.7zM735,710.5v-8.2h1v8.2zM735,762.1v9.7h1v-9.7zM738,710.5v-8.2h1v8.2zM738,762.1v5.6h1v-5.6zM740,710.5v-6.2h1v6.2zM740,762.1v8.7h1v-8.7zM742,710.5v-9.2h1v9.2zM742,762.1v5.6h1v-5.6zM744,710.5v-6.2h2v6.2zM744,762.1v9.7h2v-9.7zM747,710.5v-9.2h1v9.2zM747,762.1v9.7h1v-9.7zM749,710.5v-8.2h2v8.2zM749,762.1v10.7h2v-10.7zM752,710.5v-6.2h1v6.2zM752,762.1v10.7h1v-10.7zM754,710.5v-9.2h2v9.2zM754,762.1v5.0h2v-5.0zM757,710.5v-8.2h1v8.2zM757,762.1v8.7h1v-8.7zM759,710.5v-6.2h2v6.2zM759,762.1v10.7h2v-10.7zM762,710.5v-6.2h2v6.2zM762,762.1v10.7h2v-10.7zM765,710.5v-8.2h1v8.2zM765,762.1v5.0h1v-5.0zM767,710.5v-7.2h2v7.2zM767,762.1v5.0h2v-5.0zM770,710.5v-8.2h2v8.2zM770,762.1v9.7h2v-9.7zM773,710.5v-7.2h1v7.2zM773,762.1v9.7h1v-9.7zM775,710.5v-5.3h2v5.3zM775,762.1v10.7h2v-10.7zM778,710.5v-9.2h1v9.2zM778,762.1v9.7h1v-9.7zM780,710.5v-7.2h1v7.2zM780,762.1v10.7h1v-10.7zM782,710.5v-9.2h2v9.2zM782,762.1v9.7h2v-9.7zM785,710.5v-8.2h2v8.2zM785,762.1v7.7h2v-7.7zM788,710.5v-9.2h1v9.2zM788,762.1v10.7h1v-10.7zM790,710.5v-8.2h2v8.2zM790,762.1v10.7h2v-10.7zM793,710.5v-8.2h1v8.2zM793,762.1v9.7h1v-9.7zM795,710.5v-9.2h1v9.2zM795,762.1v10.7h1v-10.7zM797,710.5v-9.2h1v9.2zM797,762.1v10.7h1v-10.7zM799,710.5v-6.2h1v6.2zM799,762.1v9.7h1v-9.7zM801,710.5v-8.2h2v8.2zM801,762.1v10.7h2v-10.7zM804,710.5v-9.2h2v9.2zM804,762.1v9.7h2v-9.7zM807,710.5v-8.2h2v8.2zM807,762.1v7.7h2v-7.7zM810,710.5v-6.2h2v6.2zM810,762.1v9.7h2v-9.7zM813,710.5v-6.2h2v6.2zM813,762.1v10.7h2v-10.7zM816,710.5v-8.2h2v8.2zM816,762.1v9.7h2v-9.7zM819,710.5v-9.2h2v9.2zM819,762.1v10.7h2v-10.7zM822,710.5v-6.2h2v6.2zM822,762.1v10.7h2v-10.7zM825,710.5v-9.2h2v9.2zM825,762.1v10.7h2v-10.7zM828,710.5v-9.2h1v9.2zM828,762.1v10.7h1v-10.7zM830,710.5v-9.2h2v9.2zM830,762.1v10.7h2v-10.7zM833,710.5v-7.2h1v7.2zM833,762.1v8.7h1v-8.7zM835,710.5v-8.2h2v8.2zM835,762.1v6.1h2v-6.1zM838,710.5v-8.2h2v8.2zM838,762.1v9.7h2v-9.7zM841,710.5v-7.2h1v7.2zM841,762.1v9.7h1v-9.7zM843,710.5v-8.2h1v8.2zM843,762.1v10.7h1v-10.7zM845,710.5v-8.2h2v8.2zM845,762.1v8.7h2v-8.7zM848,710.5v-9.2h1v9.2zM848,762.1v8.7h1v-8.7zM850,710.5v-5.3h1v5.3zM850,762.1v10.7h1v-10.7zM852,710.5v-8.2h1v8.2zM852,762.1v9.7h1v-9.7zM854,710.5v-9.2h2v9.2zM854,762.1v9.7h2v-9.7zM857,710.5v-8.2h2v8.2zM857,762.1v10.7h2v-10.7zM860,710.5v-9.2h2v9.2zM860,762.1v7.7h2v-7.7zM863,710.5v-6.2h2v6.2zM863,762.1v9.7h2v-9.7zM866,710.5v-6.2h1v6.2zM866,762.1v5.6h1v-5.6zM868,710.5v-7.2h2v7.2zM868,762.1v9.7h2v-9.7zM871,710.5v-3.6h2v3.6zM871,762.1v9.7h2v-9.7zM874,710.5v-8.2h2v8.2zM874,762.1v10.7h2v-10.7zM878,710.5v-9.2h1v9.2zM878,762.1v10.7h1v-10.7zM880,710.5v-8.2h2v8.2zM880,762.1v10.7h2v-10.7zM883,710.5v-5.3h2v5.3zM883,762.1v10.7h2v-10.7zM886,710.5v-7.2h2v7.2zM886,762.1v8.7h2v-8.7zM889,710.5v-8.2h2v8.2zM889,762.1v10.7h2v-10.7zM892,710.5v-7.2h1v7.2zM892,762.1v8.7h1v-8.7zM894,710.5v-6.2h2v6.2zM894,762.1v10.7h2v-10.7zM897,710.5v-8.2h2v8.2zM897,762.1v8.7h2v-8.7zM900,710.5v-9.2h2v9.2zM900,762.1v8.7h2v-8.7zM903,710.5v-8.2h2v8.2zM903,762.1v10.7h2v-10.7zM906,710.5v-9.2h1v9.2zM906,762.1v10.7h1v-10.7zM908,710.5v-7.2h2v7.2zM908,762.1v6.1h2v-6.1zM911,710.5v-9.2h2v9.2zM911,762.1v8.7h2v-8.7zM914,710.5v-6.2h2v6.2zM914,762.1v10.7h2v-10.7zM917,710.5v-9.2h2v9.2zM917,762.1v10.7h2v-10.7zM920,710.5v-7.2h2v7.2zM920,762.1v6.1h2v-6.1zM923,710.5v-9.2h2v9.2zM923,762.1v7.7h2v-7.7zM926,710.5v-7.2h2v7.2zM926,762.1v6.1h2v-6.1zM929,710.5v-5.3h1v5.3zM929,762.1v9.7h1v-9.7zM931,710.5v-9.2h1v9.2zM931,762.1v10.7h1v-10.7zM933,710.5v-7.2h2v7.2zM933,762.1v10.7h2v-10.7zM936,710.5v-7.2h1v7.2zM936,762.1v9.7h1v-9.7zM938,710.5v-7.2h1v7.2zM938,762.1v10.7h1v-10.7zM940,710.5v-7.2h2v7.2zM940,762.1v8.7h2v-8.7zM943,710.5v-7.2h2v7.2zM943,762.1v8.7h2v-8.7zM946,710.5v-8.2h1v8.2zM946,762.1v9.7h1v-9.7zM948,710.5v-9.2h2v9.2zM948,762.1v10.7h2v-10.7zM952,710.5v-7.2h2v7.2zM952,762.1v10.7h2v-10.7zM955,710.5v-8.2h2v8.2zM955,762.1v9.7h2v-9.7zM958,710.5v-8.2h2v8.2zM958,762.1v10.7h2v-10.7zM961,710.5v-8.2h1v8.2zM961,762.1v9.7h1v-9.7zM963,710.5v-7.2h1v7.2zM963,762.1v9.7h1v-9.7zM965,710.5v-8.2h1v8.2zM965,762.1v9.7h1v-9.7zM967,710.5v-9.2h2v9.2zM967,762.1v9.7h2v-9.7zM970,710.5v-9.2h1v9.2zM970,762.1v10.7h1v-10.7zM972,710.5v-9.2h1v9.2zM972,762.1v9.7h1v-9.7zM974,710.5v-8.2h2v8.2zM974,762.1v9.7h2v-9.7zM977,710.5v-6.2h2v6.2zM977,762.1v10.7h2v-10.7zM980,710.5v-6.2h2v6.2zM980,762.1v9.7h2v-9.7zM983,710.5v-7.2h2v7.2zM983,762.1v9.7h2v-9.7zM986,710.5v-9.2h2v9.2zM986,762.1v9.7h2v-9.7zM990,710.5v-7.2h1v7.2zM990,762.1v10.7h1v-10.7zM992,710.5v-4.7h2v4.7zM992,762.1v6.1h2v-6.1zM995,710.5v-4.7h1v4.7zM995,762.1v8.7h1v-8.7zM997,710.5v-5.3h1v5.3zM997,762.1v10.7h1v-10.7zM999,710.5v-6.2h2v6.2zM999,762.1v9.7h2v-9.7zM1002,710.5v-7.2h1v7.2zM1002,762.1v9.7h1v-9.7zM1004,710.5v-9.2h1v9.2zM1004,762.1v8.7h1v-8.7zM1006,710.5v-9.2h2v9.2zM1006,762.1v8.7h2v-8.7zM1009,710.5v-9.2h1v9.2zM1009,762.1v9.7h1v-9.7zM1011,710.5v-8.2h1v8.2zM1011,762.1v10.7h1v-10.7zM1013,710.5v-9.2h1v9.2zM1013,762.1v4.5h1v-4.5zM1015,710.5v-8.2h1v8.2zM1015,762.1v9.7h1v-9.7zM1017,710.5v-6.2h2v6.2zM1017,762.1v9.7h2v-9.7zM1020,710.5v-7.2h1v7.2zM1020,762.1v10.7h1v-10.7zM1022,710.5v-8.2h2v8.2zM1022,762.1v10.7h2v-10.7zM1025,710.5v-7.2h2v7.2zM1025,762.1v9.7h2v-9.7zM1028,710.5v-8.2h2v8.2zM1028,762.1v9.7h2v-9.7zM1031,710.5v-8.2h1v8.2zM1031,762.1v10.7h1v-10.7zM1033,710.5v-6.2h2v6.2zM1033,762.1v8.7h2v-8.7zM1036,710.5v-7.2h1v7.2zM1036,762.1v9.7h1v-9.7zM1038,710.5v-7.2h1v7.2zM1038,762.1v9.7h1v-9.7zM1040,710.5v-7.2h2v7.2zM1040,762.1v9.7h2v-9.7zM1043,710.5v-8.2h1v8.2zM1043,762.1v10.7h1v-10.7zM1045,710.5v-7.2h1v7.2zM1045,762.1v9.7h1v-9.7zM1047,710.5v-9.2h2v9.2zM1047,762.1v10.7h2v-10.7zM1050,710.5v-6.2h1v6.2zM1050,762.1v9.7h1v-9.7zM1052,710.5v-9.2h1v9.2zM1052,762.1v9.7h1v-9.7zM1054,710.5v-9.2h2v9.2zM1054,762.1v9.7h2v-9.7zM1057,710.5v-9.2h1v9.2zM1057,762.1v8.7h1v-8.7zM1059,710.5v-9.2h2v9.2zM1059,762.1v7.7h2v-7.7zM1062,710.5v-6.2h1v6.2zM1062,762.1v10.7h1v-10.7zM1064,710.5v-8.2h1v8.2zM1064,762.1v9.7h1v-9.7zM1066,710.5v-7.2h1v7.2zM1066,762.1v8.7h1v-8.7zM1068,710.5v-7.2h1v7.2zM1068,762.1v9.7h1v-9.7zM1070,710.5v-7.2h1v7.2zM1070,762.1v10.7h1v-10.7zM1072,710.5v-6.2h1v6.2zM1072,762.1v5.0h1v-5.0zM1074,710.5v-8.2h2v8.2zM1074,762.1v8.7h2v-8.7zM1077,710.5v-9.2h2v9.2zM1077,762.1v8.7h2v-8.7zM1080,710.5v-9.2h1v9.2zM1080,762.1v10.7h1v-10.7zM1082,710.5v-8.2h1v8.2zM1082,762.1v9.7h1v-9.7zM1084,710.5v-8.2h1v8.2zM1084,762.1v10.7h1v-10.7zM1087,710.5v-7.2h1v7.2zM1087,762.1v9.7h1v-9.7zM1089,710.5v-8.2h1v8.2zM1089,762.1v9.7h1v-9.7zM1091,710.5v-9.2h1v9.2zM1091,762.1v9.7h1v-9.7zM1093,710.5v-8.2h2v8.2zM1093,762.1v9.7h2v-9.7zM1096,710.5v-8.2h2v8.2zM1096,762.1v8.7h2v-8.7zM1099,710.5v-7.2h1v7.2zM1099,762.1v9.7h1v-9.7zM1101,710.5v-8.2h2v8.2zM1101,762.1v8.7h2v-8.7zM1104,710.5v-8.2h1v8.2zM1104,762.1v10.7h1v-10.7zM1106,710.5v-8.2h2v8.2zM1106,762.1v4.5h2v-4.5zM1109,710.5v-6.2h2v6.2zM1109,762.1v8.7h2v-8.7zM1112,710.5v-6.2h1v6.2zM1112,762.1v9.7h1v-9.7zM1114,710.5v-9.2h1v9.2zM1114,762.1v9.7h1v-9.7zM1116,710.5v-7.2h2v7.2zM1116,762.1v9.7h2v-9.7zM1119,710.5v-9.2h2v9.2zM1119,762.1v7.7h2v-7.7zM1122,710.5v-8.2h1v8.2zM1122,762.1v9.7h1v-9.7zM1124,710.5v-8.2h2v8.2zM1124,762.1v10.7h2v-10.7zM1127,710.5v-7.2h1v7.2zM1127,762.1v9.7h1v-9.7zM1129,710.5v-7.2h1v7.2zM1129,762.1v9.7h1v-9.7zM1131,710.5v-6.2h1v6.2zM1131,762.1v9.7h1v-9.7zM1133,710.5v-4.7h2v4.7zM1133,762.1v10.7h2v-10.7z" fill="#fff12a" shape-rendering="crispEdges"/><path d="M1128,710.0 L1128,703.1 L1129,702.0 L1130,700.7 L1131,700.9 L1132,700.6 L1133,702.2 L1134,702.4 L1135,701.6 L1136,702.0 L1137,701.9 L1138,701.8 L1139,703.1 L1140,700.7 L1141,700.6 L1142,702.4 L1143,703.4 L1144,701.8 L1145,701.3 L1146,703.0 L1147,701.9 L1148,698.0 L1149,701.2 L1150,701.7 L1151,699.0 L1152,701.1 L1153,701.7 L1154,699.3 L1155,702.9 L1156,700.0 L1157,701.7 L1158,701.1 L1159,703.8 L1160,702.9 L1161,700.4 L1162,698.6 L1163,699.9 L1164,700.4 L1165,700.4 L1166,702.0 L1167,701.8 L1168,698.8 L1169,700.2 L1170,701.3 L1171,698.8 L1172,701.3 L1173,698.2 L1174,700.7 L1175,701.0 L1176,697.6 L1177,698.8 L1178,699.2 L1179,698.8 L1180,698.6 L1181,699.4 L1182,699.0 L1183,700.6 L1184,700.0 L1185,700.8 L1186,701.4 L1187,701.0 L1188,701.1 L1189,699.1 L1190,696.7 L1191,695.9 L1192,699.6 L1193,698.6 L1194,700.1 L1195,700.0 L1196,700.4 L1197,699.3 L1198,699.1 L1199,699.3 L1200,699.8 L1201,699.1 L1202,700.9 L1203,699.2 L1204,701.3 L1205,701.7 L1206,699.9 L1207,698.7 L1208,700.8 L1209,698.6 L1210,698.8 L1211,697.5 L1212,698.7 L1213,699.0 L1214,700.5 L1215,701.7 L1216,699.4 L1217,700.0 L1218,700.1 L1219,700.1 L1220,699.4 L1221,698.7 L1222,698.9 L1223,698.9 L1224,701.7 L1225,700.8 L1226,701.5 L1227,702.0 L1228,699.4 L1229,701.7 L1230,700.9 L1231,699.6 L1232,698.0 L1233,699.5 L1234,699.4 L1235,699.7 L1236,700.4 L1237,700.0 L1238,700.8 L1239,702.4 L1240,699.0 L1241,700.6 L1242,701.8 L1243,699.8 L1244,702.8 L1245,702.6 L1246,701.8 L1247,700.9 L1248,700.9 L1249,700.2 L1250,702.3 L1251,700.3 L1252,700.9 L1253,701.3 L1254,703.5 L1255,703.3 L1256,703.5 L1257,701.0 L1258,703.2 L1259,701.3 L1260,701.6 L1261,703.3 L1262,703.4 L1263,701.3 L1264,703.7 L1265,703.6 L1266,701.0 L1267,701.4 L1268,702.1 L1269,702.0 L1270,702.5 L1271,702.2 L1272,701.6 L1273,701.4 L1274,698.0 L1275,703.4 L1276,703.3 L1277,702.8 L1278,703.3 L1279,702.8 L1280,702.7 L1281,702.8 L1282,700.9 L1283,701.8 L1284,703.7 L1285,702.0 L1286,703.7 L1287,702.1 L1288,703.3 L1289,702.7 L1290,704.5 L1291,704.3 L1292,704.0 L1293,702.2 L1294,703.6 L1295,704.8 L1296,702.8 L1297,703.5 L1298,703.7 L1299,701.7 L1300,701.5 L1301,703.9 L1302,703.2 L1303,702.8 L1304,704.4 L1305,700.0 L1306,702.9 L1307,701.5 L1308,702.7 L1309,700.0 L1310,701.9 L1311,703.7 L1312,700.6 L1313,703.6 L1314,701.8 L1315,701.1 L1316,703.2 L1317,702.8 L1318,702.1 L1319,703.9 L1320,702.3 L1321,701.0 L1322,704.1 L1323,703.3 L1324,702.6 L1325,701.6 L1326,701.9 L1327,703.0 L1328,702.9 L1329,702.2 L1330,701.1 L1331,702.3 L1332,702.0 L1333,701.8 L1334,699.1 L1335,703.6 L1336,703.4 L1337,703.5 L1338,702.8 L1339,702.0 L1340,701.8 L1341,702.9 L1342,703.0 L1343,700.2 L1344,701.4 L1345,701.2 L1346,699.1 L1347,699.7 L1348,700.7 L1349,703.0 L1350,703.0 L1351,702.8 L1352,703.3 L1353,702.3 L1354,698.9 L1355,702.2 L1356,701.0 L1357,699.8 L1358,703.3 L1359,703.0 L1360,701.3 L1361,703.0 L1362,702.3 L1363,701.5 L1364,703.3 L1365,702.8 L1366,702.6 L1367,702.4 L1368,701.6 L1369,702.6 L1370,699.1 L1371,703.1 L1372,702.1 L1373,700.9 L1374,703.6 L1375,702.6 L1376,698.0 L1377,701.1 L1378,701.2 L1379,701.4 L1380,702.3 L1381,701.9 L1382,701.4 L1383,701.5 L1384,701.0 L1385,701.6 L1386,699.1 L1387,703.0 L1388,702.4 L1389,702.3 L1390,703.5 L1391,703.7 L1392,702.3 L1393,702.1 L1394,701.4 L1395,701.4 L1396,703.4 L1397,701.1 L1398,701.5 L1399,702.0 L1400,701.3 L1401,701.6 L1402,702.6 L1403,702.8 L1404,701.8 L1405,699.1 L1406,700.0 L1407,703.4 L1408,703.5 L1409,700.8 L1410,702.5 L1411,701.1 L1412,703.4 L1413,702.5 L1414,700.3 L1415,699.1 L1416,700.8 L1417,700.9 L1418,702.9 L1419,701.4 L1420,700.8 L1421,702.0 L1422,702.3 L1423,702.9 L1424,700.4 L1425,700.3 L1426,702.2 L1427,703.1 L1428,701.4 L1429,702.0 L1430,701.4 L1431,702.1 L1432,702.6 L1433,701.8 L1434,700.6 L1435,702.5 L1436,701.0 L1437,698.4 L1438,701.4 L1439,698.1 L1440,700.4 L1441,702.5 L1442,703.2 L1443,702.7 L1444,698.6 L1445,701.7 L1446,702.2 L1447,700.3 L1448,700.3 L1449,702.4 L1450,701.0 L1451,698.8 L1452,702.9 L1453,701.1 L1454,702.6 L1455,701.9 L1456,702.8 L1457,702.4 L1458,703.0 L1459,703.4 L1460,702.5 L1461,701.1 L1462,700.9 L1463,702.3 L1464,703.0 L1465,701.4 L1466,702.8 L1467,702.1 L1468,701.9 L1469,703.2 L1470,700.4 L1471,703.6 L1472,700.6 L1473,701.0 L1474,702.4 L1475,701.1 L1476,702.8 L1477,700.1 L1478,701.9 L1479,701.0 L1480,701.0 L1481,702.1 L1482,702.0 L1483,702.9 L1484,703.3 L1485,702.5 L1486,701.9 L1487,700.5 L1488,699.1 L1489,699.4 L1490,700.4 L1491,702.9 L1492,701.0 L1493,700.1 L1494,701.8 L1495,699.8 L1496,697.5 L1497,700.1 L1498,701.1 L1499,702.9 L1500,700.3 L1501,701.1 L1502,701.8 L1503,701.9 L1504,699.6 L1505,702.2 L1506,699.2 L1507,698.1 L1508,701.3 L1509,698.7 L1510,700.5 L1511,702.1 L1512,701.3 L1513,702.3 L1514,700.7 L1515,701.9 L1516,701.1 L1517,701.8 L1518,702.7 L1519,698.4 L1520,702.1 L1521,700.5 L1522,700.9 L1523,700.3 L1524,703.1 L1525,701.1 L1526,702.9 L1527,703.7 L1528,701.0 L1529,700.8 L1530,699.2 L1531,700.9 L1532,700.9 L1533,702.6 L1534,702.7 L1535,702.7 L1536,701.3 L1537,701.8 L1538,701.5 L1539,702.3 L1540,699.2 L1541,700.3 L1542,703.1 L1543,703.3 L1544,703.3 L1545,701.6 L1546,700.6 L1547,703.2 L1548,701.8 L1549,702.6 L1550,700.6 L1551,700.2 L1552,702.5 L1553,701.0 L1554,700.2 L1555,702.4 L1556,701.8 L1557,703.4 L1558,700.7 L1559,699.9 L1560,703.2 L1561,702.7 L1562,701.9 L1563,702.1 L1564,702.0 L1565,702.7 L1566,701.2 L1567,701.4 L1568,701.3 L1569,702.1 L1570,703.0 L1571,700.7 L1572,697.9 L1573,700.6 L1574,701.7 L1575,700.8 L1576,701.1 L1577,702.7 L1578,701.7 L1579,701.2 L1580,702.0 L1581,702.6 L1582,703.3 L1583,702.3 L1584,701.3 L1585,699.4 L1586,700.3 L1587,703.2 L1588,702.2 L1589,703.4 L1590,700.4 L1591,702.8 L1592,701.6 L1593,702.0 L1594,702.6 L1595,701.0 L1596,702.1 L1597,702.1 L1598,701.0 L1599,703.4 L1600,701.7 L1601,699.6 L1602,697.5 L1603,700.8 L1604,700.6 L1605,700.6 L1606,702.6 L1607,701.7 L1608,701.5 L1609,701.7 L1610,703.1 L1611,703.5 L1612,700.8 L1613,703.3 L1614,699.5 L1615,699.2 L1616,700.8 L1617,701.2 L1618,702.3 L1619,701.8 L1620,702.3 L1621,701.8 L1622,699.0 L1623,700.0 L1624,703.3 L1625,703.3 L1626,701.8 L1627,698.0 L1628,703.0 L1629,702.8 L1630,701.8 L1631,701.5 L1632,699.1 L1633,700.8 L1634,700.5 L1635,700.2 L1636,698.5 L1637,701.3 L1638,700.9 L1639,700.3 L1640,700.4 L1641,701.2 L1642,701.5 L1643,700.3 L1644,700.9 L1645,702.6 L1646,700.3 L1647,703.1 L1648,700.2 L1649,700.8 L1650,702.7 L1651,703.0 L1652,701.5 L1653,701.1 L1654,700.2 L1655,700.7 L1656,703.1 L1657,702.6 L1658,698.9 L1659,700.0 L1660,700.6 L1661,701.1 L1662,702.7 L1663,703.2 L1664,702.0 L1665,702.7 L1666,698.0 L1667,701.4 L1668,700.6 L1669,700.5 L1670,701.0 L1671,702.0 L1672,702.2 L1673,702.3 L1674,701.8 L1675,703.2 L1676,700.5 L1677,701.6 L1678,703.0 L1679,701.3 L1680,700.0 L1681,698.7 L1682,699.4 L1683,701.0 L1684,702.7 L1685,701.1 L1686,699.0 L1687,700.2 L1688,699.9 L1689,700.8 L1690,697.8 L1691,702.4 L1692,700.5 L1693,701.7 L1694,701.6 L1695,700.6 L1696,700.2 L1697,701.5 L1698,700.4 L1699,701.5 L1700,700.4 L1701,701.4 L1702,701.0 L1703,702.7 L1704,700.8 L1705,701.2 L1706,697.7 L1707,700.7 L1708,700.7 L1709,696.5 L1710,701.0 L1711,700.6 L1712,702.3 L1713,700.2 L1714,701.8 L1715,699.7 L1716,700.7 L1717,701.4 L1718,700.7 L1719,701.7 L1720,700.1 L1721,698.8 L1722,700.0 L1723,702.0 L1724,700.9 L1725,701.7 L1726,701.9 L1727,702.6 L1728,700.9 L1729,702.4 L1730,701.6 L1731,702.6 L1732,701.6 L1733,702.9 L1734,703.0 L1735,702.7 L1736,699.4 L1737,700.8 L1738,701.0 L1739,701.4 L1740,702.9 L1741,700.2 L1742,697.9 L1743,700.4 L1744,701.7 L1745,698.9 L1746,700.0 L1747,700.0 L1748,702.0 L1749,700.8 L1750,699.4 L1751,700.4 L1751,710.0 L1751,762.6 L1751,773.7 L1750,770.8 L1749,773.6 L1748,773.9 L1747,773.0 L1746,772.7 L1745,772.7 L1744,773.2 L1743,772.7 L1742,776.6 L1741,773.5 L1740,771.9 L1739,772.5 L1738,772.3 L1737,774.0 L1736,775.1 L1735,773.3 L1734,771.2 L1733,772.8 L1732,771.4 L1731,773.2 L1730,772.3 L1729,775.1 L1728,773.0 L1727,772.6 L1726,772.2 L1725,772.9 L1724,774.5 L1723,772.3 L1722,774.7 L1721,773.3 L1720,773.7 L1719,773.3 L1718,774.1 L1717,771.9 L1716,774.0 L1715,771.7 L1714,774.1 L1713,772.3 L1712,772.0 L1711,774.3 L1710,774.8 L1709,771.6 L1708,773.1 L1707,773.4 L1706,772.7 L1705,771.8 L1704,772.3 L1703,772.6 L1702,771.9 L1701,771.9 L1700,774.0 L1699,772.8 L1698,772.8 L1697,774.4 L1696,773.1 L1695,774.1 L1694,773.8 L1693,772.4 L1692,774.2 L1691,774.4 L1690,774.4 L1689,775.9 L1688,771.9 L1687,774.2 L1686,772.4 L1685,773.4 L1684,774.3 L1683,773.4 L1682,772.1 L1681,773.8 L1680,773.1 L1679,773.5 L1678,772.2 L1677,772.9 L1676,771.7 L1675,776.0 L1674,775.1 L1673,773.7 L1672,771.8 L1671,776.5 L1670,775.1 L1669,773.3 L1668,773.3 L1667,772.1 L1666,775.2 L1665,772.9 L1664,774.0 L1663,774.2 L1662,774.0 L1661,773.4 L1660,772.0 L1659,772.5 L1658,772.7 L1657,772.8 L1656,774.0 L1655,774.3 L1654,774.5 L1653,774.4 L1652,772.6 L1651,772.4 L1650,773.1 L1649,772.2 L1648,772.7 L1647,771.7 L1646,774.2 L1645,773.7 L1644,775.7 L1643,772.2 L1642,771.9 L1641,771.4 L1640,772.1 L1639,775.8 L1638,773.0 L1637,772.2 L1636,773.6 L1635,776.4 L1634,774.3 L1633,773.8 L1632,771.8 L1631,772.4 L1630,774.2 L1629,772.5 L1628,771.6 L1627,772.2 L1626,771.9 L1625,773.2 L1624,772.4 L1623,771.5 L1622,774.1 L1621,772.2 L1620,772.1 L1619,772.0 L1618,773.5 L1617,773.8 L1616,772.4 L1615,771.5 L1614,771.2 L1613,771.5 L1612,773.1 L1611,772.6 L1610,771.5 L1609,773.9 L1608,772.4 L1607,771.2 L1606,772.1 L1605,774.7 L1604,775.7 L1603,770.6 L1602,772.2 L1601,770.8 L1600,773.2 L1599,772.8 L1598,770.6 L1597,772.1 L1596,773.3 L1595,772.3 L1594,773.2 L1593,772.2 L1592,771.0 L1591,771.7 L1590,771.0 L1589,773.4 L1588,770.8 L1587,772.1 L1586,772.3 L1585,772.4 L1584,770.9 L1583,772.0 L1582,773.1 L1581,771.1 L1580,772.0 L1579,775.2 L1578,773.9 L1577,770.3 L1576,772.3 L1575,771.9 L1574,772.9 L1573,772.3 L1572,771.0 L1571,773.1 L1570,773.1 L1569,771.3 L1568,772.1 L1567,771.2 L1566,773.0 L1565,773.7 L1564,773.6 L1563,771.0 L1562,772.4 L1561,771.3 L1560,773.8 L1559,773.1 L1558,771.6 L1557,772.9 L1556,775.4 L1555,773.8 L1554,771.8 L1553,773.3 L1552,773.6 L1551,772.8 L1550,775.3 L1549,773.0 L1548,771.9 L1547,771.0 L1546,772.0 L1545,771.6 L1544,771.4 L1543,772.5 L1542,772.8 L1541,771.3 L1540,771.3 L1539,771.1 L1538,770.6 L1537,771.6 L1536,771.7 L1535,771.1 L1534,771.7 L1533,772.8 L1532,772.9 L1531,774.5 L1530,771.8 L1529,773.0 L1528,771.1 L1527,775.3 L1526,771.7 L1525,771.1 L1524,772.6 L1523,773.8 L1522,771.7 L1521,772.7 L1520,771.2 L1519,771.0 L1518,772.2 L1517,772.8 L1516,771.0 L1515,775.2 L1514,773.8 L1513,773.8 L1512,773.6 L1511,771.1 L1510,773.5 L1509,773.6 L1508,771.4 L1507,773.5 L1506,773.5 L1505,773.8 L1504,772.9 L1503,773.4 L1502,773.4 L1501,773.1 L1500,772.9 L1499,772.1 L1498,772.6 L1497,773.0 L1496,773.2 L1495,773.8 L1494,773.2 L1493,773.3 L1492,772.7 L1491,773.8 L1490,773.8 L1489,772.9 L1488,773.4 L1487,772.4 L1486,771.8 L1485,772.6 L1484,772.8 L1483,773.4 L1482,771.9 L1481,771.2 L1480,770.6 L1479,771.4 L1478,771.7 L1477,771.7 L1476,771.2 L1475,774.4 L1474,772.4 L1473,772.3 L1472,774.0 L1471,773.3 L1470,770.7 L1469,773.4 L1468,772.6 L1467,772.1 L1466,770.8 L1465,772.8 L1464,772.4 L1463,770.9 L1462,771.9 L1461,773.0 L1460,770.6 L1459,772.9 L1458,774.2 L1457,773.1 L1456,771.0 L1455,771.7 L1454,773.1 L1453,770.2 L1452,770.7 L1451,770.2 L1450,773.8 L1449,770.4 L1448,772.6 L1447,772.7 L1446,772.8 L1445,770.1 L1444,771.0 L1443,771.6 L1442,773.4 L1441,771.1 L1440,774.8 L1439,772.9 L1438,771.4 L1437,773.1 L1436,771.8 L1435,771.9 L1434,770.9 L1433,772.8 L1432,773.3 L1431,771.9 L1430,771.2 L1429,772.5 L1428,773.3 L1427,771.4 L1426,774.1 L1425,773.5 L1424,772.3 L1423,771.6 L1422,773.3 L1421,774.1 L1420,772.9 L1419,772.7 L1418,773.2 L1417,774.2 L1416,773.9 L1415,773.6 L1414,771.1 L1413,771.9 L1412,775.0 L1411,773.4 L1410,774.9 L1409,776.2 L1408,773.1 L1407,775.6 L1406,773.9 L1405,773.2 L1404,773.2 L1403,771.7 L1402,772.9 L1401,772.9 L1400,774.4 L1399,774.1 L1398,771.6 L1397,771.9 L1396,773.3 L1395,776.3 L1394,773.1 L1393,774.2 L1392,771.3 L1391,773.4 L1390,772.8 L1389,770.8 L1388,773.6 L1387,772.2 L1386,772.9 L1385,772.3 L1384,770.8 L1383,770.9 L1382,773.2 L1381,771.9 L1380,771.8 L1379,771.4 L1378,772.3 L1377,770.9 L1376,772.3 L1375,772.5 L1374,773.1 L1373,772.4 L1372,772.7 L1371,771.0 L1370,771.0 L1369,772.5 L1368,774.2 L1367,770.4 L1366,772.4 L1365,772.2 L1364,770.3 L1363,771.4 L1362,772.3 L1361,770.3 L1360,770.9 L1359,773.0 L1358,773.0 L1357,773.2 L1356,773.5 L1355,771.0 L1354,771.3 L1353,772.3 L1352,772.8 L1351,771.6 L1350,771.6 L1349,773.8 L1348,771.8 L1347,774.2 L1346,771.5 L1345,771.9 L1344,774.1 L1343,771.9 L1342,773.6 L1341,771.9 L1340,773.2 L1339,772.4 L1338,770.5 L1337,774.3 L1336,774.6 L1335,773.4 L1334,772.3 L1333,770.6 L1332,770.4 L1331,771.4 L1330,771.9 L1329,775.1 L1328,771.4 L1327,773.1 L1326,771.3 L1325,770.9 L1324,772.4 L1323,771.8 L1322,769.1 L1321,769.4 L1320,769.4 L1319,770.2 L1318,768.7 L1317,770.9 L1316,773.2 L1315,771.3 L1314,768.6 L1313,773.1 L1312,772.2 L1311,771.1 L1310,769.1 L1309,769.0 L1308,771.2 L1307,769.7 L1306,773.5 L1305,768.9 L1304,771.0 L1303,768.6 L1302,769.4 L1301,768.9 L1300,770.7 L1299,770.7 L1298,771.4 L1297,770.5 L1296,773.0 L1295,769.3 L1294,770.6 L1293,769.1 L1292,770.6 L1291,769.8 L1290,769.5 L1289,771.5 L1288,770.5 L1287,769.3 L1286,770.0 L1285,769.7 L1284,768.7 L1283,771.9 L1282,771.2 L1281,771.2 L1280,771.5 L1279,771.2 L1278,772.1 L1277,770.2 L1276,772.0 L1275,770.1 L1274,772.7 L1273,771.1 L1272,769.9 L1271,769.6 L1270,770.9 L1269,769.5 L1268,771.2 L1267,771.7 L1266,769.9 L1265,770.0 L1264,770.6 L1263,770.8 L1262,769.6 L1261,769.2 L1260,770.2 L1259,770.4 L1258,770.0 L1257,769.4 L1256,769.7 L1255,769.8 L1254,772.3 L1253,770.7 L1252,771.7 L1251,771.3 L1250,772.1 L1249,771.8 L1248,770.7 L1247,769.3 L1246,771.7 L1245,771.4 L1244,771.3 L1243,770.5 L1242,769.9 L1241,771.5 L1240,772.2 L1239,773.3 L1238,771.3 L1237,770.0 L1236,769.0 L1235,771.6 L1234,771.5 L1233,769.5 L1232,772.1 L1231,771.4 L1230,771.9 L1229,771.2 L1228,772.3 L1227,775.0 L1226,772.1 L1225,773.6 L1224,770.3 L1223,772.3 L1222,775.7 L1221,770.8 L1220,770.9 L1219,772.4 L1218,774.1 L1217,771.6 L1216,771.1 L1215,772.9 L1214,773.1 L1213,774.0 L1212,771.3 L1211,770.9 L1210,773.9 L1209,771.2 L1208,772.3 L1207,773.1 L1206,772.8 L1205,777.7 L1204,774.9 L1203,774.7 L1202,773.4 L1201,773.9 L1200,773.7 L1199,774.4 L1198,775.4 L1197,774.7 L1196,776.1 L1195,774.7 L1194,774.1 L1193,774.7 L1192,774.6 L1191,774.4 L1190,772.3 L1189,773.8 L1188,772.8 L1187,775.3 L1186,774.1 L1185,773.4 L1184,775.8 L1183,774.2 L1182,774.9 L1181,772.6 L1180,775.4 L1179,772.9 L1178,774.6 L1177,773.3 L1176,774.7 L1175,773.7 L1174,774.7 L1173,774.9 L1172,773.8 L1171,772.9 L1170,773.0 L1169,774.1 L1168,774.6 L1167,775.0 L1166,775.9 L1165,774.6 L1164,773.3 L1163,775.0 L1162,773.0 L1161,773.2 L1160,775.6 L1159,774.5 L1158,772.7 L1157,775.7 L1156,775.8 L1155,775.8 L1154,777.2 L1153,775.8 L1152,775.6 L1151,776.1 L1150,776.1 L1149,774.8 L1148,774.1 L1147,778.2 L1146,775.4 L1145,774.2 L1144,774.7 L1143,775.1 L1142,774.8 L1141,775.7 L1140,774.5 L1139,774.0 L1138,774.5 L1137,775.1 L1136,773.6 L1135,773.8 L1134,774.5 L1133,774.5 L1132,773.7 L1131,773.6 L1130,774.3 L1129,774.1 L1128,773.1 L1128,762.6Z" fill="#fef02a" shape-rendering="crispEdges"/><rect x="1128" y="710.0" width="623" height="52.60000000000002" fill="#fef02a"/><path d="M1238.3,705.3V768.8M1731.0,705.3V768.8M1322.8,705.3V768.8M1150.4,705.3V768.8M1408.3,705.3V768.8M1470.3,705.3V768.8M1132.4,705.3V768.8M1451.5,705.3V768.8M1748.4,705.3V768.8M1219.2,705.3V768.8M1468.8,705.3V768.8M1484.3,705.3V768.8M1191.0,705.3V768.8M1349.5,705.3V768.8M1622.4,705.3V768.8M1614.1,705.3V768.8M1351.9,705.3V768.8M1655.0,705.3V768.8M1583.3,705.3V768.8M1718.3,705.3V768.8M1745.2,705.3V768.8M1262.3,705.3V768.8M1439.7,705.3V768.8M1583.3,705.3V768.8M1436.1,705.3V768.8M1434.3,705.3V768.8M1518.1,705.3V768.8M1610.6,705.3V768.8M1491.5,705.3V768.8M1394.8,705.3V768.8M1398.0,705.3V768.8M1418.9,705.3V768.8M1255.1,705.3V768.8M1657.5,705.3V768.8M1320.7,705.3V768.8M1560.5,705.3V768.8M1543.0,705.3V768.8M1723.8,705.3V768.8M1723.1,705.3V768.8M1749.5,705.3V768.8M1273.1,705.3V768.8M1247.4,705.3V768.8M1533.5,705.3V768.8M1625.1,705.3V768.8M1339.0,705.3V768.8M1465.2,705.3V768.8M1178.4,705.3V768.8M1142.7,705.3V768.8M1606.4,705.3V768.8M1352.3,705.3V768.8M1149.9,705.3V768.8M1143.6,705.3V768.8M1471.2,705.3V768.8M1264.3,705.3V768.8M1249.9,705.3V768.8M1625.3,705.3V768.8M1269.7,705.3V768.8M1173.6,705.3V768.8M1428.4,705.3V768.8M1466.1,705.3V768.8M1353.6,705.3V768.8M1266.7,705.3V768.8M1442.4,705.3V768.8M1149.9,705.3V768.8M1495.5,705.3V768.8M1314.0,705.3V768.8M1607.2,705.3V768.8M1335.9,705.3V768.8M1305.2,705.3V768.8M1153.7,705.3V768.8" stroke="#dccc18" stroke-width="1" fill="none" opacity="0.3"/>
<rect x="3" y="853.0" width="1133" height="52.200000000000045" fill="#22c6cd"/><path d="M3,853.5v-8.3h2v8.3zM3,904.7v8.3h2v-8.3zM6,853.5v-8.3h1v8.3zM6,904.7v10.3h1v-10.3zM8,853.5v-7.3h2v7.3zM8,904.7v10.3h2v-10.3zM11,853.5v-7.3h1v7.3zM11,904.7v10.3h1v-10.3zM14,853.5v-5.3h2v5.3zM14,904.7v9.3h2v-9.3zM17,853.5v-8.3h1v8.3zM17,904.7v8.3h1v-8.3zM19,853.5v-7.3h1v7.3zM19,904.7v7.3h1v-7.3zM21,853.5v-7.3h2v7.3zM21,904.7v8.3h2v-8.3zM24,853.5v-7.3h1v7.3zM24,904.7v8.3h1v-8.3zM26,853.5v-5.3h2v5.3zM26,904.7v10.3h2v-10.3zM29,853.5v-6.3h2v6.3zM29,904.7v10.3h2v-10.3zM32,853.5v-6.3h2v6.3zM32,904.7v10.3h2v-10.3zM35,853.5v-3.1h2v3.1zM35,904.7v10.3h2v-10.3zM38,853.5v-6.3h2v6.3zM38,904.7v10.3h2v-10.3zM41,853.5v-4.8h1v4.8zM41,904.7v10.3h1v-10.3zM43,853.5v-8.3h2v8.3zM43,904.7v9.3h2v-9.3zM46,853.5v-6.3h1v6.3zM46,904.7v9.3h1v-9.3zM48,853.5v-8.3h2v8.3zM48,904.7v8.3h2v-8.3zM51,853.5v-7.3h2v7.3zM51,904.7v9.3h2v-9.3zM54,853.5v-7.3h1v7.3zM54,904.7v9.3h1v-9.3zM56,853.5v-8.3h2v8.3zM56,904.7v9.3h2v-9.3zM59,853.5v-6.3h1v6.3zM59,904.7v9.3h1v-9.3zM61,853.5v-6.3h2v6.3zM61,904.7v7.3h2v-7.3zM64,853.5v-7.3h1v7.3zM64,904.7v9.3h1v-9.3zM66,853.5v-3.7h1v3.7zM66,904.7v4.8h1v-4.8zM68,853.5v-6.3h2v6.3zM68,904.7v9.3h2v-9.3zM71,853.5v-8.3h1v8.3zM71,904.7v10.3h1v-10.3zM73,853.5v-6.3h1v6.3zM73,904.7v10.3h1v-10.3zM75,853.5v-7.3h2v7.3zM75,904.7v10.3h2v-10.3zM78,853.5v-7.3h2v7.3zM78,904.7v10.3h2v-10.3zM81,853.5v-7.3h2v7.3zM81,904.7v9.3h2v-9.3zM84,853.5v-6.3h2v6.3zM84,904.7v8.3h2v-8.3zM87,853.5v-8.3h1v8.3zM87,904.7v10.3h1v-10.3zM89,853.5v-8.3h2v8.3zM89,904.7v9.3h2v-9.3zM92,853.5v-7.3h2v7.3zM92,904.7v8.3h2v-8.3zM95,853.5v-8.3h2v8.3zM95,904.7v10.3h2v-10.3zM98,853.5v-7.3h2v7.3zM98,904.7v9.3h2v-9.3zM101,853.5v-7.3h1v7.3zM101,904.7v10.3h1v-10.3zM104,853.5v-8.3h2v8.3zM104,904.7v10.3h2v-10.3zM107,853.5v-7.3h2v7.3zM107,904.7v10.3h2v-10.3zM110,853.5v-6.3h2v6.3zM110,904.7v10.3h2v-10.3zM113,853.5v-8.3h2v8.3zM113,904.7v10.3h2v-10.3zM117,853.5v-7.3h1v7.3zM117,904.7v8.3h1v-8.3zM119,853.5v-7.3h2v7.3zM119,904.7v10.3h2v-10.3zM122,853.5v-7.3h1v7.3zM122,904.7v9.3h1v-9.3zM124,853.5v-8.3h2v8.3zM124,904.7v10.3h2v-10.3zM127,853.5v-6.3h2v6.3zM127,904.7v7.3h2v-7.3zM130,853.5v-8.3h2v8.3zM130,904.7v10.3h2v-10.3zM133,853.5v-7.3h1v7.3zM133,904.7v9.3h1v-9.3zM135,853.5v-8.3h1v8.3zM135,904.7v9.3h1v-9.3zM137,853.5v-6.3h2v6.3zM137,904.7v8.3h2v-8.3zM140,853.5v-8.3h1v8.3zM140,904.7v7.3h1v-7.3zM142,853.5v-7.3h2v7.3zM142,904.7v10.3h2v-10.3zM145,853.5v-7.3h2v7.3zM145,904.7v8.3h2v-8.3zM148,853.5v-3.7h2v3.7zM148,904.7v10.3h2v-10.3zM151,853.5v-7.3h1v7.3zM151,904.7v8.3h1v-8.3zM153,853.5v-6.3h2v6.3zM153,904.7v8.3h2v-8.3zM156,853.5v-8.3h1v8.3zM156,904.7v10.3h1v-10.3zM159,853.5v-7.3h1v7.3zM159,904.7v10.3h1v-10.3zM161,853.5v-8.3h2v8.3zM161,904.7v4.2h2v-4.2zM164,853.5v-7.3h1v7.3zM164,904.7v7.3h1v-7.3zM166,853.5v-5.3h2v5.3zM166,904.7v10.3h2v-10.3zM169,853.5v-4.2h2v4.2zM169,904.7v9.3h2v-9.3zM173,853.5v-6.3h2v6.3zM173,904.7v9.3h2v-9.3zM176,853.5v-4.8h2v4.8zM176,904.7v8.3h2v-8.3zM179,853.5v-8.3h2v8.3zM179,904.7v10.3h2v-10.3zM182,853.5v-8.3h1v8.3zM182,904.7v10.3h1v-10.3zM184,853.5v-7.3h1v7.3zM184,904.7v7.3h1v-7.3zM186,853.5v-6.3h2v6.3zM186,904.7v10.3h2v-10.3zM189,853.5v-6.3h1v6.3zM189,904.7v10.3h1v-10.3zM191,853.5v-7.3h2v7.3zM191,904.7v10.3h2v-10.3zM194,853.5v-4.8h1v4.8zM194,904.7v10.3h1v-10.3zM196,853.5v-6.3h2v6.3zM196,904.7v8.3h2v-8.3zM199,853.5v-7.3h2v7.3zM199,904.7v10.3h2v-10.3zM202,853.5v-6.3h2v6.3zM202,904.7v10.3h2v-10.3zM205,853.5v-6.3h2v6.3zM205,904.7v9.3h2v-9.3zM208,853.5v-7.3h1v7.3zM208,904.7v9.3h1v-9.3zM210,853.5v-8.3h1v8.3zM210,904.7v10.3h1v-10.3zM212,853.5v-8.3h1v8.3zM212,904.7v10.3h1v-10.3zM214,853.5v-3.7h2v3.7zM214,904.7v10.3h2v-10.3zM217,853.5v-5.3h2v5.3zM217,904.7v10.3h2v-10.3zM220,853.5v-6.3h2v6.3zM220,904.7v9.3h2v-9.3zM223,853.5v-7.3h1v7.3zM223,904.7v8.3h1v-8.3zM225,853.5v-5.3h2v5.3zM225,904.7v8.3h2v-8.3zM228,853.5v-7.3h1v7.3zM228,904.7v8.3h1v-8.3zM230,853.5v-3.7h2v3.7zM230,904.7v10.3h2v-10.3zM233,853.5v-8.3h1v8.3zM233,904.7v9.3h1v-9.3zM235,853.5v-8.3h2v8.3zM235,904.7v10.3h2v-10.3zM238,853.5v-8.3h1v8.3zM238,904.7v10.3h1v-10.3zM240,853.5v-7.3h1v7.3zM240,904.7v10.3h1v-10.3zM242,853.5v-6.3h2v6.3zM242,904.7v10.3h2v-10.3zM245,853.5v-7.3h2v7.3zM245,904.7v9.3h2v-9.3zM248,853.5v-8.3h2v8.3zM248,904.7v9.3h2v-9.3zM251,853.5v-7.3h1v7.3zM251,904.7v8.3h1v-8.3zM253,853.5v-8.3h1v8.3zM253,904.7v10.3h1v-10.3zM255,853.5v-8.3h2v8.3zM255,904.7v9.3h2v-9.3zM258,853.5v-7.3h2v7.3zM258,904.7v9.3h2v-9.3zM261,853.5v-5.3h1v5.3zM261,904.7v10.3h1v-10.3zM263,853.5v-7.3h2v7.3zM263,904.7v10.3h2v-10.3zM266,853.5v-5.3h1v5.3zM266,904.7v9.3h1v-9.3zM268,853.5v-8.3h2v8.3zM268,904.7v9.3h2v-9.3zM271,853.5v-7.3h1v7.3zM271,904.7v10.3h1v-10.3zM273,853.5v-6.3h2v6.3zM273,904.7v10.3h2v-10.3zM276,853.5v-8.3h2v8.3zM276,904.7v8.3h2v-8.3zM279,853.5v-5.3h2v5.3zM279,904.7v8.3h2v-8.3zM282,853.5v-8.3h1v8.3zM282,904.7v8.3h1v-8.3zM284,853.5v-8.3h2v8.3zM284,904.7v8.3h2v-8.3zM287,853.5v-8.3h1v8.3zM287,904.7v5.3h1v-5.3zM289,853.5v-7.3h1v7.3zM289,904.7v8.3h1v-8.3zM291,853.5v-5.3h2v5.3zM291,904.7v9.3h2v-9.3zM294,853.5v-7.3h2v7.3zM294,904.7v8.3h2v-8.3zM297,853.5v-8.3h1v8.3zM297,904.7v8.3h1v-8.3zM300,853.5v-6.3h2v6.3zM300,904.7v10.3h2v-10.3zM303,853.5v-5.3h1v5.3zM303,904.7v8.3h1v-8.3zM305,853.5v-8.3h2v8.3zM305,904.7v10.3h2v-10.3zM308,853.5v-6.3h1v6.3zM308,904.7v9.3h1v-9.3zM310,853.5v-8.3h1v8.3zM310,904.7v9.3h1v-9.3zM312,853.5v-6.3h1v6.3zM312,904.7v10.3h1v-10.3zM314,853.5v-8.3h2v8.3zM314,904.7v9.3h2v-9.3zM317,853.5v-8.3h2v8.3zM317,904.7v10.3h2v-10.3zM320,853.5v-5.3h1v5.3zM320,904.7v9.3h1v-9.3zM322,853.5v-8.3h2v8.3zM322,904.7v10.3h2v-10.3zM325,853.5v-6.3h2v6.3zM325,904.7v10.3h2v-10.3zM328,853.5v-5.3h2v5.3zM328,904.7v9.3h2v-9.3zM331,853.5v-8.3h2v8.3zM331,904.7v9.3h2v-9.3zM334,853.5v-6.3h2v6.3zM334,904.7v9.3h2v-9.3zM337,853.5v-6.3h1v6.3zM337,904.7v7.3h1v-7.3zM339,853.5v-8.3h2v8.3zM339,904.7v8.3h2v-8.3zM342,853.5v-7.3h2v7.3zM342,904.7v8.3h2v-8.3zM345,853.5v-5.3h2v5.3zM345,904.7v8.3h2v-8.3zM348,853.5v-8.3h1v8.3zM348,904.7v8.3h1v-8.3zM350,853.5v-4.8h2v4.8zM350,904.7v7.3h2v-7.3zM353,853.5v-8.3h1v8.3zM353,904.7v5.3h1v-5.3zM355,853.5v-4.2h2v4.2zM355,904.7v9.3h2v-9.3zM358,853.5v-6.3h2v6.3zM358,904.7v7.3h2v-7.3zM361,853.5v-8.3h1v8.3zM361,904.7v10.3h1v-10.3zM363,853.5v-8.3h1v8.3zM363,904.7v10.3h1v-10.3zM365,853.5v-8.3h2v8.3zM365,904.7v10.3h2v-10.3zM368,853.5v-7.3h1v7.3zM368,904.7v7.3h1v-7.3zM370,853.5v-4.8h2v4.8zM370,904.7v9.3h2v-9.3zM373,853.5v-6.3h1v6.3zM373,904.7v10.3h1v-10.3zM375,853.5v-6.3h1v6.3zM375,904.7v4.2h1v-4.2zM377,853.5v-3.1h2v3.1zM377,904.7v8.3h2v-8.3zM380,853.5v-6.3h1v6.3zM380,904.7v8.3h1v-8.3zM383,853.5v-7.3h2v7.3zM383,904.7v9.3h2v-9.3zM386,853.5v-7.3h2v7.3zM386,904.7v7.3h2v-7.3zM389,853.5v-7.3h2v7.3zM389,904.7v9.3h2v-9.3zM392,853.5v-5.3h2v5.3zM392,904.7v9.3h2v-9.3zM395,853.5v-8.3h1v8.3zM395,904.7v7.3h1v-7.3zM397,853.5v-7.3h2v7.3zM397,904.7v9.3h2v-9.3zM400,853.5v-5.3h2v5.3zM400,904.7v9.3h2v-9.3zM403,853.5v-8.3h2v8.3zM403,904.7v10.3h2v-10.3zM406,853.5v-6.3h2v6.3zM406,904.7v7.3h2v-7.3zM409,853.5v-8.3h2v8.3zM409,904.7v8.3h2v-8.3zM412,853.5v-6.3h1v6.3zM412,904.7v10.3h1v-10.3zM414,853.5v-5.3h1v5.3zM414,904.7v8.3h1v-8.3zM416,853.5v-5.3h1v5.3zM416,904.7v8.3h1v-8.3zM418,853.5v-5.3h2v5.3zM418,904.7v8.3h2v-8.3zM421,853.5v-8.3h2v8.3zM421,904.7v5.9h2v-5.9zM424,853.5v-8.3h2v8.3zM424,904.7v8.3h2v-8.3zM427,853.5v-8.3h2v8.3zM427,904.7v8.3h2v-8.3zM430,853.5v-4.8h2v4.8zM430,904.7v9.3h2v-9.3zM434,853.5v-6.3h1v6.3zM434,904.7v7.3h1v-7.3zM436,853.5v-7.3h2v7.3zM436,904.7v9.3h2v-9.3zM439,853.5v-7.3h1v7.3zM439,904.7v10.3h1v-10.3zM441,853.5v-3.1h1v3.1zM441,904.7v8.3h1v-8.3zM443,853.5v-7.3h1v7.3zM443,904.7v10.3h1v-10.3zM445,853.5v-6.3h2v6.3zM445,904.7v8.3h2v-8.3zM448,853.5v-8.3h2v8.3zM448,904.7v10.3h2v-10.3zM451,853.5v-5.3h1v5.3zM451,904.7v9.3h1v-9.3zM454,853.5v-7.3h2v7.3zM454,904.7v10.3h2v-10.3zM457,853.5v-8.3h2v8.3zM457,904.7v5.3h2v-5.3zM460,853.5v-7.3h2v7.3zM460,904.7v9.3h2v-9.3zM463,853.5v-5.3h2v5.3zM463,904.7v9.3h2v-9.3zM466,853.5v-4.8h2v4.8zM466,904.7v9.3h2v-9.3zM469,853.5v-8.3h1v8.3zM469,904.7v9.3h1v-9.3zM471,853.5v-8.3h1v8.3zM471,904.7v9.3h1v-9.3zM473,853.5v-8.3h1v8.3zM473,904.7v8.3h1v-8.3zM475,853.5v-8.3h2v8.3zM475,904.7v10.3h2v-10.3zM478,853.5v-7.3h1v7.3zM478,904.7v10.3h1v-10.3zM480,853.5v-5.3h1v5.3zM480,904.7v8.3h1v-8.3zM483,853.5v-7.3h2v7.3zM483,904.7v10.3h2v-10.3zM486,853.5v-7.3h2v7.3zM486,904.7v4.8h2v-4.8zM489,853.5v-5.3h2v5.3zM489,904.7v10.3h2v-10.3zM492,853.5v-7.3h1v7.3zM492,904.7v9.3h1v-9.3zM494,853.5v-5.3h1v5.3zM494,904.7v9.3h1v-9.3zM496,853.5v-8.3h1v8.3zM496,904.7v9.3h1v-9.3zM498,853.5v-8.3h1v8.3zM498,904.7v10.3h1v-10.3zM500,853.5v-7.3h2v7.3zM500,904.7v8.3h2v-8.3zM503,853.5v-5.3h2v5.3zM503,904.7v9.3h2v-9.3zM506,853.5v-7.3h1v7.3zM506,904.7v8.3h1v-8.3zM508,853.5v-7.3h2v7.3zM508,904.7v8.3h2v-8.3zM511,853.5v-7.3h2v7.3zM511,904.7v10.3h2v-10.3zM514,853.5v-8.3h2v8.3zM514,904.7v8.3h2v-8.3zM517,853.5v-7.3h2v7.3zM517,904.7v8.3h2v-8.3zM520,853.5v-7.3h1v7.3zM520,904.7v10.3h1v-10.3zM522,853.5v-6.3h1v6.3zM522,904.7v10.3h1v-10.3zM524,853.5v-6.3h2v6.3zM524,904.7v10.3h2v-10.3zM527,853.5v-7.3h1v7.3zM527,904.7v10.3h1v-10.3zM529,853.5v-3.1h2v3.1zM529,904.7v8.3h2v-8.3zM532,853.5v-7.3h2v7.3zM532,904.7v9.3h2v-9.3zM535,853.5v-8.3h1v8.3zM535,904.7v9.3h1v-9.3zM537,853.5v-8.3h2v8.3zM537,904.7v10.3h2v-10.3zM540,853.5v-7.3h1v7.3zM540,904.7v10.3h1v-10.3zM542,853.5v-3.1h2v3.1zM542,904.7v10.3h2v-10.3zM545,853.5v-7.3h2v7.3zM545,904.7v10.3h2v-10.3zM548,853.5v-7.3h2v7.3zM548,904.7v9.3h2v-9.3zM551,853.5v-6.3h1v6.3zM551,904.7v8.3h1v-8.3zM554,853.5v-4.8h2v4.8zM554,904.7v10.3h2v-10.3zM557,853.5v-7.3h1v7.3zM557,904.7v10.3h1v-10.3zM559,853.5v-5.3h1v5.3zM559,904.7v8.3h1v-8.3zM561,853.5v-7.3h1v7.3zM561,904.7v10.3h1v-10.3zM563,853.5v-6.3h1v6.3zM563,904.7v9.3h1v-9.3zM565,853.5v-7.3h2v7.3zM565,904.7v9.3h2v-9.3zM568,853.5v-5.3h2v5.3zM568,904.7v9.3h2v-9.3zM571,853.5v-8.3h2v8.3zM571,904.7v10.3h2v-10.3zM574,853.5v-7.3h1v7.3zM574,904.7v9.3h1v-9.3zM576,853.5v-8.3h2v8.3zM576,904.7v7.3h2v-7.3zM579,853.5v-8.3h2v8.3zM579,904.7v9.3h2v-9.3zM582,853.5v-8.3h2v8.3zM582,904.7v9.3h2v-9.3zM585,853.5v-8.3h2v8.3zM585,904.7v7.3h2v-7.3zM588,853.5v-6.3h2v6.3zM588,904.7v10.3h2v-10.3zM591,853.5v-6.3h1v6.3zM591,904.7v10.3h1v-10.3zM593,853.5v-8.3h1v8.3zM593,904.7v10.3h1v-10.3zM595,853.5v-6.3h2v6.3zM595,904.7v9.3h2v-9.3zM598,853.5v-5.3h1v5.3zM598,904.7v7.3h1v-7.3zM600,853.5v-8.3h2v8.3zM600,904.7v5.9h2v-5.9zM603,853.5v-6.3h1v6.3zM603,904.7v8.3h1v-8.3zM605,853.5v-7.3h1v7.3zM605,904.7v9.3h1v-9.3zM607,853.5v-7.3h2v7.3zM607,904.7v8.3h2v-8.3zM610,853.5v-7.3h2v7.3zM610,904.7v9.3h2v-9.3zM613,853.5v-7.3h1v7.3zM613,904.7v7.3h1v-7.3zM615,853.5v-8.3h1v8.3zM615,904.7v10.3h1v-10.3zM617,853.5v-8.3h1v8.3zM617,904.7v9.3h1v-9.3zM619,853.5v-8.3h1v8.3zM619,904.7v10.3h1v-10.3zM621,853.5v-8.3h2v8.3zM621,904.7v7.3h2v-7.3zM624,853.5v-8.3h1v8.3zM624,904.7v9.3h1v-9.3zM626,853.5v-8.3h2v8.3zM626,904.7v10.3h2v-10.3zM630,853.5v-7.3h1v7.3zM630,904.7v10.3h1v-10.3zM632,853.5v-8.3h1v8.3zM632,904.7v8.3h1v-8.3zM634,853.5v-7.3h1v7.3zM634,904.7v9.3h1v-9.3zM636,853.5v-7.3h1v7.3zM636,904.7v9.3h1v-9.3zM638,853.5v-7.3h2v7.3zM638,904.7v5.3h2v-5.3zM641,853.5v-7.3h2v7.3zM641,904.7v10.3h2v-10.3zM644,853.5v-3.7h2v3.7zM644,904.7v10.3h2v-10.3zM647,853.5v-6.3h2v6.3zM647,904.7v9.3h2v-9.3zM650,853.5v-6.3h2v6.3zM650,904.7v8.3h2v-8.3zM653,853.5v-7.3h2v7.3zM653,904.7v10.3h2v-10.3zM656,853.5v-7.3h1v7.3zM656,904.7v10.3h1v-10.3zM658,853.5v-7.3h2v7.3zM658,904.7v10.3h2v-10.3zM661,853.5v-6.3h2v6.3zM661,904.7v8.3h2v-8.3zM664,853.5v-8.3h1v8.3zM664,904.7v10.3h1v-10.3zM666,853.5v-7.3h2v7.3zM666,904.7v10.3h2v-10.3zM669,853.5v-5.3h2v5.3zM669,904.7v9.3h2v-9.3zM672,853.5v-7.3h1v7.3zM672,904.7v5.9h1v-5.9zM674,853.5v-7.3h1v7.3zM674,904.7v8.3h1v-8.3zM676,853.5v-6.3h2v6.3zM676,904.7v8.3h2v-8.3zM679,853.5v-8.3h1v8.3zM679,904.7v8.3h1v-8.3zM681,853.5v-5.3h2v5.3zM681,904.7v10.3h2v-10.3zM684,853.5v-7.3h2v7.3zM684,904.7v5.3h2v-5.3zM687,853.5v-8.3h2v8.3zM687,904.7v7.3h2v-7.3zM690,853.5v-8.3h2v8.3zM690,904.7v8.3h2v-8.3zM693,853.5v-8.3h2v8.3zM693,904.7v9.3h2v-9.3zM696,853.5v-8.3h2v8.3zM696,904.7v8.3h2v-8.3zM699,853.5v-8.3h2v8.3zM699,904.7v10.3h2v-10.3zM702,853.5v-8.3h2v8.3zM702,904.7v8.3h2v-8.3zM705,853.5v-7.3h2v7.3zM705,904.7v9.3h2v-9.3zM708,853.5v-7.3h1v7.3zM708,904.7v9.3h1v-9.3zM710,853.5v-4.2h2v4.2zM710,904.7v10.3h2v-10.3zM713,853.5v-5.3h1v5.3zM713,904.7v10.3h1v-10.3zM715,853.5v-6.3h2v6.3zM715,904.7v10.3h2v-10.3zM719,853.5v-7.3h2v7.3zM719,904.7v7.3h2v-7.3zM722,853.5v-4.8h2v4.8zM722,904.7v9.3h2v-9.3zM725,853.5v-7.3h2v7.3zM725,904.7v9.3h2v-9.3zM728,853.5v-7.3h1v7.3zM728,904.7v8.3h1v-8.3zM730,853.5v-7.3h1v7.3zM730,904.7v9.3h1v-9.3zM732,853.5v-8.3h1v8.3zM732,904.7v8.3h1v-8.3zM734,853.5v-7.3h2v7.3zM734,904.7v10.3h2v-10.3zM737,853.5v-7.3h2v7.3zM737,904.7v10.3h2v-10.3zM740,853.5v-5.3h1v5.3zM740,904.7v8.3h1v-8.3zM742,853.5v-8.3h1v8.3zM742,904.7v4.8h1v-4.8zM744,853.5v-7.3h1v7.3zM744,904.7v7.3h1v-7.3zM746,853.5v-7.3h1v7.3zM746,904.7v7.3h1v-7.3zM748,853.5v-7.3h2v7.3zM748,904.7v10.3h2v-10.3zM751,853.5v-7.3h1v7.3zM751,904.7v10.3h1v-10.3zM753,853.5v-6.3h1v6.3zM753,904.7v4.8h1v-4.8zM755,853.5v-6.3h1v6.3zM755,904.7v8.3h1v-8.3zM757,853.5v-7.3h1v7.3zM757,904.7v9.3h1v-9.3zM759,853.5v-6.3h2v6.3zM759,904.7v9.3h2v-9.3zM762,853.5v-8.3h1v8.3zM762,904.7v7.3h1v-7.3zM764,853.5v-5.3h2v5.3zM764,904.7v9.3h2v-9.3zM767,853.5v-8.3h2v8.3zM767,904.7v10.3h2v-10.3zM770,853.5v-8.3h2v8.3zM770,904.7v8.3h2v-8.3zM773,853.5v-7.3h1v7.3zM773,904.7v8.3h1v-8.3zM775,853.5v-8.3h1v8.3zM775,904.7v10.3h1v-10.3zM777,853.5v-4.8h2v4.8zM777,904.7v10.3h2v-10.3zM780,853.5v-8.3h2v8.3zM780,904.7v9.3h2v-9.3zM783,853.5v-8.3h2v8.3zM783,904.7v9.3h2v-9.3zM786,853.5v-5.3h1v5.3zM786,904.7v9.3h1v-9.3zM788,853.5v-4.8h1v4.8zM788,904.7v9.3h1v-9.3zM790,853.5v-6.3h2v6.3zM790,904.7v9.3h2v-9.3zM793,853.5v-6.3h2v6.3zM793,904.7v8.3h2v-8.3zM796,853.5v-6.3h1v6.3zM796,904.7v10.3h1v-10.3zM798,853.5v-7.3h1v7.3zM798,904.7v10.3h1v-10.3zM800,853.5v-7.3h2v7.3zM800,904.7v5.3h2v-5.3zM803,853.5v-8.3h1v8.3zM803,904.7v8.3h1v-8.3zM805,853.5v-5.3h2v5.3zM805,904.7v10.3h2v-10.3zM808,853.5v-7.3h2v7.3zM808,904.7v10.3h2v-10.3zM811,853.5v-5.3h2v5.3zM811,904.7v9.3h2v-9.3zM814,853.5v-5.3h1v5.3zM814,904.7v8.3h1v-8.3zM816,853.5v-7.3h2v7.3zM816,904.7v7.3h2v-7.3zM819,853.5v-6.3h2v6.3zM819,904.7v7.3h2v-7.3zM822,853.5v-4.2h2v4.2zM822,904.7v8.3h2v-8.3zM825,853.5v-7.3h1v7.3zM825,904.7v8.3h1v-8.3zM827,853.5v-7.3h1v7.3zM827,904.7v8.3h1v-8.3zM829,853.5v-6.3h2v6.3zM829,904.7v9.3h2v-9.3zM832,853.5v-8.3h2v8.3zM832,904.7v10.3h2v-10.3zM835,853.5v-4.8h1v4.8zM835,904.7v10.3h1v-10.3zM837,853.5v-7.3h2v7.3zM837,904.7v10.3h2v-10.3zM840,853.5v-7.3h2v7.3zM840,904.7v10.3h2v-10.3zM843,853.5v-6.3h1v6.3zM843,904.7v9.3h1v-9.3zM845,853.5v-6.3h2v6.3zM845,904.7v7.3h2v-7.3zM848,853.5v-8.3h2v8.3zM848,904.7v8.3h2v-8.3zM851,853.5v-7.3h2v7.3zM851,904.7v7.3h2v-7.3zM854,853.5v-8.3h2v8.3zM854,904.7v9.3h2v-9.3zM857,853.5v-8.3h2v8.3zM857,904.7v9.3h2v-9.3zM860,853.5v-7.3h2v7.3zM860,904.7v9.3h2v-9.3zM863,853.5v-8.3h1v8.3zM863,904.7v9.3h1v-9.3zM865,853.5v-7.3h2v7.3zM865,904.7v9.3h2v-9.3zM868,853.5v-7.3h2v7.3zM868,904.7v8.3h2v-8.3zM871,853.5v-5.3h1v5.3zM871,904.7v8.3h1v-8.3zM873,853.5v-6.3h2v6.3zM873,904.7v9.3h2v-9.3zM876,853.5v-6.3h1v6.3zM876,904.7v5.3h1v-5.3zM878,853.5v-8.3h1v8.3zM878,904.7v8.3h1v-8.3zM880,853.5v-5.3h1v5.3zM880,904.7v5.9h1v-5.9zM882,853.5v-8.3h2v8.3zM882,904.7v7.3h2v-7.3zM885,853.5v-7.3h2v7.3zM885,904.7v8.3h2v-8.3zM888,853.5v-7.3h2v7.3zM888,904.7v8.3h2v-8.3zM891,853.5v-5.3h1v5.3zM891,904.7v10.3h1v-10.3zM893,853.5v-8.3h1v8.3zM893,904.7v7.3h1v-7.3zM895,853.5v-4.8h1v4.8zM895,904.7v10.3h1v-10.3zM897,853.5v-7.3h2v7.3zM897,904.7v7.3h2v-7.3zM900,853.5v-7.3h1v7.3zM900,904.7v8.3h1v-8.3zM903,853.5v-7.3h2v7.3zM903,904.7v10.3h2v-10.3zM906,853.5v-8.3h1v8.3zM906,904.7v9.3h1v-9.3zM908,853.5v-5.3h1v5.3zM908,904.7v4.2h1v-4.2zM910,853.5v-7.3h1v7.3zM910,904.7v8.3h1v-8.3zM912,853.5v-3.7h2v3.7zM912,904.7v9.3h2v-9.3zM915,853.5v-8.3h2v8.3zM915,904.7v10.3h2v-10.3zM918,853.5v-8.3h2v8.3zM918,904.7v10.3h2v-10.3zM921,853.5v-4.8h1v4.8zM921,904.7v9.3h1v-9.3zM923,853.5v-5.3h1v5.3zM923,904.7v10.3h1v-10.3zM925,853.5v-7.3h2v7.3zM925,904.7v9.3h2v-9.3zM928,853.5v-6.3h2v6.3zM928,904.7v10.3h2v-10.3zM931,853.5v-7.3h2v7.3zM931,904.7v8.3h2v-8.3zM934,853.5v-7.3h2v7.3zM934,904.7v10.3h2v-10.3zM937,853.5v-7.3h1v7.3zM937,904.7v8.3h1v-8.3zM939,853.5v-7.3h1v7.3zM939,904.7v10.3h1v-10.3zM941,853.5v-5.3h2v5.3zM941,904.7v9.3h2v-9.3zM944,853.5v-6.3h2v6.3zM944,904.7v10.3h2v-10.3zM948,853.5v-8.3h2v8.3zM948,904.7v10.3h2v-10.3zM951,853.5v-6.3h2v6.3zM951,904.7v8.3h2v-8.3zM954,853.5v-8.3h1v8.3zM954,904.7v7.3h1v-7.3zM956,853.5v-8.3h2v8.3zM956,904.7v9.3h2v-9.3zM959,853.5v-4.2h2v4.2zM959,904.7v10.3h2v-10.3zM962,853.5v-6.3h1v6.3zM962,904.7v9.3h1v-9.3zM965,853.5v-8.3h2v8.3zM965,904.7v9.3h2v-9.3zM968,853.5v-8.3h2v8.3zM968,904.7v7.3h2v-7.3zM971,853.5v-7.3h1v7.3zM971,904.7v4.8h1v-4.8zM973,853.5v-8.3h2v8.3zM973,904.7v9.3h2v-9.3zM976,853.5v-7.3h1v7.3zM976,904.7v4.8h1v-4.8zM978,853.5v-8.3h1v8.3zM978,904.7v8.3h1v-8.3zM981,853.5v-5.3h2v5.3zM981,904.7v9.3h2v-9.3zM984,853.5v-8.3h1v8.3zM984,904.7v7.3h1v-7.3zM986,853.5v-6.3h1v6.3zM986,904.7v10.3h1v-10.3zM988,853.5v-7.3h1v7.3zM988,904.7v8.3h1v-8.3zM990,853.5v-5.3h1v5.3zM990,904.7v8.3h1v-8.3zM992,853.5v-6.3h2v6.3zM992,904.7v10.3h2v-10.3zM995,853.5v-7.3h1v7.3zM995,904.7v7.3h1v-7.3zM997,853.5v-8.3h1v8.3zM997,904.7v8.3h1v-8.3zM999,853.5v-6.3h1v6.3zM999,904.7v10.3h1v-10.3zM1001,853.5v-7.3h2v7.3zM1001,904.7v7.3h2v-7.3zM1004,853.5v-5.3h1v5.3zM1004,904.7v10.3h1v-10.3zM1006,853.5v-8.3h1v8.3zM1006,904.7v9.3h1v-9.3zM1008,853.5v-7.3h2v7.3zM1008,904.7v9.3h2v-9.3zM1011,853.5v-8.3h2v8.3zM1011,904.7v10.3h2v-10.3zM1014,853.5v-4.8h2v4.8zM1014,904.7v9.3h2v-9.3zM1017,853.5v-7.3h1v7.3zM1017,904.7v10.3h1v-10.3zM1019,853.5v-8.3h2v8.3zM1019,904.7v9.3h2v-9.3zM1022,853.5v-8.3h1v8.3zM1022,904.7v8.3h1v-8.3zM1024,853.5v-8.3h1v8.3zM1024,904.7v8.3h1v-8.3zM1026,853.5v-8.3h2v8.3zM1026,904.7v9.3h2v-9.3zM1029,853.5v-5.3h2v5.3zM1029,904.7v9.3h2v-9.3zM1032,853.5v-8.3h1v8.3zM1032,904.7v8.3h1v-8.3zM1034,853.5v-8.3h2v8.3zM1034,904.7v8.3h2v-8.3zM1037,853.5v-7.3h2v7.3zM1037,904.7v5.9h2v-5.9zM1040,853.5v-8.3h2v8.3zM1040,904.7v8.3h2v-8.3zM1043,853.5v-5.3h1v5.3zM1043,904.7v10.3h1v-10.3zM1045,853.5v-6.3h1v6.3zM1045,904.7v10.3h1v-10.3zM1047,853.5v-7.3h2v7.3zM1047,904.7v8.3h2v-8.3zM1050,853.5v-4.2h2v4.2zM1050,904.7v9.3h2v-9.3zM1053,853.5v-8.3h1v8.3zM1053,904.7v9.3h1v-9.3zM1055,853.5v-6.3h2v6.3zM1055,904.7v8.3h2v-8.3zM1058,853.5v-8.3h2v8.3zM1058,904.7v7.3h2v-7.3zM1061,853.5v-7.3h2v7.3zM1061,904.7v9.3h2v-9.3zM1064,853.5v-8.3h2v8.3zM1064,904.7v9.3h2v-9.3zM1067,853.5v-8.3h2v8.3zM1067,904.7v10.3h2v-10.3zM1070,853.5v-8.3h2v8.3zM1070,904.7v10.3h2v-10.3zM1073,853.5v-8.3h2v8.3zM1073,904.7v10.3h2v-10.3zM1076,853.5v-6.3h1v6.3zM1076,904.7v10.3h1v-10.3zM1078,853.5v-7.3h2v7.3zM1078,904.7v10.3h2v-10.3zM1081,853.5v-7.3h2v7.3zM1081,904.7v9.3h2v-9.3zM1084,853.5v-7.3h2v7.3zM1084,904.7v9.3h2v-9.3zM1087,853.5v-3.1h1v3.1zM1087,904.7v10.3h1v-10.3zM1089,853.5v-8.3h2v8.3zM1089,904.7v9.3h2v-9.3zM1092,853.5v-8.3h2v8.3zM1092,904.7v8.3h2v-8.3zM1095,853.5v-6.3h2v6.3zM1095,904.7v10.3h2v-10.3zM1098,853.5v-7.3h1v7.3zM1098,904.7v9.3h1v-9.3zM1100,853.5v-6.3h1v6.3zM1100,904.7v9.3h1v-9.3zM1102,853.5v-6.3h2v6.3zM1102,904.7v9.3h2v-9.3zM1105,853.5v-6.3h2v6.3zM1105,904.7v8.3h2v-8.3zM1108,853.5v-7.3h2v7.3zM1108,904.7v8.3h2v-8.3zM1111,853.5v-6.3h2v6.3zM1111,904.7v8.3h2v-8.3zM1114,853.5v-8.3h1v8.3zM1114,904.7v10.3h1v-10.3zM1116,853.5v-6.3h1v6.3zM1116,904.7v9.3h1v-9.3zM1118,853.5v-5.3h2v5.3zM1118,904.7v9.3h2v-9.3zM1121,853.5v-8.3h2v8.3zM1121,904.7v10.3h2v-10.3zM1125,853.5v-5.3h1v5.3zM1125,904.7v10.3h1v-10.3zM1127,853.5v-8.3h1v8.3zM1127,904.7v8.3h1v-8.3zM1129,853.5v-7.3h2v7.3zM1129,904.7v10.3h2v-10.3zM1132,853.5v-8.3h1v8.3zM1132,904.7v10.3h1v-10.3z" fill="#20bbc2" shape-rendering="crispEdges"/><path d="M1128,853.0 L1128,846.2 L1129,847.1 L1130,847.2 L1131,847.1 L1132,847.6 L1133,845.6 L1134,843.5 L1135,847.0 L1136,846.8 L1137,845.7 L1138,846.2 L1139,845.6 L1140,845.0 L1141,845.1 L1142,846.1 L1143,845.8 L1144,847.1 L1145,846.4 L1146,845.4 L1147,845.0 L1148,846.0 L1149,841.3 L1150,845.7 L1151,844.8 L1152,844.3 L1153,846.8 L1154,845.7 L1155,845.9 L1156,845.2 L1157,843.5 L1158,845.4 L1159,846.5 L1160,847.0 L1161,846.6 L1162,846.1 L1163,841.6 L1164,843.9 L1165,845.0 L1166,845.1 L1167,840.4 L1168,842.4 L1169,842.9 L1170,842.6 L1171,845.6 L1172,842.3 L1173,842.9 L1174,845.1 L1175,845.1 L1176,844.4 L1177,844.5 L1178,844.1 L1179,845.1 L1180,843.5 L1181,843.5 L1182,844.2 L1183,842.3 L1184,843.7 L1185,844.2 L1186,845.1 L1187,844.0 L1188,840.1 L1189,843.2 L1190,843.1 L1191,842.5 L1192,842.9 L1193,843.9 L1194,844.9 L1195,844.2 L1196,844.8 L1197,842.4 L1198,843.2 L1199,844.6 L1200,843.9 L1201,842.8 L1202,844.2 L1203,845.1 L1204,843.1 L1205,845.2 L1206,844.9 L1207,844.4 L1208,841.9 L1209,842.3 L1210,843.7 L1211,845.1 L1212,844.9 L1213,843.4 L1214,844.8 L1215,843.0 L1216,844.6 L1217,843.3 L1218,844.0 L1219,845.1 L1220,845.6 L1221,843.8 L1222,843.6 L1223,843.0 L1224,843.3 L1225,845.2 L1226,843.4 L1227,843.8 L1228,846.1 L1229,845.8 L1230,845.8 L1231,845.6 L1232,844.8 L1233,846.4 L1234,843.8 L1235,844.8 L1236,844.5 L1237,845.4 L1238,843.7 L1239,845.2 L1240,845.8 L1241,841.5 L1242,843.8 L1243,846.2 L1244,844.8 L1245,846.6 L1246,843.8 L1247,844.7 L1248,843.2 L1249,844.4 L1250,845.8 L1251,844.2 L1252,844.4 L1253,846.3 L1254,844.9 L1255,846.7 L1256,846.2 L1257,846.3 L1258,844.4 L1259,845.9 L1260,844.5 L1261,845.6 L1262,844.8 L1263,845.6 L1264,847.3 L1265,845.6 L1266,847.0 L1267,845.2 L1268,845.2 L1269,846.8 L1270,847.2 L1271,846.5 L1272,847.8 L1273,846.4 L1274,846.2 L1275,845.3 L1276,845.1 L1277,846.2 L1278,846.0 L1279,847.0 L1280,845.7 L1281,846.0 L1282,847.3 L1283,847.8 L1284,846.8 L1285,848.8 L1286,847.8 L1287,848.5 L1288,846.2 L1289,848.2 L1290,847.0 L1291,847.8 L1292,845.8 L1293,848.7 L1294,848.3 L1295,847.9 L1296,847.0 L1297,847.3 L1298,847.1 L1299,844.4 L1300,848.1 L1301,846.8 L1302,847.3 L1303,847.2 L1304,848.4 L1305,849.0 L1306,847.7 L1307,848.1 L1308,844.3 L1309,847.2 L1310,846.7 L1311,848.7 L1312,847.5 L1313,847.8 L1314,846.4 L1315,846.6 L1316,845.8 L1317,846.4 L1318,848.1 L1319,847.5 L1320,845.7 L1321,845.9 L1322,847.5 L1323,845.7 L1324,845.3 L1325,845.6 L1326,844.2 L1327,843.2 L1328,845.5 L1329,843.8 L1330,845.0 L1331,847.4 L1332,847.5 L1333,844.2 L1334,847.5 L1335,846.7 L1336,843.2 L1337,846.6 L1338,846.6 L1339,844.9 L1340,846.8 L1341,847.7 L1342,843.7 L1343,847.8 L1344,845.9 L1345,845.6 L1346,847.1 L1347,844.9 L1348,846.3 L1349,846.8 L1350,845.5 L1351,844.3 L1352,845.7 L1353,844.9 L1354,844.3 L1355,845.2 L1356,845.4 L1357,845.6 L1358,844.7 L1359,844.5 L1360,844.9 L1361,847.3 L1362,845.2 L1363,846.3 L1364,844.6 L1365,844.6 L1366,846.2 L1367,847.2 L1368,843.8 L1369,844.5 L1370,844.6 L1371,844.3 L1372,845.3 L1373,846.0 L1374,844.7 L1375,845.0 L1376,845.0 L1377,843.7 L1378,847.5 L1379,844.6 L1380,844.4 L1381,847.3 L1382,845.6 L1383,845.6 L1384,846.5 L1385,844.4 L1386,843.8 L1387,843.1 L1388,841.9 L1389,844.5 L1390,845.9 L1391,846.3 L1392,843.2 L1393,845.4 L1394,847.0 L1395,845.8 L1396,843.1 L1397,845.8 L1398,846.5 L1399,843.6 L1400,846.3 L1401,847.0 L1402,846.7 L1403,845.1 L1404,845.7 L1405,847.6 L1406,846.1 L1407,846.7 L1408,845.7 L1409,842.6 L1410,843.2 L1411,845.2 L1412,845.7 L1413,846.5 L1414,845.9 L1415,846.0 L1416,845.5 L1417,845.2 L1418,844.0 L1419,846.2 L1420,845.0 L1421,842.8 L1422,846.6 L1423,847.1 L1424,847.4 L1425,847.4 L1426,847.0 L1427,845.2 L1428,845.8 L1429,845.4 L1430,846.7 L1431,846.0 L1432,845.1 L1433,847.4 L1434,847.6 L1435,845.7 L1436,847.1 L1437,843.0 L1438,843.7 L1439,845.3 L1440,845.2 L1441,847.4 L1442,846.4 L1443,844.7 L1444,846.6 L1445,842.7 L1446,845.0 L1447,845.6 L1448,845.2 L1449,845.4 L1450,845.1 L1451,845.6 L1452,846.4 L1453,844.5 L1454,842.2 L1455,843.9 L1456,845.4 L1457,845.9 L1458,845.9 L1459,846.6 L1460,844.4 L1461,844.6 L1462,844.2 L1463,846.4 L1464,845.0 L1465,846.3 L1466,844.1 L1467,843.9 L1468,844.0 L1469,842.6 L1470,844.0 L1471,844.0 L1472,845.2 L1473,844.4 L1474,842.5 L1475,845.8 L1476,844.0 L1477,845.9 L1478,844.7 L1479,845.3 L1480,844.4 L1481,846.4 L1482,845.1 L1483,846.0 L1484,843.4 L1485,847.2 L1486,844.9 L1487,847.3 L1488,847.1 L1489,847.3 L1490,846.6 L1491,847.4 L1492,846.6 L1493,844.6 L1494,847.0 L1495,846.5 L1496,847.1 L1497,845.2 L1498,844.9 L1499,842.8 L1500,845.0 L1501,846.5 L1502,843.8 L1503,847.2 L1504,844.7 L1505,843.3 L1506,847.2 L1507,847.6 L1508,847.2 L1509,845.0 L1510,845.2 L1511,847.0 L1512,847.8 L1513,846.2 L1514,845.3 L1515,845.2 L1516,846.3 L1517,845.0 L1518,845.5 L1519,846.7 L1520,847.7 L1521,843.4 L1522,844.8 L1523,845.2 L1524,844.9 L1525,845.2 L1526,844.3 L1527,846.7 L1528,846.6 L1529,847.3 L1530,846.5 L1531,845.7 L1532,845.1 L1533,846.4 L1534,847.9 L1535,845.4 L1536,845.7 L1537,846.1 L1538,847.7 L1539,845.6 L1540,846.8 L1541,845.4 L1542,845.2 L1543,843.2 L1544,846.0 L1545,844.1 L1546,846.3 L1547,844.3 L1548,845.9 L1549,845.4 L1550,845.8 L1551,844.7 L1552,845.4 L1553,846.0 L1554,844.9 L1555,847.0 L1556,843.4 L1557,844.0 L1558,844.1 L1559,847.4 L1560,846.0 L1561,846.2 L1562,845.5 L1563,847.0 L1564,846.8 L1565,845.5 L1566,846.2 L1567,844.2 L1568,845.0 L1569,845.4 L1570,846.4 L1571,846.4 L1572,845.8 L1573,843.8 L1574,844.4 L1575,845.9 L1576,844.9 L1577,846.4 L1578,843.1 L1579,846.2 L1580,845.4 L1581,844.9 L1582,844.6 L1583,845.6 L1584,844.4 L1585,842.1 L1586,846.2 L1587,846.4 L1588,844.0 L1589,843.6 L1590,844.5 L1591,845.7 L1592,844.5 L1593,844.4 L1594,842.7 L1595,844.5 L1596,844.3 L1597,846.6 L1598,846.1 L1599,843.0 L1600,845.6 L1601,844.5 L1602,846.1 L1603,845.2 L1604,846.7 L1605,846.5 L1606,844.6 L1607,844.1 L1608,845.3 L1609,844.1 L1610,845.3 L1611,846.6 L1612,845.9 L1613,846.3 L1614,843.9 L1615,845.0 L1616,847.1 L1617,845.6 L1618,845.7 L1619,846.6 L1620,846.0 L1621,845.5 L1622,845.4 L1623,847.1 L1624,844.1 L1625,843.2 L1626,845.3 L1627,845.1 L1628,847.4 L1629,846.5 L1630,844.7 L1631,845.6 L1632,846.1 L1633,845.5 L1634,845.9 L1635,846.6 L1636,846.9 L1637,845.2 L1638,846.5 L1639,844.5 L1640,844.5 L1641,846.0 L1642,845.1 L1643,844.9 L1644,844.6 L1645,844.1 L1646,845.7 L1647,845.6 L1648,844.7 L1649,846.8 L1650,846.2 L1651,846.7 L1652,847.7 L1653,846.1 L1654,847.3 L1655,844.6 L1656,847.3 L1657,844.4 L1658,844.3 L1659,845.3 L1660,845.6 L1661,846.2 L1662,845.2 L1663,846.0 L1664,846.7 L1665,844.6 L1666,845.4 L1667,845.9 L1668,844.2 L1669,843.9 L1670,844.5 L1671,847.0 L1672,844.4 L1673,845.0 L1674,845.1 L1675,845.3 L1676,847.4 L1677,845.3 L1678,844.5 L1679,847.3 L1680,845.5 L1681,845.4 L1682,845.6 L1683,846.6 L1684,846.3 L1685,846.4 L1686,847.2 L1687,846.5 L1688,846.1 L1689,847.1 L1690,846.1 L1691,846.7 L1692,846.4 L1693,846.3 L1694,845.7 L1695,845.8 L1696,845.3 L1697,845.5 L1698,845.9 L1699,847.5 L1700,845.2 L1701,845.5 L1702,845.4 L1703,847.0 L1704,845.5 L1705,847.2 L1706,846.2 L1707,847.1 L1708,844.3 L1709,847.0 L1710,845.8 L1711,843.2 L1712,847.3 L1713,843.5 L1714,846.0 L1715,846.3 L1716,847.0 L1717,844.2 L1718,845.4 L1719,844.8 L1720,842.6 L1721,846.5 L1722,844.3 L1723,845.4 L1724,845.7 L1725,845.5 L1726,844.9 L1727,846.5 L1728,846.1 L1729,846.1 L1730,846.3 L1731,843.8 L1732,846.1 L1733,847.1 L1734,847.0 L1735,844.2 L1736,844.6 L1737,844.3 L1738,846.9 L1739,844.0 L1740,845.8 L1741,844.4 L1742,846.4 L1743,844.1 L1744,845.3 L1745,844.7 L1746,846.2 L1747,844.6 L1748,846.3 L1749,844.3 L1750,841.7 L1751,845.5 L1751,853.0 L1751,905.2 L1751,916.7 L1750,914.8 L1749,916.2 L1748,915.4 L1747,914.7 L1746,915.4 L1745,913.8 L1744,915.0 L1743,915.6 L1742,915.3 L1741,915.1 L1740,915.7 L1739,916.2 L1738,917.5 L1737,915.5 L1736,914.8 L1735,913.8 L1734,914.8 L1733,914.4 L1732,914.1 L1731,917.9 L1730,915.2 L1729,916.2 L1728,915.3 L1727,915.7 L1726,915.1 L1725,916.0 L1724,914.1 L1723,916.0 L1722,913.0 L1721,915.8 L1720,915.1 L1719,915.1 L1718,912.4 L1717,915.0 L1716,915.5 L1715,915.5 L1714,913.7 L1713,912.8 L1712,918.0 L1711,913.3 L1710,912.7 L1709,913.9 L1708,915.1 L1707,912.8 L1706,913.5 L1705,915.8 L1704,913.5 L1703,915.2 L1702,913.7 L1701,914.8 L1700,915.1 L1699,914.2 L1698,918.4 L1697,913.4 L1696,915.1 L1695,916.1 L1694,915.7 L1693,918.1 L1692,914.7 L1691,914.8 L1690,916.4 L1689,914.9 L1688,918.6 L1687,912.9 L1686,914.8 L1685,915.3 L1684,913.8 L1683,917.0 L1682,914.3 L1681,915.1 L1680,916.3 L1679,914.1 L1678,916.0 L1677,916.4 L1676,915.9 L1675,916.0 L1674,915.0 L1673,916.1 L1672,916.5 L1671,916.7 L1670,915.3 L1669,914.9 L1668,916.5 L1667,915.8 L1666,916.7 L1665,916.1 L1664,915.6 L1663,916.7 L1662,918.1 L1661,915.2 L1660,914.0 L1659,915.4 L1658,914.9 L1657,918.0 L1656,915.8 L1655,915.3 L1654,916.1 L1653,916.4 L1652,912.8 L1651,918.0 L1650,913.1 L1649,913.9 L1648,915.9 L1647,917.0 L1646,915.7 L1645,914.7 L1644,913.5 L1643,912.9 L1642,914.3 L1641,913.6 L1640,913.1 L1639,914.1 L1638,914.5 L1637,915.1 L1636,914.7 L1635,917.5 L1634,915.8 L1633,918.0 L1632,913.0 L1631,915.3 L1630,913.7 L1629,914.2 L1628,913.5 L1627,915.9 L1626,913.7 L1625,914.2 L1624,914.4 L1623,915.0 L1622,915.5 L1621,912.8 L1620,913.5 L1619,913.8 L1618,913.5 L1617,912.8 L1616,914.0 L1615,915.9 L1614,915.0 L1613,914.5 L1612,918.7 L1611,914.4 L1610,914.4 L1609,916.1 L1608,914.8 L1607,916.4 L1606,915.9 L1605,915.9 L1604,915.0 L1603,915.9 L1602,917.9 L1601,915.2 L1600,913.5 L1599,914.7 L1598,914.7 L1597,914.3 L1596,915.6 L1595,913.1 L1594,915.3 L1593,915.1 L1592,913.6 L1591,915.5 L1590,917.5 L1589,912.5 L1588,914.0 L1587,916.9 L1586,914.6 L1585,914.5 L1584,916.5 L1583,917.8 L1582,916.1 L1581,912.4 L1580,915.4 L1579,913.5 L1578,912.8 L1577,915.5 L1576,914.3 L1575,912.9 L1574,915.1 L1573,916.2 L1572,915.7 L1571,912.3 L1570,913.2 L1569,914.9 L1568,916.3 L1567,914.6 L1566,913.9 L1565,914.3 L1564,914.7 L1563,916.7 L1562,913.6 L1561,912.6 L1560,914.6 L1559,914.7 L1558,915.3 L1557,912.7 L1556,913.0 L1555,912.6 L1554,913.3 L1553,914.5 L1552,914.8 L1551,915.2 L1550,913.2 L1549,913.4 L1548,915.0 L1547,916.1 L1546,915.0 L1545,914.3 L1544,916.0 L1543,913.8 L1542,915.3 L1541,913.7 L1540,913.6 L1539,917.6 L1538,915.5 L1537,913.3 L1536,913.3 L1535,917.8 L1534,913.4 L1533,916.3 L1532,914.6 L1531,914.5 L1530,914.0 L1529,916.1 L1528,914.0 L1527,916.1 L1526,915.0 L1525,916.4 L1524,914.8 L1523,915.0 L1522,916.1 L1521,915.1 L1520,915.1 L1519,914.7 L1518,914.0 L1517,914.1 L1516,914.8 L1515,913.9 L1514,913.8 L1513,913.9 L1512,917.7 L1511,913.5 L1510,914.9 L1509,916.1 L1508,914.3 L1507,913.1 L1506,915.8 L1505,913.1 L1504,915.4 L1503,914.7 L1502,912.9 L1501,915.1 L1500,914.0 L1499,913.7 L1498,913.9 L1497,916.2 L1496,917.5 L1495,917.1 L1494,915.1 L1493,913.9 L1492,914.6 L1491,913.4 L1490,913.1 L1489,915.3 L1488,914.8 L1487,914.4 L1486,913.4 L1485,913.6 L1484,913.5 L1483,912.5 L1482,914.4 L1481,917.0 L1480,913.6 L1479,917.9 L1478,912.4 L1477,912.5 L1476,912.6 L1475,916.4 L1474,913.7 L1473,917.2 L1472,912.8 L1471,912.8 L1470,912.8 L1469,914.1 L1468,915.7 L1467,915.3 L1466,913.2 L1465,916.0 L1464,912.9 L1463,913.6 L1462,917.1 L1461,913.2 L1460,916.9 L1459,917.6 L1458,916.1 L1457,916.5 L1456,913.8 L1455,913.2 L1454,914.4 L1453,913.1 L1452,915.3 L1451,918.0 L1450,914.4 L1449,915.7 L1448,913.4 L1447,914.5 L1446,915.7 L1445,915.6 L1444,914.4 L1443,913.5 L1442,916.1 L1441,915.0 L1440,913.8 L1439,913.3 L1438,915.0 L1437,915.6 L1436,914.7 L1435,915.7 L1434,914.1 L1433,918.0 L1432,914.8 L1431,913.3 L1430,916.9 L1429,915.3 L1428,915.6 L1427,915.4 L1426,915.2 L1425,914.0 L1424,916.7 L1423,913.4 L1422,915.9 L1421,915.2 L1420,915.3 L1419,917.3 L1418,913.1 L1417,915.7 L1416,914.3 L1415,914.9 L1414,912.9 L1413,916.5 L1412,915.8 L1411,914.4 L1410,915.6 L1409,915.1 L1408,913.2 L1407,915.3 L1406,912.8 L1405,915.8 L1404,913.3 L1403,915.9 L1402,913.8 L1401,914.3 L1400,916.0 L1399,914.3 L1398,915.9 L1397,916.5 L1396,912.6 L1395,917.0 L1394,914.9 L1393,913.1 L1392,916.4 L1391,913.6 L1390,914.3 L1389,915.1 L1388,915.2 L1387,915.7 L1386,916.1 L1385,915.2 L1384,915.9 L1383,913.4 L1382,913.2 L1381,913.0 L1380,913.6 L1379,914.6 L1378,915.3 L1377,915.0 L1376,914.6 L1375,913.4 L1374,914.6 L1373,913.4 L1372,916.3 L1371,916.1 L1370,915.1 L1369,913.6 L1368,915.4 L1367,913.4 L1366,916.1 L1365,914.1 L1364,915.1 L1363,915.0 L1362,913.9 L1361,915.0 L1360,915.5 L1359,914.9 L1358,917.1 L1357,916.3 L1356,914.2 L1355,917.9 L1354,913.6 L1353,915.0 L1352,914.9 L1351,914.5 L1350,914.5 L1349,914.1 L1348,915.1 L1347,914.4 L1346,914.7 L1345,914.8 L1344,916.0 L1343,913.3 L1342,915.7 L1341,915.4 L1340,913.2 L1339,914.6 L1338,912.5 L1337,914.7 L1336,914.1 L1335,912.4 L1334,912.2 L1333,912.7 L1332,912.1 L1331,913.3 L1330,913.9 L1329,912.5 L1328,914.6 L1327,913.3 L1326,910.8 L1325,912.3 L1324,911.9 L1323,910.9 L1322,910.8 L1321,911.4 L1320,913.0 L1319,910.8 L1318,913.1 L1317,911.6 L1316,913.3 L1315,912.1 L1314,910.4 L1313,912.3 L1312,910.7 L1311,911.4 L1310,910.8 L1309,911.9 L1308,913.4 L1307,912.1 L1306,910.3 L1305,910.7 L1304,911.6 L1303,912.0 L1302,913.2 L1301,912.1 L1300,912.6 L1299,911.9 L1298,911.8 L1297,911.3 L1296,912.0 L1295,910.6 L1294,910.7 L1293,910.9 L1292,912.1 L1291,910.6 L1290,913.8 L1289,913.0 L1288,911.7 L1287,912.9 L1286,912.1 L1285,912.7 L1284,915.3 L1283,914.3 L1282,911.4 L1281,912.3 L1280,912.6 L1279,913.5 L1278,913.4 L1277,912.0 L1276,913.7 L1275,912.6 L1274,913.5 L1273,911.9 L1272,913.3 L1271,912.1 L1270,912.6 L1269,914.2 L1268,912.5 L1267,913.6 L1266,914.5 L1265,913.6 L1264,912.8 L1263,913.7 L1262,912.3 L1261,913.8 L1260,913.5 L1259,913.6 L1258,917.0 L1257,913.4 L1256,911.7 L1255,911.7 L1254,913.5 L1253,912.5 L1252,911.7 L1251,912.3 L1250,914.0 L1249,912.3 L1248,911.8 L1247,912.8 L1246,913.9 L1245,911.5 L1244,914.3 L1243,914.1 L1242,913.0 L1241,912.9 L1240,912.3 L1239,912.5 L1238,914.2 L1237,915.3 L1236,912.0 L1235,912.0 L1234,914.4 L1233,915.2 L1232,913.6 L1231,914.7 L1230,912.5 L1229,914.0 L1228,911.0 L1227,913.8 L1226,913.0 L1225,913.1 L1224,914.4 L1223,911.7 L1222,912.8 L1221,913.6 L1220,914.8 L1219,913.0 L1218,914.4 L1217,911.4 L1216,915.5 L1215,916.0 L1214,914.3 L1213,916.0 L1212,914.4 L1211,911.1 L1210,913.7 L1209,914.0 L1208,912.2 L1207,912.3 L1206,912.7 L1205,914.8 L1204,913.6 L1203,915.8 L1202,914.3 L1201,914.8 L1200,914.5 L1199,915.0 L1198,916.0 L1197,915.9 L1196,916.5 L1195,919.2 L1194,916.7 L1193,919.9 L1192,915.6 L1191,917.7 L1190,917.8 L1189,915.6 L1188,917.7 L1187,915.4 L1186,916.1 L1185,917.2 L1184,918.8 L1183,917.9 L1182,916.6 L1181,916.0 L1180,915.6 L1179,917.4 L1178,916.7 L1177,917.1 L1176,917.7 L1175,917.9 L1174,918.0 L1173,915.6 L1172,915.2 L1171,915.7 L1170,915.3 L1169,917.4 L1168,915.1 L1167,917.3 L1166,917.6 L1165,916.5 L1164,915.9 L1163,917.6 L1162,915.6 L1161,914.7 L1160,914.4 L1159,915.1 L1158,917.1 L1157,917.5 L1156,916.4 L1155,917.5 L1154,916.2 L1153,916.1 L1152,915.7 L1151,914.5 L1150,917.3 L1149,914.8 L1148,915.2 L1147,917.2 L1146,918.7 L1145,915.1 L1144,915.1 L1143,916.5 L1142,916.5 L1141,917.5 L1140,916.2 L1139,916.8 L1138,917.3 L1137,915.0 L1136,916.6 L1135,915.4 L1134,919.1 L1133,914.5 L1132,915.9 L1131,915.8 L1130,913.1 L1129,917.2 L1128,913.7 L1128,905.2Z" fill="#20bfc6" shape-rendering="crispEdges"/><rect x="1128" y="853.0" width="623" height="52.200000000000045" fill="#20bfc6"/><path d="M1373.8,849.2V911.0M1728.3,849.2V911.0M1677.8,849.2V911.0M1315.5,849.2V911.0M1516.3,849.2V911.0M1747.1,849.2V911.0M1385.2,849.2V911.0M1430.0,849.2V911.0M1354.1,849.2V911.0M1206.7,849.2V911.0M1565.9,849.2V911.0M1539.4,849.2V911.0M1639.5,849.2V911.0M1376.2,849.2V911.0M1174.8,849.2V911.0M1332.9,849.2V911.0M1201.8,849.2V911.0M1491.8,849.2V911.0M1608.2,849.2V911.0M1548.6,849.2V911.0M1452.4,849.2V911.0M1597.5,849.2V911.0M1138.3,849.2V911.0M1514.4,849.2V911.0M1599.3,849.2V911.0M1562.2,849.2V911.0M1163.2,849.2V911.0M1525.9,849.2V911.0M1574.6,849.2V911.0M1613.5,849.2V911.0M1525.2,849.2V911.0M1454.4,849.2V911.0M1486.5,849.2V911.0M1358.7,849.2V911.0M1367.3,849.2V911.0M1212.8,849.2V911.0M1669.8,849.2V911.0M1659.9,849.2V911.0M1508.9,849.2V911.0M1382.5,849.2V911.0M1476.9,849.2V911.0M1350.4,849.2V911.0M1213.7,849.2V911.0M1717.9,849.2V911.0M1501.8,849.2V911.0M1401.7,849.2V911.0M1296.0,849.2V911.0M1691.7,849.2V911.0M1738.2,849.2V911.0M1631.2,849.2V911.0M1639.6,849.2V911.0M1476.4,849.2V911.0M1398.7,849.2V911.0M1708.9,849.2V911.0M1464.8,849.2V911.0M1501.7,849.2V911.0M1193.2,849.2V911.0M1571.4,849.2V911.0M1194.6,849.2V911.0M1387.3,849.2V911.0M1502.4,849.2V911.0M1253.1,849.2V911.0M1460.8,849.2V911.0M1568.4,849.2V911.0M1616.3,849.2V911.0M1471.4,849.2V911.0M1539.7,849.2V911.0M1193.6,849.2V911.0M1251.1,849.2V911.0M1401.7,849.2V911.0M1183.6,849.2V911.0M1668.2,849.2V911.0M1584.9,849.2V911.0M1617.9,849.2V911.0M1582.8,849.2V911.0M1645.9,849.2V911.0M1536.9,849.2V911.0M1284.1,849.2V911.0M1681.1,849.2V911.0M1513.8,849.2V911.0M1221.6,849.2V911.0M1631.8,849.2V911.0M1452.2,849.2V911.0M1551.1,849.2V911.0M1591.6,849.2V911.0M1726.3,849.2V911.0M1467.6,849.2V911.0M1171.1,849.2V911.0M1673.0,849.2V911.0M1650.6,849.2V911.0M1494.6,849.2V911.0M1169.1,849.2V911.0M1177.7,849.2V911.0M1504.0,849.2V911.0M1634.3,849.2V911.0M1526.9,849.2V911.0M1518.7,849.2V911.0M1674.6,849.2V911.0M1426.2,849.2V911.0M1549.3,849.2V911.0M1271.5,849.2V911.0M1445.1,849.2V911.0M1606.4,849.2V911.0M1370.0,849.2V911.0M1403.2,849.2V911.0M1272.7,849.2V911.0M1190.6,849.2V911.0M1699.6,849.2V911.0M1643.1,849.2V911.0M1470.1,849.2V911.0M1741.3,849.2V911.0M1684.2,849.2V911.0M1189.1,849.2V911.0M1374.3,849.2V911.0M1686.5,849.2V911.0M1471.1,849.2V911.0M1465.8,849.2V911.0M1615.8,849.2V911.0M1294.1,849.2V911.0M1350.2,849.2V911.0M1601.4,849.2V911.0M1717.7,849.2V911.0M1701.0,849.2V911.0M1566.4,849.2V911.0M1501.1,849.2V911.0M1177.7,849.2V911.0M1474.0,849.2V911.0M1284.9,849.2V911.0M1579.5,849.2V911.0M1248.9,849.2V911.0M1230.1,849.2V911.0M1537.8,849.2V911.0M1488.6,849.2V911.0M1373.6,849.2V911.0M1588.2,849.2V911.0M1671.6,849.2V911.0M1259.4,849.2V911.0M1390.1,849.2V911.0M1718.6,849.2V911.0M1517.1,849.2V911.0M1396.8,849.2V911.0M1329.2,849.2V911.0M1235.0,849.2V911.0M1333.4,849.2V911.0M1178.6,849.2V911.0M1723.8,849.2V911.0M1223.3,849.2V911.0M1573.8,849.2V911.0M1715.6,849.2V911.0M1289.4,849.2V911.0M1236.9,849.2V911.0M1732.9,849.2V911.0M1440.8,849.2V911.0M1418.8,849.2V911.0M1271.1,849.2V911.0M1473.6,849.2V911.0M1649.7,849.2V911.0M1735.4,849.2V911.0M1723.1,849.2V911.0M1332.5,849.2V911.0M1475.6,849.2V911.0M1563.7,849.2V911.0M1410.7,849.2V911.0M1689.1,849.2V911.0M1234.3,849.2V911.0M1479.8,849.2V911.0M1534.8,849.2V911.0M1306.1,849.2V911.0M1229.2,849.2V911.0M1604.6,849.2V911.0M1734.2,849.2V911.0M1737.3,849.2V911.0M1694.7,849.2V911.0M1138.8,849.2V911.0M1356.3,849.2V911.0M1312.8,849.2V911.0M1230.8,849.2V911.0M1223.4,849.2V911.0M1632.3,849.2V911.0M1649.9,849.2V911.0M1749.9,849.2V911.0M1185.9,849.2V911.0M1632.7,849.2V911.0M1173.2,849.2V911.0M1452.1,849.2V911.0M1370.6,849.2V911.0M1342.3,849.2V911.0M1452.7,849.2V911.0M1444.9,849.2V911.0M1237.1,849.2V911.0M1246.9,849.2V911.0M1639.8,849.2V911.0M1402.7,849.2V911.0M1263.2,849.2V911.0M1697.2,849.2V911.0M1357.1,849.2V911.0M1644.6,849.2V911.0M1243.9,849.2V911.0M1455.1,849.2V911.0M1156.7,849.2V911.0M1386.5,849.2V911.0M1277.0,849.2V911.0M1374.7,849.2V911.0M1693.2,849.2V911.0M1338.5,849.2V911.0M1189.9,849.2V911.0M1331.2,849.2V911.0M1278.5,849.2V911.0M1498.8,849.2V911.0M1454.1,849.2V911.0M1258.2,849.2V911.0M1452.7,849.2V911.0M1698.0,849.2V911.0M1405.2,849.2V911.0M1536.3,849.2V911.0M1236.2,849.2V911.0M1414.6,849.2V911.0M1230.6,849.2V911.0M1258.5,849.2V911.0M1424.5,849.2V911.0M1645.9,849.2V911.0M1634.9,849.2V911.0M1560.6,849.2V911.0M1302.9,849.2V911.0M1537.3,849.2V911.0M1298.5,849.2V911.0M1509.4,849.2V911.0M1437.4,849.2V911.0M1171.5,849.2V911.0M1675.3,849.2V911.0M1677.8,849.2V911.0M1261.8,849.2V911.0M1403.6,849.2V911.0M1317.1,849.2V911.0M1294.6,849.2V911.0M1141.2,849.2V911.0M1187.3,849.2V911.0M1208.6,849.2V911.0M1696.6,849.2V911.0M1386.5,849.2V911.0M1238.1,849.2V911.0M1390.7,849.2V911.0M1371.3,849.2V911.0M1577.2,849.2V911.0M1157.9,849.2V911.0M1289.2,849.2V911.0M1692.4,849.2V911.0M1744.5,849.2V911.0M1399.9,849.2V911.0M1448.0,849.2V911.0M1745.0,849.2V911.0M1605.9,849.2V911.0M1488.9,849.2V911.0M1494.7,849.2V911.0M1138.8,849.2V911.0M1363.8,849.2V911.0M1606.2,849.2V911.0M1348.8,849.2V911.0M1306.9,849.2V911.0M1308.1,849.2V911.0" stroke="#199fa7" stroke-width="1" fill="none" opacity="0.5"/>
<g opacity="0.6">
<clipPath id="cb"><rect x="3" y="701" width="1748" height="72"/><rect x="3" y="846" width="1748" height="69"/></clipPath>
<g clip-path="url(#cb)">
<g stroke="#c8c8e0" stroke-width="1" opacity="1" shape-rendering="crispEdges"><line x1="11.58" y1="663.60" x2="1749.0" y2="663.60" stroke-dasharray="1 33.960"/><line x1="11.58" y1="680.40" x2="1749.0" y2="680.40" stroke-dasharray="1 33.960"/><line x1="11.58" y1="697.20" x2="1749.0" y2="697.20" stroke-dasharray="1 33.960"/><line x1="11.58" y1="714.00" x2="1749.0" y2="714.00" stroke-dasharray="1 33.960"/><line x1="11.58" y1="730.80" x2="1749.0" y2="730.80" stroke-dasharray="1 33.960"/><line x1="11.58" y1="747.60" x2="1749.0" y2="747.60" stroke-dasharray="1 33.960"/><line x1="11.58" y1="764.40" x2="1749.0" y2="764.40" stroke-dasharray="1 33.960"/><line x1="11.58" y1="781.20" x2="1749.0" y2="781.20" stroke-dasharray="1 33.960"/><line x1="11.58" y1="798.00" x2="1749.0" y2="798.00" stroke-dasharray="1 33.960"/><line x1="11.58" y1="814.80" x2="1749.0" y2="814.80" stroke-dasharray="1 33.960"/><line x1="3.50" y1="656.20" x2="3.50" y2="820.50" stroke-dasharray="1 2.360"/><line x1="82.00" y1="656.20" x2="82.00" y2="820.50" stroke-dasharray="1 2.360"/><line x1="256.80" y1="656.20" x2="256.80" y2="820.50" stroke-dasharray="1 2.360"/><line x1="431.60" y1="656.20" x2="431.60" y2="820.50" stroke-dasharray="1 2.360"/><line x1="606.40" y1="656.20" x2="606.40" y2="820.50" stroke-dasharray="1 2.360"/><line x1="781.20" y1="656.20" x2="781.20" y2="820.50" stroke-dasharray="1 2.360"/><line x1="956.00" y1="656.20" x2="956.00" y2="820.50" stroke-dasharray="1 2.360"/><line x1="1130.80" y1="656.20" x2="1130.80" y2="820.50" stroke-dasharray="1 2.360"/><line x1="1305.60" y1="656.20" x2="1305.60" y2="820.50" stroke-dasharray="1 2.360"/><line x1="1480.40" y1="656.20" x2="1480.40" y2="820.50" stroke-dasharray="1 2.360"/><line x1="1655.20" y1="656.20" x2="1655.20" y2="820.50" stroke-dasharray="1 2.360"/></g>
<g stroke="#c8c8e0" stroke-width="1" opacity="1" shape-rendering="crispEdges"><line x1="11.58" y1="823.80" x2="1749.0" y2="823.80" stroke-dasharray="1 33.960"/><line x1="11.58" y1="840.65" x2="1749.0" y2="840.65" stroke-dasharray="1 33.960"/><line x1="11.58" y1="857.50" x2="1749.0" y2="857.50" stroke-dasharray="1 33.960"/><line x1="11.58" y1="874.35" x2="1749.0" y2="874.35" stroke-dasharray="1 33.960"/><line x1="11.58" y1="891.20" x2="1749.0" y2="891.20" stroke-dasharray="1 33.960"/><line x1="11.58" y1="908.05" x2="1749.0" y2="908.05" stroke-dasharray="1 33.960"/><line x1="11.58" y1="924.90" x2="1749.0" y2="924.90" stroke-dasharray="1 33.960"/><line x1="11.58" y1="941.75" x2="1749.0" y2="941.75" stroke-dasharray="1 33.960"/><line x1="11.58" y1="958.60" x2="1749.0" y2="958.60" stroke-dasharray="1 33.960"/><line x1="11.58" y1="975.45" x2="1749.0" y2="975.45" stroke-dasharray="1 33.960"/><line x1="3.50" y1="827.20" x2="3.50" y2="976.50" stroke-dasharray="1 2.370"/><line x1="82.00" y1="827.20" x2="82.00" y2="976.50" stroke-dasharray="1 2.370"/><line x1="256.80" y1="827.20" x2="256.80" y2="976.50" stroke-dasharray="1 2.370"/><line x1="431.60" y1="827.20" x2="431.60" y2="976.50" stroke-dasharray="1 2.370"/><line x1="606.40" y1="827.20" x2="606.40" y2="976.50" stroke-dasharray="1 2.370"/><line x1="781.20" y1="827.20" x2="781.20" y2="976.50" stroke-dasharray="1 2.370"/><line x1="956.00" y1="827.20" x2="956.00" y2="976.50" stroke-dasharray="1 2.370"/><line x1="1130.80" y1="827.20" x2="1130.80" y2="976.50" stroke-dasharray="1 2.370"/><line x1="1305.60" y1="827.20" x2="1305.60" y2="976.50" stroke-dasharray="1 2.370"/><line x1="1480.40" y1="827.20" x2="1480.40" y2="976.50" stroke-dasharray="1 2.370"/><line x1="1655.20" y1="827.20" x2="1655.20" y2="976.50" stroke-dasharray="1 2.370"/></g>
</g></g>
<line x1="3" y1="764.6" x2="1722" y2="764.6" stroke="#b9b9b9" stroke-width="1.1" stroke-dasharray="5 5"/>
<line x1="40" y1="907.4" x2="1722" y2="907.4" stroke="#c4d4d4" stroke-width="1.1" stroke-dasharray="5 5"/>
<text x="1746" y="669.1" font-size="13.5" fill="#191700" text-anchor="end">6 V</text>
<text x="1745" y="668.1" font-size="13.5" fill="#fbee2c" text-anchor="end">6 V</text>
<text x="1746" y="685.9" font-size="13.5" fill="#191700" text-anchor="end">5 V</text>
<text x="1745" y="684.9" font-size="13.5" fill="#fbee2c" text-anchor="end">5 V</text>
<text x="1746" y="702.7" font-size="13.5" fill="#191700" text-anchor="end">4 V</text>
<text x="1745" y="701.7" font-size="13.5" fill="#fbee2c" text-anchor="end">4 V</text>
<text x="1746" y="719.5" font-size="13.5" fill="#191700" text-anchor="end">3 V</text>
<text x="1745" y="718.5" font-size="13.5" fill="#fbee2c" text-anchor="end">3 V</text>
<text x="1746" y="736.3" font-size="13.5" fill="#191700" text-anchor="end">2 V</text>
<text x="1745" y="735.3" font-size="13.5" fill="#fbee2c" text-anchor="end">2 V</text>
<text x="1746" y="753.1" font-size="13.5" fill="#191700" text-anchor="end">1 V</text>
<text x="1745" y="752.1" font-size="13.5" fill="#fbee2c" text-anchor="end">1 V</text>
<text x="1746" y="769.9" font-size="13.5" fill="#191700" text-anchor="end">0 V</text>
<text x="1745" y="768.9" font-size="13.5" fill="#fbee2c" text-anchor="end">0 V</text>
<text x="1746" y="786.7" font-size="13.5" fill="#191700" text-anchor="end">-1 V</text>
<text x="1745" y="785.7" font-size="13.5" fill="#fbee2c" text-anchor="end">-1 V</text>
<text x="1746" y="803.5" font-size="13.5" fill="#191700" text-anchor="end">-2 V</text>
<text x="1745" y="802.5" font-size="13.5" fill="#fbee2c" text-anchor="end">-2 V</text>
<text x="1746" y="846.1" font-size="13.5" fill="#001416" text-anchor="end">4 V</text>
<text x="1745" y="845.1" font-size="13.5" fill="#24c8d0" text-anchor="end">4 V</text>
<text x="1746" y="863.0" font-size="13.5" fill="#001416" text-anchor="end">3 V</text>
<text x="1745" y="862.0" font-size="13.5" fill="#24c8d0" text-anchor="end">3 V</text>
<text x="1746" y="879.8" font-size="13.5" fill="#001416" text-anchor="end">2 V</text>
<text x="1745" y="878.8" font-size="13.5" fill="#24c8d0" text-anchor="end">2 V</text>
<text x="1746" y="896.6" font-size="13.5" fill="#001416" text-anchor="end">1 V</text>
<text x="1745" y="895.6" font-size="13.5" fill="#24c8d0" text-anchor="end">1 V</text>
<text x="1746" y="913.5" font-size="13.5" fill="#001416" text-anchor="end">0 V</text>
<text x="1745" y="912.5" font-size="13.5" fill="#24c8d0" text-anchor="end">0 V</text>
<text x="1746" y="930.4" font-size="13.5" fill="#001416" text-anchor="end">-1 V</text>
<text x="1745" y="929.4" font-size="13.5" fill="#24c8d0" text-anchor="end">-1 V</text>
<text x="1746" y="947.2" font-size="13.5" fill="#001416" text-anchor="end">-2 V</text>
<text x="1745" y="946.2" font-size="13.5" fill="#24c8d0" text-anchor="end">-2 V</text>
<text x="1746" y="964.1" font-size="13.5" fill="#001416" text-anchor="end">-3 V</text>
<text x="1745" y="963.1" font-size="13.5" fill="#24c8d0" text-anchor="end">-3 V</text>
<text x="1746" y="980.9" font-size="13.5" fill="#001416" text-anchor="end">-4 V</text>
<text x="1745" y="979.9" font-size="13.5" fill="#24c8d0" text-anchor="end">-4 V</text>
<path d="M1729.5,737 L1740.5,728.5 L1742,734.6 H1751 V739.4 H1742 L1741.5,746 Z" fill="#fff34f" stroke="#5e5608" stroke-width="1.2"/>
<path d="M7.5,726 H30 L40.5,737 L30,748.5 H9 Q7.5,748.5 7.5,747 Z" fill="#1f1c04"/>
<text x="15" y="741.6" font-size="12" fill="#fff12a" textLength="17.5" lengthAdjust="spacingAndGlyphs">C 1</text>
<path d="M7.5,896 H30 L40.5,907 L30,918.5 H9 Q7.5,918.5 7.5,917 Z" fill="#052224" stroke="#1da5ad" stroke-width="0.8"/>
<text x="15" y="911.6" font-size="12" fill="#35dbe3" textLength="17.5" lengthAdjust="spacingAndGlyphs">C 2</text>
<rect x="853.5" y="803" width="47" height="18.3" fill="#3a3508" stroke="#fff12a" stroke-width="1"/>
<rect x="853.5" y="973.3" width="47" height="18" fill="#062a2c" stroke="#22c6cd" stroke-width="1"/>
<text x="81.5" y="986" font-size="13.5" fill="#c9c9c9" text-anchor="middle">288 ms</text>
<text x="256.3" y="986" font-size="13.5" fill="#c9c9c9" text-anchor="middle">289 ms</text>
<text x="431.1" y="986" font-size="13.5" fill="#c9c9c9" text-anchor="middle">290 ms</text>
<text x="605.9" y="986" font-size="13.5" fill="#c9c9c9" text-anchor="middle">291 ms</text>
<text x="780.7" y="986" font-size="13.5" fill="#c9c9c9" text-anchor="middle">292 ms</text>
<text x="955.5" y="986" font-size="13.5" fill="#c9c9c9" text-anchor="middle">293 ms</text>
<text x="1130.3" y="986" font-size="13.5" fill="#c9c9c9" text-anchor="middle">294 ms</text>
<text x="1305.1" y="986" font-size="13.5" fill="#c9c9c9" text-anchor="middle">295 ms</text>
<text x="1479.9" y="986" font-size="13.5" fill="#c9c9c9" text-anchor="middle">296 ms</text>
<text x="1654.7" y="986" font-size="13.5" fill="#c9c9c9" text-anchor="middle">297 ms</text>
<rect x="1769" y="26" width="151" height="969" fill="#2d2d2d"/>
<path d="M1769.5,994.5 V26.5" fill="none" stroke="#5a5a5c" stroke-width="1"/>
<path d="M1769,26.5 H1920" fill="none" stroke="#6a615c" stroke-width="1"/>
<path d="M1919.5,27 V994" fill="none" stroke="#878180" stroke-width="1"/>
<line x1="1769" y1="994.5" x2="1920" y2="994.5" stroke="#6a6664" stroke-width="1"/>
<text x="1845" y="40.8" font-size="14.5" fill="#fff" text-anchor="middle" font-weight="bold" textLength="77" lengthAdjust="spacingAndGlyphs">Add New...</text>
<rect x="1777.5" y="53.5" width="62" height="36" rx="6" fill="url(#gbtn)" stroke="#5d5753" stroke-width="1"/>
<text x="1808.5" y="75.5" font-size="14.5" fill="#f2f2f2" text-anchor="middle" textLength="51" lengthAdjust="spacingAndGlyphs">Cursors</text>
<rect x="1849.5" y="53.5" width="62" height="36" rx="6" fill="url(#gbtn)" stroke="#5d5753" stroke-width="1"/>
<text x="1880.5" y="75.5" font-size="14.5" fill="#f2f2f2" text-anchor="middle" textLength="33" lengthAdjust="spacingAndGlyphs">Note</text>
<rect x="1777.5" y="99.5" width="62" height="36" rx="6" fill="url(#gbtn)" stroke="#5d5753" stroke-width="1"/>
<text x="1808.5" y="121.5" font-size="14.5" fill="#f2f2f2" text-anchor="middle" textLength="60" lengthAdjust="spacingAndGlyphs">Measure</text>
<rect x="1849.5" y="99.5" width="62" height="36" rx="6" fill="url(#gbtn)" stroke="#5d5753" stroke-width="1"/>
<text x="1880.5" y="121.5" font-size="14.5" fill="#f2f2f2" text-anchor="middle" textLength="46" lengthAdjust="spacingAndGlyphs">Search</text>
<rect x="1777.5" y="145.5" width="62" height="36" rx="6" fill="url(#gbtn)" stroke="#5d5753" stroke-width="1"/>
<text x="1808.5" y="159.5" font-size="14.5" fill="#f2f2f2" text-anchor="middle" textLength="48" lengthAdjust="spacingAndGlyphs">Results</text>
<text x="1808.5" y="175.5" font-size="14.5" fill="#f2f2f2" text-anchor="middle" textLength="36" lengthAdjust="spacingAndGlyphs">Table</text>
<rect x="1849.5" y="145.5" width="62" height="36" rx="6" fill="url(#gbtn)" stroke="#5d5753" stroke-width="1"/>
<text x="1880.5" y="167.5" font-size="14.5" fill="#f2f2f2" text-anchor="middle" textLength="28" lengthAdjust="spacingAndGlyphs">Plot</text>
<line x1="1773" y1="190.5" x2="1917" y2="190.5" stroke="#6e6763" stroke-width="1"/>
<line x1="1773" y1="943.5" x2="1917" y2="943.5" stroke="#6e6763" stroke-width="1"/>
<rect x="1776.5" y="952.5" width="62" height="36" rx="6" fill="url(#gbtn)" stroke="#5d5753" stroke-width="1"/>
<path d="M1795,959.5 h15.5 M1795.8,959.5 v14.5 M1795,973.2 h7 M1810,959.5 v5" stroke="#c8c8c8" stroke-width="1.6" stroke-dasharray="1.8 2.6" fill="none"/>
<circle cx="1809.3" cy="972" r="5.4" fill="#3a3a3a" stroke="#d6d6d6" stroke-width="1.3"/><circle cx="1809.3" cy="972" r="3.3" fill="#8c8c8c"/>
<line x1="1813.3" y1="976" x2="1819" y2="981.6" stroke="#d6d6d6" stroke-width="3" stroke-linecap="round"/>
<line x1="1813.6" y1="976.3" x2="1818.8" y2="981.4" stroke="#555" stroke-width="1" stroke-linecap="round"/>
<g fill="none" stroke="#cdcdcd" stroke-width="1.4" stroke-linecap="round"><ellipse cx="1882.7" cy="959" rx="13.1" ry="4.2"/><path d="M1869.6,959.2 V962 A13.1,4.2 0 0 0 1895.8,962 V959.2"/><path d="M1870.8,964.4 L1872.6,982.8 A10.1,3.7 0 0 0 1892.8,982.8 L1894.6,964.4"/><path d="M1876.6,967 L1877.6,982.5 M1888.8,967 L1887.8,982.5" stroke="#9a9a9a" stroke-width="1.3"/><path d="M1882.7,967.5 V983.5" stroke="#d8d8d8" stroke-width="1.3"/><path d="M1878.6,958 Q1882.7,955.6 1886.8,958" stroke="#a8a8a8" stroke-width="1.5"/></g>
<circle cx="1762" cy="501.7" r="2.1" fill="#d2d2d2"/>
<circle cx="1762" cy="510.3" r="2.1" fill="#d2d2d2"/>
<circle cx="1762" cy="518.9" r="2.1" fill="#d2d2d2"/>
<rect x="3" y="999" width="90" height="78.6" rx="4" fill="#cdcdcd"/>
<path d="M3,1018 V1003 Q3,999 7,999 H89 Q93,999 93,1003 V1018 Z" fill="#4a4622"/>
<rect x="3" y="1018" width="90" height="1.2" fill="#a8a8a8"/>
<text x="8.5" y="1013.4" font-size="15.5" fill="#f6ea35" textLength="29" lengthAdjust="spacingAndGlyphs">Ch 1</text>
<text x="11" y="1035.6" font-size="15.5" fill="#111" textLength="47" lengthAdjust="spacingAndGlyphs">1 V/div</text>
<text x="11" y="1054.4" font-size="15.5" fill="#111" textLength="63" lengthAdjust="spacingAndGlyphs">10 dB/div</text>
<text x="11" y="1073.6" font-size="15.5" fill="#111" textLength="40" lengthAdjust="spacingAndGlyphs">1 GHz</text>
<text x="76.5" y="1069" font-size="9.5" fill="#111">B</text>
<text x="82.5" y="1071.5" font-size="9" fill="#111">w</text>
<rect x="98" y="999" width="90" height="78.6" rx="4" fill="#cdcdcd"/>
<path d="M98,1018 V1003 Q98,999 102,999 H184 Q188,999 188,1003 V1018 Z" fill="#22d1da"/>
<rect x="98" y="1018" width="90" height="1.2" fill="#a8a8a8"/>
<text x="103.5" y="1013.4" font-size="15.5" fill="#0a0a0a" textLength="29" lengthAdjust="spacingAndGlyphs">Ch 2</text>
<text x="106" y="1035.6" font-size="15.5" fill="#111" textLength="47" lengthAdjust="spacingAndGlyphs">1 V/div</text>
<text x="106" y="1054.4" font-size="15.5" fill="#111" textLength="63" lengthAdjust="spacingAndGlyphs">10 dB/div</text>
<text x="106" y="1073.6" font-size="15.5" fill="#111" textLength="40" lengthAdjust="spacingAndGlyphs">1 GHz</text>
<text x="171.5" y="1069" font-size="9.5" fill="#111">B</text>
<text x="177.5" y="1071.5" font-size="9" fill="#111">w</text>
<rect x="743.5" y="998.5" width="39.6" height="78.6" rx="6" fill="url(#gbtn)" stroke="#5d5753" stroke-width="1"/>
<rect x="747.5" y="1006" width="31.5" height="2" rx="1" fill="#f0405e"/>
<text x="763.3" y="1043.8" font-size="21" fill="#f2f2f2" text-anchor="middle">3</text>
<rect x="788.5" y="998.5" width="39.6" height="78.6" rx="6" fill="url(#gbtn)" stroke="#5d5753" stroke-width="1"/>
<rect x="792.5" y="1006" width="31.5" height="2" rx="1" fill="#93d422"/>
<text x="808.3" y="1043.8" font-size="21" fill="#f2f2f2" text-anchor="middle">4</text>
<rect x="849.5" y="998.5" width="39.6" height="78.6" rx="6" fill="url(#gbtn)" stroke="#5d5753" stroke-width="1"/>
<rect x="853.5" y="1006" width="31.5" height="2" rx="1" fill="#ff8f1f"/>
<text x="869.3" y="1028.4" font-size="15" fill="#f2f2f2" text-anchor="middle" textLength="29" lengthAdjust="spacingAndGlyphs">Add</text>
<text x="869.3" y="1044.4" font-size="15" fill="#f2f2f2" text-anchor="middle" textLength="31" lengthAdjust="spacingAndGlyphs">New</text>
<text x="869.3" y="1060.4" font-size="15" fill="#f2f2f2" text-anchor="middle" textLength="36" lengthAdjust="spacingAndGlyphs">Math</text>
<rect x="894.5" y="998.5" width="39.6" height="78.6" rx="6" fill="url(#gbtn)" stroke="#5d5753" stroke-width="1"/>
<rect x="898.5" y="1006" width="31.5" height="2" rx="1" fill="#cfd0e0"/>
<text x="914.3" y="1028.4" font-size="15" fill="#f2f2f2" text-anchor="middle" textLength="29" lengthAdjust="spacingAndGlyphs">Add</text>
<text x="914.3" y="1044.4" font-size="15" fill="#f2f2f2" text-anchor="middle" textLength="31" lengthAdjust="spacingAndGlyphs">New</text>
<text x="914.3" y="1060.4" font-size="15" fill="#f2f2f2" text-anchor="middle" textLength="24" lengthAdjust="spacingAndGlyphs">Ref</text>
<rect x="939.5" y="998.5" width="39.6" height="78.6" rx="6" fill="url(#gbtn)" stroke="#5d5753" stroke-width="1"/>
<rect x="943.5" y="1006" width="31.5" height="2" rx="1" fill="#c25ff2"/>
<text x="959.3" y="1028.4" font-size="15" fill="#f2f2f2" text-anchor="middle" textLength="29" lengthAdjust="spacingAndGlyphs">Add</text>
<text x="959.3" y="1044.4" font-size="15" fill="#f2f2f2" text-anchor="middle" textLength="31" lengthAdjust="spacingAndGlyphs">New</text>
<text x="959.3" y="1060.4" font-size="15" fill="#f2f2f2" text-anchor="middle" textLength="25" lengthAdjust="spacingAndGlyphs">Bus</text>
<rect x="1000.5" y="998.5" width="39.6" height="78.6" rx="6" fill="url(#gbtn)" stroke="#5d5753" stroke-width="1"/>
<rect x="1004.5" y="1006" width="31.5" height="2" rx="1" fill="#4b4b4b"/>
<text x="1020.3" y="1044.2" font-size="15.5" fill="#f2f2f2" text-anchor="middle" textLength="34" lengthAdjust="spacingAndGlyphs">DVM</text>
<rect x="1050.5" y="998.5" width="39.6" height="78.6" rx="6" fill="url(#gbtn)" stroke="#5d5753" stroke-width="1"/>
<rect x="1054.5" y="1006" width="31.5" height="2" rx="1" fill="#4b4b4b"/>
<text x="1070.3" y="1044.2" font-size="15.5" fill="#f2f2f2" text-anchor="middle" textLength="29" lengthAdjust="spacingAndGlyphs">AFG</text>
<line x1="838.5" y1="998.5" x2="838.5" y2="1077" stroke="#5a5a5a" stroke-width="1"/>
<line x1="989.5" y1="998.5" x2="989.5" y2="1077" stroke="#5a5a5a" stroke-width="1"/>
<line x1="1100.5" y1="998.5" x2="1100.5" y2="1077" stroke="#5a5a5a" stroke-width="1"/>
<rect x="1111" y="998.4" width="160.5" height="78.6" rx="4" fill="#cdcdcd"/>
<path d="M1111,1016.6 V1002.4 Q1111,998.4 1115,998.4 H1267.5 Q1271.5,998.4 1271.5,1002.4 V1016.6 Z" fill="#59595b"/>
<rect x="1111" y="1016.6" width="160.5" height="1.4" fill="#9a9a9a"/>
<text x="1116.5" y="1012.4" font-size="15.5" fill="#f4f4f4" textLength="65" lengthAdjust="spacingAndGlyphs">Spectrum</text>
<text x="1118" y="1035" font-size="15.5" fill="#111" textLength="140" lengthAdjust="spacingAndGlyphs">CF: 98.5000000 MHz</text>
<text x="1118" y="1053.6" font-size="15.5" fill="#111" textLength="133" lengthAdjust="spacingAndGlyphs">Span: 7.00000 MHz</text>
<text x="1118" y="1072.3" font-size="15.5" fill="#111" textLength="100" lengthAdjust="spacingAndGlyphs">RBW: 7.00 kHz</text>
<rect x="1281" y="998.4" width="200" height="78.6" rx="4" fill="#cdcdcd"/>
<path d="M1281,1016.6 V1002.4 Q1281,998.4 1285,998.4 H1477 Q1481,998.4 1481,1002.4 V1016.6 Z" fill="#59595b"/>
<rect x="1281" y="1016.6" width="200" height="1.4" fill="#9a9a9a"/>
<text x="1286.5" y="1012.4" font-size="15.5" fill="#f4f4f4" textLength="73" lengthAdjust="spacingAndGlyphs">Horizontal</text>
<text x="1288" y="1035" font-size="15.5" fill="#111" textLength="65" lengthAdjust="spacingAndGlyphs">40 ms/div</text>
<text x="1288" y="1053.6" font-size="15.5" fill="#111" textLength="98" lengthAdjust="spacingAndGlyphs">SR: 3.125 MS/s</text>
<text x="1288" y="1072.3" font-size="15.5" fill="#111" textLength="93" lengthAdjust="spacingAndGlyphs">RL: 1.25 Mpts</text>
<text x="1394" y="1035" font-size="15.5" fill="#111" textLength="48" lengthAdjust="spacingAndGlyphs">400 ms</text>
<text x="1394" y="1053.6" font-size="15.5" fill="#111" textLength="63" lengthAdjust="spacingAndGlyphs">320 ns/pt</text>
<text x="1408" y="1072.3" font-size="15.5" fill="#111" textLength="35" lengthAdjust="spacingAndGlyphs">8.4%</text>
<path d="M1394.4,1061.6 H1402.4 V1069.5 H1400 L1398.4,1072.6 L1396.8,1069.5 H1394.4 Z" fill="#111" stroke="#f58a1f" stroke-width="1.3"/>
<text x="1398.4" y="1068.2" font-size="6.5" fill="#fff" text-anchor="middle" font-weight="bold">T</text>
<rect x="1491" y="998.4" width="160" height="78.6" rx="4" fill="#cdcdcd"/>
<path d="M1491,1016.6 V1002.4 Q1491,998.4 1495,998.4 H1647 Q1651,998.4 1651,1002.4 V1016.6 Z" fill="#59595b"/>
<rect x="1491" y="1016.6" width="160" height="1.4" fill="#9a9a9a"/>
<text x="1496.5" y="1012.4" font-size="15.5" fill="#f4f4f4" textLength="49" lengthAdjust="spacingAndGlyphs">Trigger</text>
<rect x="1498.3" y="1023" width="29" height="15.4" rx="5" fill="#fbef33" stroke="#111" stroke-width="1"/>
<text x="1513" y="1035.6" font-size="15" fill="#111" text-anchor="middle">1</text>
<path d="M1538,1035.6 H1543 L1550,1026.2 H1555" fill="none" stroke="#3c3c7a" stroke-width="1.1"/>
<text x="1565" y="1035" font-size="15.5" fill="#111" textLength="34" lengthAdjust="spacingAndGlyphs">1.6 V</text>
<rect x="1661" y="998.4" width="150" height="78.6" rx="4" fill="#cdcdcd"/>
<path d="M1661,1016.6 V1002.4 Q1661,998.4 1665,998.4 H1807 Q1811,998.4 1811,1002.4 V1016.6 Z" fill="#59595b"/>
<rect x="1661" y="1016.6" width="150" height="1.4" fill="#9a9a9a"/>
<text x="1666.5" y="1012.4" font-size="15.5" fill="#f4f4f4" textLength="78" lengthAdjust="spacingAndGlyphs">Acquisition</text>
<text x="1668.5" y="1035" font-size="15.5" fill="#111" textLength="38" lengthAdjust="spacingAndGlyphs">Auto,</text>
<text x="1727.5" y="1035" font-size="15.5" fill="#111" textLength="55" lengthAdjust="spacingAndGlyphs">Analyze</text>
<text x="1668.5" y="1053.6" font-size="15.5" fill="#111" textLength="104" lengthAdjust="spacingAndGlyphs">Sample: 12 bits</text>
<text x="1668.5" y="1072.3" font-size="15.5" fill="#111" textLength="74" lengthAdjust="spacingAndGlyphs">Single: 1 /1</text>
<rect x="1821.5" y="998.7" width="89.5" height="34.8" rx="5" fill="#ff2029" stroke="#5a2a2a" stroke-width="1"/>
<text x="1866" y="1020" font-size="14" fill="#fff" text-anchor="middle" font-weight="bold" textLength="51" lengthAdjust="spacingAndGlyphs">Stopped</text>
</svg>
</body></html>
